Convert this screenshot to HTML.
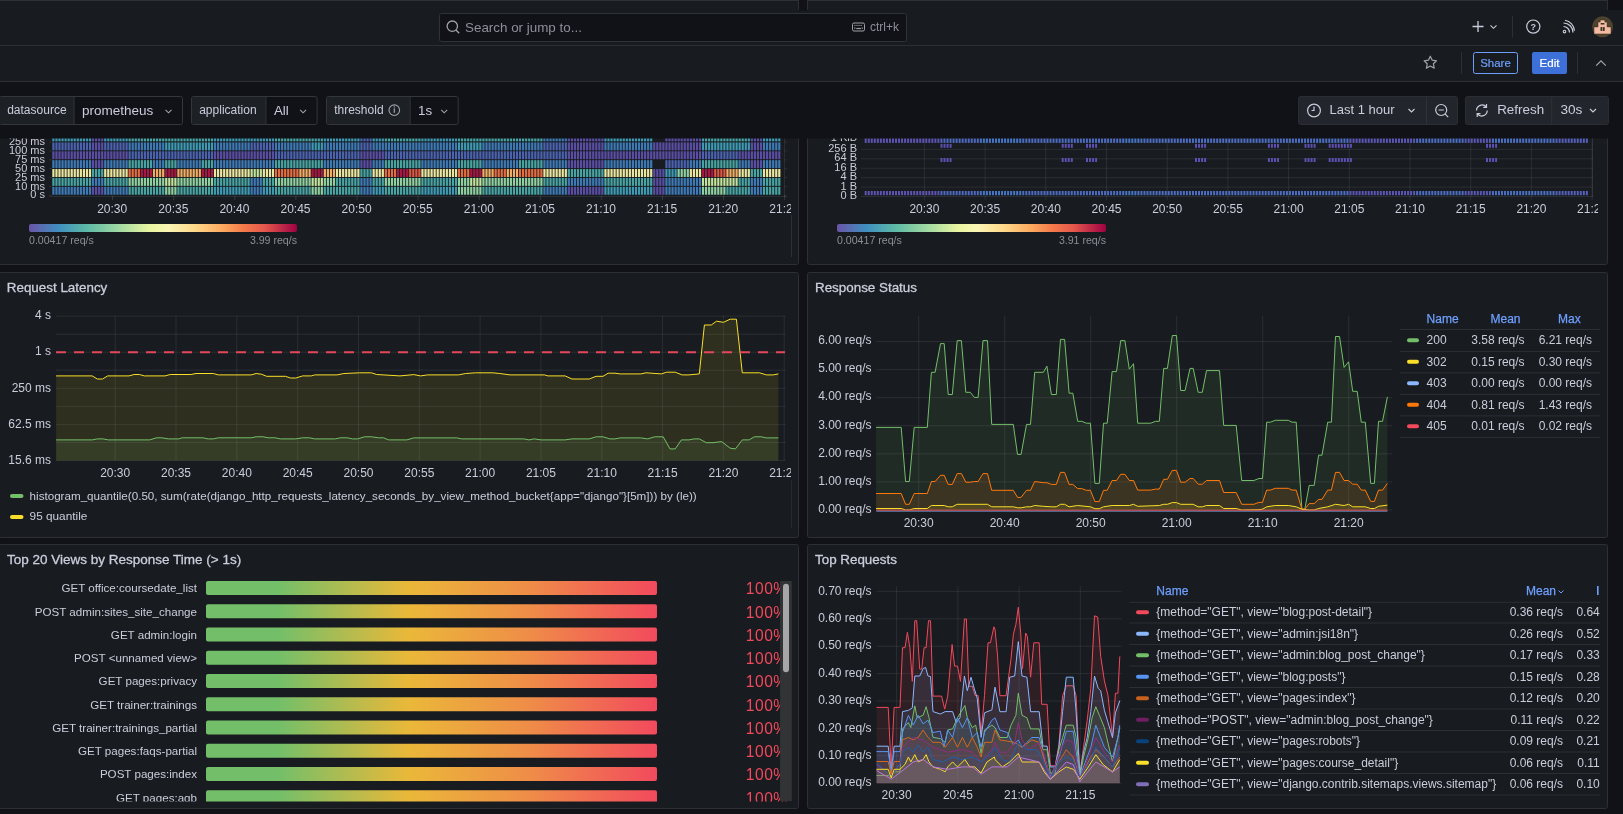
<!DOCTYPE html>
<html><head><meta charset="utf-8"><style>
html,body{margin:0;padding:0;background:#111217;width:1623px;height:814px;overflow:hidden;font-family:"Liberation Sans", sans-serif;}
svg{position:absolute;left:0;top:0;will-change:transform;}
svg text{font-family:"Liberation Sans", sans-serif;}
</style></head><body>
<svg width="1623" height="814" viewBox="0 0 1623 814">

<rect x="-1.5" y="-39.5" width="800" height="304" rx="2" fill="#181b1f" stroke="#2c2f35" stroke-width="1"/>
<rect x="807.5" y="-39.5" width="800" height="304" rx="2" fill="#181b1f" stroke="#2c2f35" stroke-width="1"/>
<rect x="-1.5" y="272.5" width="800" height="265" rx="2" fill="#181b1f" stroke="#2c2f35" stroke-width="1"/>
<rect x="807.5" y="272.5" width="800" height="265" rx="2" fill="#181b1f" stroke="#2c2f35" stroke-width="1"/>
<rect x="-1.5" y="544.5" width="800" height="264" rx="2" fill="#181b1f" stroke="#2c2f35" stroke-width="1"/>
<rect x="807.5" y="544.5" width="800" height="264" rx="2" fill="#181b1f" stroke="#2c2f35" stroke-width="1"/>
<g>
<rect x="52.30" y="133.00" width="2.2" height="8.30" fill="#3d9ab2"/><rect x="55.35" y="133.00" width="2.2" height="8.30" fill="#3d9ab2"/><rect x="58.40" y="133.00" width="2.2" height="8.30" fill="#3d9ab2"/><rect x="61.45" y="133.00" width="2.2" height="8.30" fill="#3d9ab2"/><rect x="64.50" y="133.00" width="2.2" height="8.30" fill="#3d9ab2"/><rect x="67.55" y="133.00" width="2.2" height="8.30" fill="#3d9ab2"/><rect x="70.60" y="133.00" width="2.2" height="8.30" fill="#3d9ab2"/><rect x="73.65" y="133.00" width="2.2" height="8.30" fill="#3d9ab2"/><rect x="76.70" y="133.00" width="2.2" height="8.30" fill="#3d9ab2"/><rect x="79.75" y="133.00" width="2.2" height="8.30" fill="#3d9ab2"/><rect x="82.80" y="133.00" width="2.2" height="8.30" fill="#3d9ab2"/><rect x="85.85" y="133.00" width="2.2" height="8.30" fill="#3d9ab2"/><rect x="88.90" y="133.00" width="2.2" height="8.30" fill="#3d9ab2"/><rect x="91.95" y="133.00" width="2.2" height="8.30" fill="#594da4"/><rect x="95.00" y="133.00" width="2.2" height="8.30" fill="#594da4"/><rect x="98.05" y="133.00" width="2.2" height="8.30" fill="#594da4"/><rect x="101.10" y="133.00" width="2.2" height="8.30" fill="#594da4"/><rect x="104.15" y="133.00" width="2.2" height="8.30" fill="#3d9ab2"/><rect x="107.20" y="133.00" width="2.2" height="8.30" fill="#3d9ab2"/><rect x="110.25" y="133.00" width="2.2" height="8.30" fill="#3d9ab2"/><rect x="113.30" y="133.00" width="2.2" height="8.30" fill="#3d9ab2"/><rect x="116.35" y="133.00" width="2.2" height="8.30" fill="#3d9ab2"/><rect x="119.40" y="133.00" width="2.2" height="8.30" fill="#3d9ab2"/><rect x="122.45" y="133.00" width="2.2" height="8.30" fill="#3d9ab2"/><rect x="125.50" y="133.00" width="2.2" height="8.30" fill="#3d9ab2"/><rect x="128.55" y="133.00" width="2.2" height="8.30" fill="#47a4a2"/><rect x="131.60" y="133.00" width="2.2" height="8.30" fill="#47a4a2"/><rect x="134.65" y="133.00" width="2.2" height="8.30" fill="#47a4a2"/><rect x="137.70" y="133.00" width="2.2" height="8.30" fill="#47a4a2"/><rect x="140.75" y="133.00" width="2.2" height="8.30" fill="#47a4a2"/><rect x="143.80" y="133.00" width="2.2" height="8.30" fill="#47a4a2"/><rect x="146.85" y="133.00" width="2.2" height="8.30" fill="#47a4a2"/><rect x="149.90" y="133.00" width="2.2" height="8.30" fill="#47a4a2"/><rect x="152.95" y="133.00" width="2.2" height="8.30" fill="#47a4a2"/><rect x="156.00" y="133.00" width="2.2" height="8.30" fill="#47a4a2"/><rect x="159.05" y="133.00" width="2.2" height="8.30" fill="#47a4a2"/><rect x="162.10" y="133.00" width="2.2" height="8.30" fill="#47a4a2"/><rect x="165.15" y="133.00" width="2.2" height="8.30" fill="#47a4a2"/><rect x="168.20" y="133.00" width="2.2" height="8.30" fill="#47a4a2"/><rect x="171.25" y="133.00" width="2.2" height="8.30" fill="#47a4a2"/><rect x="174.30" y="133.00" width="2.2" height="8.30" fill="#47a4a2"/><rect x="177.35" y="133.00" width="2.2" height="8.30" fill="#47a4a2"/><rect x="180.40" y="133.00" width="2.2" height="8.30" fill="#47a4a2"/><rect x="183.45" y="133.00" width="2.2" height="8.30" fill="#47a4a2"/><rect x="186.50" y="133.00" width="2.2" height="8.30" fill="#47a4a2"/><rect x="189.55" y="133.00" width="2.2" height="8.30" fill="#47a4a2"/><rect x="192.60" y="133.00" width="2.2" height="8.30" fill="#47a4a2"/><rect x="195.65" y="133.00" width="2.2" height="8.30" fill="#47a4a2"/><rect x="198.70" y="133.00" width="2.2" height="8.30" fill="#47a4a2"/><rect x="201.75" y="133.00" width="2.2" height="8.30" fill="#47a4a2"/><rect x="204.80" y="133.00" width="2.2" height="8.30" fill="#47a4a2"/><rect x="207.85" y="133.00" width="2.2" height="8.30" fill="#47a4a2"/><rect x="210.90" y="133.00" width="2.2" height="8.30" fill="#47a4a2"/><rect x="213.95" y="133.00" width="2.2" height="8.30" fill="#3d9ab2"/><rect x="217.00" y="133.00" width="2.2" height="8.30" fill="#3d9ab2"/><rect x="220.05" y="133.00" width="2.2" height="8.30" fill="#3d9ab2"/><rect x="223.10" y="133.00" width="2.2" height="8.30" fill="#3d9ab2"/><rect x="226.15" y="133.00" width="2.2" height="8.30" fill="#3d9ab2"/><rect x="229.20" y="133.00" width="2.2" height="8.30" fill="#3d9ab2"/><rect x="232.25" y="133.00" width="2.2" height="8.30" fill="#3d9ab2"/><rect x="235.30" y="133.00" width="2.2" height="8.30" fill="#3d9ab2"/><rect x="238.35" y="133.00" width="2.2" height="8.30" fill="#3d9ab2"/><rect x="241.40" y="133.00" width="2.2" height="8.30" fill="#3d9ab2"/><rect x="244.45" y="133.00" width="2.2" height="8.30" fill="#3d9ab2"/><rect x="247.50" y="133.00" width="2.2" height="8.30" fill="#3d9ab2"/><rect x="250.55" y="133.00" width="2.2" height="8.30" fill="#3d9ab2"/><rect x="253.60" y="133.00" width="2.2" height="8.30" fill="#3d9ab2"/><rect x="256.65" y="133.00" width="2.2" height="8.30" fill="#3d9ab2"/><rect x="259.70" y="133.00" width="2.2" height="8.30" fill="#3d9ab2"/><rect x="262.75" y="133.00" width="2.2" height="8.30" fill="#3d9ab2"/><rect x="265.80" y="133.00" width="2.2" height="8.30" fill="#3d9ab2"/><rect x="268.85" y="133.00" width="2.2" height="8.30" fill="#3d9ab2"/><rect x="271.90" y="133.00" width="2.2" height="8.30" fill="#3d9ab2"/><rect x="274.95" y="133.00" width="2.2" height="8.30" fill="#47a4a2"/><rect x="278.00" y="133.00" width="2.2" height="8.30" fill="#47a4a2"/><rect x="281.05" y="133.00" width="2.2" height="8.30" fill="#47a4a2"/><rect x="284.10" y="133.00" width="2.2" height="8.30" fill="#47a4a2"/><rect x="287.15" y="133.00" width="2.2" height="8.30" fill="#47a4a2"/><rect x="290.20" y="133.00" width="2.2" height="8.30" fill="#47a4a2"/><rect x="293.25" y="133.00" width="2.2" height="8.30" fill="#47a4a2"/><rect x="296.30" y="133.00" width="2.2" height="8.30" fill="#47a4a2"/><rect x="299.35" y="133.00" width="2.2" height="8.30" fill="#47a4a2"/><rect x="302.40" y="133.00" width="2.2" height="8.30" fill="#47a4a2"/><rect x="305.45" y="133.00" width="2.2" height="8.30" fill="#47a4a2"/><rect x="308.50" y="133.00" width="2.2" height="8.30" fill="#47a4a2"/><rect x="311.55" y="133.00" width="2.2" height="8.30" fill="#47a4a2"/><rect x="314.60" y="133.00" width="2.2" height="8.30" fill="#47a4a2"/><rect x="317.65" y="133.00" width="2.2" height="8.30" fill="#47a4a2"/><rect x="320.70" y="133.00" width="2.2" height="8.30" fill="#47a4a2"/><rect x="323.75" y="133.00" width="2.2" height="8.30" fill="#3d9ab2"/><rect x="326.80" y="133.00" width="2.2" height="8.30" fill="#3d9ab2"/><rect x="329.85" y="133.00" width="2.2" height="8.30" fill="#3d9ab2"/><rect x="332.90" y="133.00" width="2.2" height="8.30" fill="#3d9ab2"/><rect x="335.95" y="133.00" width="2.2" height="8.30" fill="#3d9ab2"/><rect x="339.00" y="133.00" width="2.2" height="8.30" fill="#3d9ab2"/><rect x="342.05" y="133.00" width="2.2" height="8.30" fill="#3d9ab2"/><rect x="345.10" y="133.00" width="2.2" height="8.30" fill="#3d9ab2"/><rect x="348.15" y="133.00" width="2.2" height="8.30" fill="#3d9ab2"/><rect x="351.20" y="133.00" width="2.2" height="8.30" fill="#3d9ab2"/><rect x="354.25" y="133.00" width="2.2" height="8.30" fill="#3d9ab2"/><rect x="357.30" y="133.00" width="2.2" height="8.30" fill="#3d9ab2"/><rect x="360.35" y="133.00" width="2.2" height="8.30" fill="#4a62b0"/><rect x="363.40" y="133.00" width="2.2" height="8.30" fill="#4a62b0"/><rect x="366.45" y="133.00" width="2.2" height="8.30" fill="#4a62b0"/><rect x="369.50" y="133.00" width="2.2" height="8.30" fill="#4a62b0"/><rect x="372.55" y="133.00" width="2.2" height="8.30" fill="#3d9ab2"/><rect x="375.60" y="133.00" width="2.2" height="8.30" fill="#3d9ab2"/><rect x="378.65" y="133.00" width="2.2" height="8.30" fill="#3d9ab2"/><rect x="381.70" y="133.00" width="2.2" height="8.30" fill="#3d9ab2"/><rect x="384.75" y="133.00" width="2.2" height="8.30" fill="#47a4a2"/><rect x="387.80" y="133.00" width="2.2" height="8.30" fill="#47a4a2"/><rect x="390.85" y="133.00" width="2.2" height="8.30" fill="#47a4a2"/><rect x="393.90" y="133.00" width="2.2" height="8.30" fill="#47a4a2"/><rect x="396.95" y="133.00" width="2.2" height="8.30" fill="#47a4a2"/><rect x="400.00" y="133.00" width="2.2" height="8.30" fill="#47a4a2"/><rect x="403.05" y="133.00" width="2.2" height="8.30" fill="#47a4a2"/><rect x="406.10" y="133.00" width="2.2" height="8.30" fill="#47a4a2"/><rect x="409.15" y="133.00" width="2.2" height="8.30" fill="#47a4a2"/><rect x="412.20" y="133.00" width="2.2" height="8.30" fill="#47a4a2"/><rect x="415.25" y="133.00" width="2.2" height="8.30" fill="#47a4a2"/><rect x="418.30" y="133.00" width="2.2" height="8.30" fill="#47a4a2"/><rect x="421.35" y="133.00" width="2.2" height="8.30" fill="#3d9ab2"/><rect x="424.40" y="133.00" width="2.2" height="8.30" fill="#3d9ab2"/><rect x="427.45" y="133.00" width="2.2" height="8.30" fill="#3d9ab2"/><rect x="430.50" y="133.00" width="2.2" height="8.30" fill="#3d9ab2"/><rect x="433.55" y="133.00" width="2.2" height="8.30" fill="#3d9ab2"/><rect x="436.60" y="133.00" width="2.2" height="8.30" fill="#3d9ab2"/><rect x="439.65" y="133.00" width="2.2" height="8.30" fill="#3d9ab2"/><rect x="442.70" y="133.00" width="2.2" height="8.30" fill="#3d9ab2"/><rect x="445.75" y="133.00" width="2.2" height="8.30" fill="#3d9ab2"/><rect x="448.80" y="133.00" width="2.2" height="8.30" fill="#3d9ab2"/><rect x="451.85" y="133.00" width="2.2" height="8.30" fill="#3d9ab2"/><rect x="454.90" y="133.00" width="2.2" height="8.30" fill="#3d9ab2"/><rect x="457.95" y="133.00" width="2.2" height="8.30" fill="#47a4a2"/><rect x="461.00" y="133.00" width="2.2" height="8.30" fill="#47a4a2"/><rect x="464.05" y="133.00" width="2.2" height="8.30" fill="#47a4a2"/><rect x="467.10" y="133.00" width="2.2" height="8.30" fill="#47a4a2"/><rect x="470.15" y="133.00" width="2.2" height="8.30" fill="#47a4a2"/><rect x="473.20" y="133.00" width="2.2" height="8.30" fill="#47a4a2"/><rect x="476.25" y="133.00" width="2.2" height="8.30" fill="#47a4a2"/><rect x="479.30" y="133.00" width="2.2" height="8.30" fill="#47a4a2"/><rect x="482.35" y="133.00" width="2.2" height="8.30" fill="#47a4a2"/><rect x="485.40" y="133.00" width="2.2" height="8.30" fill="#47a4a2"/><rect x="488.45" y="133.00" width="2.2" height="8.30" fill="#47a4a2"/><rect x="491.50" y="133.00" width="2.2" height="8.30" fill="#47a4a2"/><rect x="494.55" y="133.00" width="2.2" height="8.30" fill="#47a4a2"/><rect x="497.60" y="133.00" width="2.2" height="8.30" fill="#47a4a2"/><rect x="500.65" y="133.00" width="2.2" height="8.30" fill="#47a4a2"/><rect x="503.70" y="133.00" width="2.2" height="8.30" fill="#47a4a2"/><rect x="506.75" y="133.00" width="2.2" height="8.30" fill="#47a4a2"/><rect x="509.80" y="133.00" width="2.2" height="8.30" fill="#47a4a2"/><rect x="512.85" y="133.00" width="2.2" height="8.30" fill="#47a4a2"/><rect x="515.90" y="133.00" width="2.2" height="8.30" fill="#47a4a2"/><rect x="518.95" y="133.00" width="2.2" height="8.30" fill="#47a4a2"/><rect x="522.00" y="133.00" width="2.2" height="8.30" fill="#47a4a2"/><rect x="525.05" y="133.00" width="2.2" height="8.30" fill="#47a4a2"/><rect x="528.10" y="133.00" width="2.2" height="8.30" fill="#47a4a2"/><rect x="531.15" y="133.00" width="2.2" height="8.30" fill="#47a4a2"/><rect x="534.20" y="133.00" width="2.2" height="8.30" fill="#47a4a2"/><rect x="537.25" y="133.00" width="2.2" height="8.30" fill="#47a4a2"/><rect x="540.30" y="133.00" width="2.2" height="8.30" fill="#47a4a2"/><rect x="543.35" y="133.00" width="2.2" height="8.30" fill="#3d79b5"/><rect x="546.40" y="133.00" width="2.2" height="8.30" fill="#3d79b5"/><rect x="549.45" y="133.00" width="2.2" height="8.30" fill="#3d79b5"/><rect x="552.50" y="133.00" width="2.2" height="8.30" fill="#3d79b5"/><rect x="555.55" y="133.00" width="2.2" height="8.30" fill="#3d79b5"/><rect x="558.60" y="133.00" width="2.2" height="8.30" fill="#3d79b5"/><rect x="561.65" y="133.00" width="2.2" height="8.30" fill="#3d79b5"/><rect x="564.70" y="133.00" width="2.2" height="8.30" fill="#3d79b5"/><rect x="567.75" y="133.00" width="2.2" height="8.30" fill="#594da4"/><rect x="570.80" y="133.00" width="2.2" height="8.30" fill="#594da4"/><rect x="573.85" y="133.00" width="2.2" height="8.30" fill="#594da4"/><rect x="576.90" y="133.00" width="2.2" height="8.30" fill="#594da4"/><rect x="579.95" y="133.00" width="2.2" height="8.30" fill="#594da4"/><rect x="583.00" y="133.00" width="2.2" height="8.30" fill="#594da4"/><rect x="586.05" y="133.00" width="2.2" height="8.30" fill="#594da4"/><rect x="589.10" y="133.00" width="2.2" height="8.30" fill="#594da4"/><rect x="592.15" y="133.00" width="2.2" height="8.30" fill="#594da4"/><rect x="595.20" y="133.00" width="2.2" height="8.30" fill="#594da4"/><rect x="598.25" y="133.00" width="2.2" height="8.30" fill="#594da4"/><rect x="601.30" y="133.00" width="2.2" height="8.30" fill="#594da4"/><rect x="604.35" y="133.00" width="2.2" height="8.30" fill="#3d9ab2"/><rect x="607.40" y="133.00" width="2.2" height="8.30" fill="#3d9ab2"/><rect x="610.45" y="133.00" width="2.2" height="8.30" fill="#3d9ab2"/><rect x="613.50" y="133.00" width="2.2" height="8.30" fill="#3d9ab2"/><rect x="616.55" y="133.00" width="2.2" height="8.30" fill="#3d9ab2"/><rect x="619.60" y="133.00" width="2.2" height="8.30" fill="#3d9ab2"/><rect x="622.65" y="133.00" width="2.2" height="8.30" fill="#3d9ab2"/><rect x="625.70" y="133.00" width="2.2" height="8.30" fill="#3d9ab2"/><rect x="628.75" y="133.00" width="2.2" height="8.30" fill="#3d9ab2"/><rect x="631.80" y="133.00" width="2.2" height="8.30" fill="#3d9ab2"/><rect x="634.85" y="133.00" width="2.2" height="8.30" fill="#3d9ab2"/><rect x="637.90" y="133.00" width="2.2" height="8.30" fill="#3d9ab2"/><rect x="640.95" y="133.00" width="2.2" height="8.30" fill="#3d9ab2"/><rect x="644.00" y="133.00" width="2.2" height="8.30" fill="#3d9ab2"/><rect x="647.05" y="133.00" width="2.2" height="8.30" fill="#3d9ab2"/><rect x="650.10" y="133.00" width="2.2" height="8.30" fill="#3d9ab2"/><rect x="665.35" y="133.00" width="2.2" height="8.30" fill="#594da4"/><rect x="668.40" y="133.00" width="2.2" height="8.30" fill="#594da4"/><rect x="671.45" y="133.00" width="2.2" height="8.30" fill="#594da4"/><rect x="674.50" y="133.00" width="2.2" height="8.30" fill="#594da4"/><rect x="677.55" y="133.00" width="2.2" height="8.30" fill="#594da4"/><rect x="680.60" y="133.00" width="2.2" height="8.30" fill="#594da4"/><rect x="683.65" y="133.00" width="2.2" height="8.30" fill="#594da4"/><rect x="686.70" y="133.00" width="2.2" height="8.30" fill="#594da4"/><rect x="689.75" y="133.00" width="2.2" height="8.30" fill="#594da4"/><rect x="692.80" y="133.00" width="2.2" height="8.30" fill="#594da4"/><rect x="695.85" y="133.00" width="2.2" height="8.30" fill="#594da4"/><rect x="698.90" y="133.00" width="2.2" height="8.30" fill="#594da4"/><rect x="701.95" y="133.00" width="2.2" height="8.30" fill="#47a4a2"/><rect x="705.00" y="133.00" width="2.2" height="8.30" fill="#47a4a2"/><rect x="708.05" y="133.00" width="2.2" height="8.30" fill="#47a4a2"/><rect x="711.10" y="133.00" width="2.2" height="8.30" fill="#47a4a2"/><rect x="714.15" y="133.00" width="2.2" height="8.30" fill="#47a4a2"/><rect x="717.20" y="133.00" width="2.2" height="8.30" fill="#47a4a2"/><rect x="720.25" y="133.00" width="2.2" height="8.30" fill="#47a4a2"/><rect x="723.30" y="133.00" width="2.2" height="8.30" fill="#47a4a2"/><rect x="726.35" y="133.00" width="2.2" height="8.30" fill="#47a4a2"/><rect x="729.40" y="133.00" width="2.2" height="8.30" fill="#47a4a2"/><rect x="732.45" y="133.00" width="2.2" height="8.30" fill="#47a4a2"/><rect x="735.50" y="133.00" width="2.2" height="8.30" fill="#47a4a2"/><rect x="738.55" y="133.00" width="2.2" height="8.30" fill="#47a4a2"/><rect x="741.60" y="133.00" width="2.2" height="8.30" fill="#47a4a2"/><rect x="744.65" y="133.00" width="2.2" height="8.30" fill="#47a4a2"/><rect x="747.70" y="133.00" width="2.2" height="8.30" fill="#47a4a2"/><rect x="750.75" y="133.00" width="2.2" height="8.30" fill="#594da4"/><rect x="753.80" y="133.00" width="2.2" height="8.30" fill="#594da4"/><rect x="756.85" y="133.00" width="2.2" height="8.30" fill="#594da4"/><rect x="759.90" y="133.00" width="2.2" height="8.30" fill="#594da4"/><rect x="762.95" y="133.00" width="2.2" height="8.30" fill="#3d9ab2"/><rect x="766.00" y="133.00" width="2.2" height="8.30" fill="#3d9ab2"/><rect x="769.05" y="133.00" width="2.2" height="8.30" fill="#3d9ab2"/><rect x="772.10" y="133.00" width="2.2" height="8.30" fill="#3d9ab2"/><rect x="775.15" y="133.00" width="2.2" height="8.30" fill="#3d9ab2"/><rect x="778.20" y="133.00" width="2.2" height="8.30" fill="#3d9ab2"/><rect x="52.30" y="142.40" width="2.2" height="7.95" fill="#4a62b0"/><rect x="55.35" y="142.40" width="2.2" height="7.95" fill="#4a62b0"/><rect x="58.40" y="142.40" width="2.2" height="7.95" fill="#4a62b0"/><rect x="61.45" y="142.40" width="2.2" height="7.95" fill="#4a62b0"/><rect x="64.50" y="142.40" width="2.2" height="7.95" fill="#4a62b0"/><rect x="67.55" y="142.40" width="2.2" height="7.95" fill="#4a62b0"/><rect x="70.60" y="142.40" width="2.2" height="7.95" fill="#4a62b0"/><rect x="73.65" y="142.40" width="2.2" height="7.95" fill="#4a62b0"/><rect x="76.70" y="142.40" width="2.2" height="7.95" fill="#4a62b0"/><rect x="79.75" y="142.40" width="2.2" height="7.95" fill="#4a62b0"/><rect x="82.80" y="142.40" width="2.2" height="7.95" fill="#4a62b0"/><rect x="85.85" y="142.40" width="2.2" height="7.95" fill="#4a62b0"/><rect x="88.90" y="142.40" width="2.2" height="7.95" fill="#4a62b0"/><rect x="91.95" y="142.40" width="2.2" height="7.95" fill="#594da4"/><rect x="95.00" y="142.40" width="2.2" height="7.95" fill="#594da4"/><rect x="98.05" y="142.40" width="2.2" height="7.95" fill="#594da4"/><rect x="101.10" y="142.40" width="2.2" height="7.95" fill="#594da4"/><rect x="104.15" y="142.40" width="2.2" height="7.95" fill="#4a62b0"/><rect x="107.20" y="142.40" width="2.2" height="7.95" fill="#4a62b0"/><rect x="110.25" y="142.40" width="2.2" height="7.95" fill="#4a62b0"/><rect x="113.30" y="142.40" width="2.2" height="7.95" fill="#4a62b0"/><rect x="116.35" y="142.40" width="2.2" height="7.95" fill="#4a62b0"/><rect x="119.40" y="142.40" width="2.2" height="7.95" fill="#4a62b0"/><rect x="122.45" y="142.40" width="2.2" height="7.95" fill="#4a62b0"/><rect x="125.50" y="142.40" width="2.2" height="7.95" fill="#4a62b0"/><rect x="128.55" y="142.40" width="2.2" height="7.95" fill="#3d79b5"/><rect x="131.60" y="142.40" width="2.2" height="7.95" fill="#3d79b5"/><rect x="134.65" y="142.40" width="2.2" height="7.95" fill="#3d79b5"/><rect x="137.70" y="142.40" width="2.2" height="7.95" fill="#3d79b5"/><rect x="140.75" y="142.40" width="2.2" height="7.95" fill="#3d79b5"/><rect x="143.80" y="142.40" width="2.2" height="7.95" fill="#3d79b5"/><rect x="146.85" y="142.40" width="2.2" height="7.95" fill="#3d79b5"/><rect x="149.90" y="142.40" width="2.2" height="7.95" fill="#3d79b5"/><rect x="152.95" y="142.40" width="2.2" height="7.95" fill="#3d79b5"/><rect x="156.00" y="142.40" width="2.2" height="7.95" fill="#3d79b5"/><rect x="159.05" y="142.40" width="2.2" height="7.95" fill="#3d79b5"/><rect x="162.10" y="142.40" width="2.2" height="7.95" fill="#3d79b5"/><rect x="165.15" y="142.40" width="2.2" height="7.95" fill="#3d9ab2"/><rect x="168.20" y="142.40" width="2.2" height="7.95" fill="#3d9ab2"/><rect x="171.25" y="142.40" width="2.2" height="7.95" fill="#3d9ab2"/><rect x="174.30" y="142.40" width="2.2" height="7.95" fill="#3d9ab2"/><rect x="177.35" y="142.40" width="2.2" height="7.95" fill="#3d9ab2"/><rect x="180.40" y="142.40" width="2.2" height="7.95" fill="#3d9ab2"/><rect x="183.45" y="142.40" width="2.2" height="7.95" fill="#3d9ab2"/><rect x="186.50" y="142.40" width="2.2" height="7.95" fill="#3d9ab2"/><rect x="189.55" y="142.40" width="2.2" height="7.95" fill="#3d9ab2"/><rect x="192.60" y="142.40" width="2.2" height="7.95" fill="#3d9ab2"/><rect x="195.65" y="142.40" width="2.2" height="7.95" fill="#3d9ab2"/><rect x="198.70" y="142.40" width="2.2" height="7.95" fill="#3d9ab2"/><rect x="201.75" y="142.40" width="2.2" height="7.95" fill="#3d9ab2"/><rect x="204.80" y="142.40" width="2.2" height="7.95" fill="#3d9ab2"/><rect x="207.85" y="142.40" width="2.2" height="7.95" fill="#3d9ab2"/><rect x="210.90" y="142.40" width="2.2" height="7.95" fill="#3d9ab2"/><rect x="213.95" y="142.40" width="2.2" height="7.95" fill="#3d79b5"/><rect x="217.00" y="142.40" width="2.2" height="7.95" fill="#3d79b5"/><rect x="220.05" y="142.40" width="2.2" height="7.95" fill="#3d79b5"/><rect x="223.10" y="142.40" width="2.2" height="7.95" fill="#3d79b5"/><rect x="226.15" y="142.40" width="2.2" height="7.95" fill="#3d79b5"/><rect x="229.20" y="142.40" width="2.2" height="7.95" fill="#3d79b5"/><rect x="232.25" y="142.40" width="2.2" height="7.95" fill="#3d79b5"/><rect x="235.30" y="142.40" width="2.2" height="7.95" fill="#3d79b5"/><rect x="238.35" y="142.40" width="2.2" height="7.95" fill="#3d79b5"/><rect x="241.40" y="142.40" width="2.2" height="7.95" fill="#3d79b5"/><rect x="244.45" y="142.40" width="2.2" height="7.95" fill="#3d79b5"/><rect x="247.50" y="142.40" width="2.2" height="7.95" fill="#3d79b5"/><rect x="250.55" y="142.40" width="2.2" height="7.95" fill="#4a62b0"/><rect x="253.60" y="142.40" width="2.2" height="7.95" fill="#4a62b0"/><rect x="256.65" y="142.40" width="2.2" height="7.95" fill="#4a62b0"/><rect x="259.70" y="142.40" width="2.2" height="7.95" fill="#4a62b0"/><rect x="262.75" y="142.40" width="2.2" height="7.95" fill="#4a62b0"/><rect x="265.80" y="142.40" width="2.2" height="7.95" fill="#4a62b0"/><rect x="268.85" y="142.40" width="2.2" height="7.95" fill="#4a62b0"/><rect x="271.90" y="142.40" width="2.2" height="7.95" fill="#4a62b0"/><rect x="274.95" y="142.40" width="2.2" height="7.95" fill="#3d79b5"/><rect x="278.00" y="142.40" width="2.2" height="7.95" fill="#3d79b5"/><rect x="281.05" y="142.40" width="2.2" height="7.95" fill="#3d79b5"/><rect x="284.10" y="142.40" width="2.2" height="7.95" fill="#3d79b5"/><rect x="287.15" y="142.40" width="2.2" height="7.95" fill="#3d79b5"/><rect x="290.20" y="142.40" width="2.2" height="7.95" fill="#3d79b5"/><rect x="293.25" y="142.40" width="2.2" height="7.95" fill="#3d79b5"/><rect x="296.30" y="142.40" width="2.2" height="7.95" fill="#3d79b5"/><rect x="299.35" y="142.40" width="2.2" height="7.95" fill="#3d79b5"/><rect x="302.40" y="142.40" width="2.2" height="7.95" fill="#3d79b5"/><rect x="305.45" y="142.40" width="2.2" height="7.95" fill="#3d79b5"/><rect x="308.50" y="142.40" width="2.2" height="7.95" fill="#3d79b5"/><rect x="311.55" y="142.40" width="2.2" height="7.95" fill="#3d9ab2"/><rect x="314.60" y="142.40" width="2.2" height="7.95" fill="#3d9ab2"/><rect x="317.65" y="142.40" width="2.2" height="7.95" fill="#3d9ab2"/><rect x="320.70" y="142.40" width="2.2" height="7.95" fill="#3d9ab2"/><rect x="323.75" y="142.40" width="2.2" height="7.95" fill="#3d79b5"/><rect x="326.80" y="142.40" width="2.2" height="7.95" fill="#3d79b5"/><rect x="329.85" y="142.40" width="2.2" height="7.95" fill="#3d79b5"/><rect x="332.90" y="142.40" width="2.2" height="7.95" fill="#3d79b5"/><rect x="335.95" y="142.40" width="2.2" height="7.95" fill="#3d79b5"/><rect x="339.00" y="142.40" width="2.2" height="7.95" fill="#3d79b5"/><rect x="342.05" y="142.40" width="2.2" height="7.95" fill="#3d79b5"/><rect x="345.10" y="142.40" width="2.2" height="7.95" fill="#3d79b5"/><rect x="348.15" y="142.40" width="2.2" height="7.95" fill="#3d79b5"/><rect x="351.20" y="142.40" width="2.2" height="7.95" fill="#3d79b5"/><rect x="354.25" y="142.40" width="2.2" height="7.95" fill="#3d79b5"/><rect x="357.30" y="142.40" width="2.2" height="7.95" fill="#3d79b5"/><rect x="360.35" y="142.40" width="2.2" height="7.95" fill="#4a62b0"/><rect x="363.40" y="142.40" width="2.2" height="7.95" fill="#4a62b0"/><rect x="366.45" y="142.40" width="2.2" height="7.95" fill="#4a62b0"/><rect x="369.50" y="142.40" width="2.2" height="7.95" fill="#4a62b0"/><rect x="372.55" y="142.40" width="2.2" height="7.95" fill="#3d79b5"/><rect x="375.60" y="142.40" width="2.2" height="7.95" fill="#3d79b5"/><rect x="378.65" y="142.40" width="2.2" height="7.95" fill="#3d79b5"/><rect x="381.70" y="142.40" width="2.2" height="7.95" fill="#3d79b5"/><rect x="384.75" y="142.40" width="2.2" height="7.95" fill="#3d79b5"/><rect x="387.80" y="142.40" width="2.2" height="7.95" fill="#3d79b5"/><rect x="390.85" y="142.40" width="2.2" height="7.95" fill="#3d79b5"/><rect x="393.90" y="142.40" width="2.2" height="7.95" fill="#3d79b5"/><rect x="396.95" y="142.40" width="2.2" height="7.95" fill="#3d79b5"/><rect x="400.00" y="142.40" width="2.2" height="7.95" fill="#3d79b5"/><rect x="403.05" y="142.40" width="2.2" height="7.95" fill="#3d79b5"/><rect x="406.10" y="142.40" width="2.2" height="7.95" fill="#3d79b5"/><rect x="409.15" y="142.40" width="2.2" height="7.95" fill="#3d79b5"/><rect x="412.20" y="142.40" width="2.2" height="7.95" fill="#3d79b5"/><rect x="415.25" y="142.40" width="2.2" height="7.95" fill="#3d79b5"/><rect x="418.30" y="142.40" width="2.2" height="7.95" fill="#3d79b5"/><rect x="421.35" y="142.40" width="2.2" height="7.95" fill="#3d79b5"/><rect x="424.40" y="142.40" width="2.2" height="7.95" fill="#3d79b5"/><rect x="427.45" y="142.40" width="2.2" height="7.95" fill="#3d79b5"/><rect x="430.50" y="142.40" width="2.2" height="7.95" fill="#3d79b5"/><rect x="433.55" y="142.40" width="2.2" height="7.95" fill="#3d79b5"/><rect x="436.60" y="142.40" width="2.2" height="7.95" fill="#3d79b5"/><rect x="439.65" y="142.40" width="2.2" height="7.95" fill="#3d79b5"/><rect x="442.70" y="142.40" width="2.2" height="7.95" fill="#3d79b5"/><rect x="445.75" y="142.40" width="2.2" height="7.95" fill="#3d79b5"/><rect x="448.80" y="142.40" width="2.2" height="7.95" fill="#3d79b5"/><rect x="451.85" y="142.40" width="2.2" height="7.95" fill="#3d79b5"/><rect x="454.90" y="142.40" width="2.2" height="7.95" fill="#3d79b5"/><rect x="457.95" y="142.40" width="2.2" height="7.95" fill="#3d9ab2"/><rect x="461.00" y="142.40" width="2.2" height="7.95" fill="#3d9ab2"/><rect x="464.05" y="142.40" width="2.2" height="7.95" fill="#3d9ab2"/><rect x="467.10" y="142.40" width="2.2" height="7.95" fill="#3d9ab2"/><rect x="470.15" y="142.40" width="2.2" height="7.95" fill="#3d9ab2"/><rect x="473.20" y="142.40" width="2.2" height="7.95" fill="#3d9ab2"/><rect x="476.25" y="142.40" width="2.2" height="7.95" fill="#3d9ab2"/><rect x="479.30" y="142.40" width="2.2" height="7.95" fill="#3d9ab2"/><rect x="482.35" y="142.40" width="2.2" height="7.95" fill="#3d79b5"/><rect x="485.40" y="142.40" width="2.2" height="7.95" fill="#3d79b5"/><rect x="488.45" y="142.40" width="2.2" height="7.95" fill="#3d79b5"/><rect x="491.50" y="142.40" width="2.2" height="7.95" fill="#3d79b5"/><rect x="494.55" y="142.40" width="2.2" height="7.95" fill="#3d79b5"/><rect x="497.60" y="142.40" width="2.2" height="7.95" fill="#3d79b5"/><rect x="500.65" y="142.40" width="2.2" height="7.95" fill="#3d79b5"/><rect x="503.70" y="142.40" width="2.2" height="7.95" fill="#3d79b5"/><rect x="506.75" y="142.40" width="2.2" height="7.95" fill="#3d79b5"/><rect x="509.80" y="142.40" width="2.2" height="7.95" fill="#3d79b5"/><rect x="512.85" y="142.40" width="2.2" height="7.95" fill="#3d79b5"/><rect x="515.90" y="142.40" width="2.2" height="7.95" fill="#3d79b5"/><rect x="518.95" y="142.40" width="2.2" height="7.95" fill="#3d79b5"/><rect x="522.00" y="142.40" width="2.2" height="7.95" fill="#3d79b5"/><rect x="525.05" y="142.40" width="2.2" height="7.95" fill="#3d79b5"/><rect x="528.10" y="142.40" width="2.2" height="7.95" fill="#3d79b5"/><rect x="531.15" y="142.40" width="2.2" height="7.95" fill="#3d79b5"/><rect x="534.20" y="142.40" width="2.2" height="7.95" fill="#3d79b5"/><rect x="537.25" y="142.40" width="2.2" height="7.95" fill="#3d79b5"/><rect x="540.30" y="142.40" width="2.2" height="7.95" fill="#3d79b5"/><rect x="543.35" y="142.40" width="2.2" height="7.95" fill="#4a62b0"/><rect x="546.40" y="142.40" width="2.2" height="7.95" fill="#4a62b0"/><rect x="549.45" y="142.40" width="2.2" height="7.95" fill="#4a62b0"/><rect x="552.50" y="142.40" width="2.2" height="7.95" fill="#4a62b0"/><rect x="555.55" y="142.40" width="2.2" height="7.95" fill="#4a62b0"/><rect x="558.60" y="142.40" width="2.2" height="7.95" fill="#4a62b0"/><rect x="561.65" y="142.40" width="2.2" height="7.95" fill="#4a62b0"/><rect x="564.70" y="142.40" width="2.2" height="7.95" fill="#4a62b0"/><rect x="567.75" y="142.40" width="2.2" height="7.95" fill="#594da4"/><rect x="570.80" y="142.40" width="2.2" height="7.95" fill="#594da4"/><rect x="573.85" y="142.40" width="2.2" height="7.95" fill="#594da4"/><rect x="576.90" y="142.40" width="2.2" height="7.95" fill="#594da4"/><rect x="579.95" y="142.40" width="2.2" height="7.95" fill="#594da4"/><rect x="583.00" y="142.40" width="2.2" height="7.95" fill="#594da4"/><rect x="586.05" y="142.40" width="2.2" height="7.95" fill="#594da4"/><rect x="589.10" y="142.40" width="2.2" height="7.95" fill="#594da4"/><rect x="592.15" y="142.40" width="2.2" height="7.95" fill="#594da4"/><rect x="595.20" y="142.40" width="2.2" height="7.95" fill="#594da4"/><rect x="598.25" y="142.40" width="2.2" height="7.95" fill="#594da4"/><rect x="601.30" y="142.40" width="2.2" height="7.95" fill="#594da4"/><rect x="604.35" y="142.40" width="2.2" height="7.95" fill="#3d79b5"/><rect x="607.40" y="142.40" width="2.2" height="7.95" fill="#3d79b5"/><rect x="610.45" y="142.40" width="2.2" height="7.95" fill="#3d79b5"/><rect x="613.50" y="142.40" width="2.2" height="7.95" fill="#3d79b5"/><rect x="616.55" y="142.40" width="2.2" height="7.95" fill="#3d79b5"/><rect x="619.60" y="142.40" width="2.2" height="7.95" fill="#3d79b5"/><rect x="622.65" y="142.40" width="2.2" height="7.95" fill="#3d79b5"/><rect x="625.70" y="142.40" width="2.2" height="7.95" fill="#3d79b5"/><rect x="628.75" y="142.40" width="2.2" height="7.95" fill="#3d79b5"/><rect x="631.80" y="142.40" width="2.2" height="7.95" fill="#3d79b5"/><rect x="634.85" y="142.40" width="2.2" height="7.95" fill="#3d79b5"/><rect x="637.90" y="142.40" width="2.2" height="7.95" fill="#3d79b5"/><rect x="640.95" y="142.40" width="2.2" height="7.95" fill="#3d79b5"/><rect x="644.00" y="142.40" width="2.2" height="7.95" fill="#3d79b5"/><rect x="647.05" y="142.40" width="2.2" height="7.95" fill="#3d79b5"/><rect x="650.10" y="142.40" width="2.2" height="7.95" fill="#3d79b5"/><rect x="653.15" y="142.40" width="2.2" height="7.95" fill="#594da4"/><rect x="656.20" y="142.40" width="2.2" height="7.95" fill="#594da4"/><rect x="659.25" y="142.40" width="2.2" height="7.95" fill="#594da4"/><rect x="662.30" y="142.40" width="2.2" height="7.95" fill="#594da4"/><rect x="665.35" y="142.40" width="2.2" height="7.95" fill="#594da4"/><rect x="668.40" y="142.40" width="2.2" height="7.95" fill="#594da4"/><rect x="671.45" y="142.40" width="2.2" height="7.95" fill="#594da4"/><rect x="674.50" y="142.40" width="2.2" height="7.95" fill="#594da4"/><rect x="677.55" y="142.40" width="2.2" height="7.95" fill="#594da4"/><rect x="680.60" y="142.40" width="2.2" height="7.95" fill="#594da4"/><rect x="683.65" y="142.40" width="2.2" height="7.95" fill="#594da4"/><rect x="686.70" y="142.40" width="2.2" height="7.95" fill="#594da4"/><rect x="689.75" y="142.40" width="2.2" height="7.95" fill="#594da4"/><rect x="692.80" y="142.40" width="2.2" height="7.95" fill="#594da4"/><rect x="695.85" y="142.40" width="2.2" height="7.95" fill="#594da4"/><rect x="698.90" y="142.40" width="2.2" height="7.95" fill="#594da4"/><rect x="701.95" y="142.40" width="2.2" height="7.95" fill="#3d9ab2"/><rect x="705.00" y="142.40" width="2.2" height="7.95" fill="#3d9ab2"/><rect x="708.05" y="142.40" width="2.2" height="7.95" fill="#3d9ab2"/><rect x="711.10" y="142.40" width="2.2" height="7.95" fill="#3d9ab2"/><rect x="714.15" y="142.40" width="2.2" height="7.95" fill="#3d9ab2"/><rect x="717.20" y="142.40" width="2.2" height="7.95" fill="#3d9ab2"/><rect x="720.25" y="142.40" width="2.2" height="7.95" fill="#3d9ab2"/><rect x="723.30" y="142.40" width="2.2" height="7.95" fill="#3d9ab2"/><rect x="726.35" y="142.40" width="2.2" height="7.95" fill="#3d9ab2"/><rect x="729.40" y="142.40" width="2.2" height="7.95" fill="#3d9ab2"/><rect x="732.45" y="142.40" width="2.2" height="7.95" fill="#3d9ab2"/><rect x="735.50" y="142.40" width="2.2" height="7.95" fill="#3d9ab2"/><rect x="738.55" y="142.40" width="2.2" height="7.95" fill="#3d9ab2"/><rect x="741.60" y="142.40" width="2.2" height="7.95" fill="#3d9ab2"/><rect x="744.65" y="142.40" width="2.2" height="7.95" fill="#3d9ab2"/><rect x="747.70" y="142.40" width="2.2" height="7.95" fill="#3d9ab2"/><rect x="750.75" y="142.40" width="2.2" height="7.95" fill="#594da4"/><rect x="753.80" y="142.40" width="2.2" height="7.95" fill="#594da4"/><rect x="756.85" y="142.40" width="2.2" height="7.95" fill="#594da4"/><rect x="759.90" y="142.40" width="2.2" height="7.95" fill="#594da4"/><rect x="762.95" y="142.40" width="2.2" height="7.95" fill="#3d79b5"/><rect x="766.00" y="142.40" width="2.2" height="7.95" fill="#3d79b5"/><rect x="769.05" y="142.40" width="2.2" height="7.95" fill="#3d79b5"/><rect x="772.10" y="142.40" width="2.2" height="7.95" fill="#3d79b5"/><rect x="775.15" y="142.40" width="2.2" height="7.95" fill="#3d79b5"/><rect x="778.20" y="142.40" width="2.2" height="7.95" fill="#3d79b5"/><rect x="52.30" y="151.28" width="2.2" height="7.95" fill="#594da4"/><rect x="55.35" y="151.28" width="2.2" height="7.95" fill="#594da4"/><rect x="58.40" y="151.28" width="2.2" height="7.95" fill="#594da4"/><rect x="61.45" y="151.28" width="2.2" height="7.95" fill="#594da4"/><rect x="64.50" y="151.28" width="2.2" height="7.95" fill="#594da4"/><rect x="67.55" y="151.28" width="2.2" height="7.95" fill="#594da4"/><rect x="70.60" y="151.28" width="2.2" height="7.95" fill="#594da4"/><rect x="73.65" y="151.28" width="2.2" height="7.95" fill="#594da4"/><rect x="76.70" y="151.28" width="2.2" height="7.95" fill="#594da4"/><rect x="79.75" y="151.28" width="2.2" height="7.95" fill="#594da4"/><rect x="82.80" y="151.28" width="2.2" height="7.95" fill="#594da4"/><rect x="85.85" y="151.28" width="2.2" height="7.95" fill="#594da4"/><rect x="88.90" y="151.28" width="2.2" height="7.95" fill="#594da4"/><rect x="91.95" y="151.28" width="2.2" height="7.95" fill="#594da4"/><rect x="95.00" y="151.28" width="2.2" height="7.95" fill="#594da4"/><rect x="98.05" y="151.28" width="2.2" height="7.95" fill="#594da4"/><rect x="101.10" y="151.28" width="2.2" height="7.95" fill="#594da4"/><rect x="104.15" y="151.28" width="2.2" height="7.95" fill="#594da4"/><rect x="107.20" y="151.28" width="2.2" height="7.95" fill="#594da4"/><rect x="110.25" y="151.28" width="2.2" height="7.95" fill="#594da4"/><rect x="113.30" y="151.28" width="2.2" height="7.95" fill="#594da4"/><rect x="116.35" y="151.28" width="2.2" height="7.95" fill="#594da4"/><rect x="119.40" y="151.28" width="2.2" height="7.95" fill="#594da4"/><rect x="122.45" y="151.28" width="2.2" height="7.95" fill="#594da4"/><rect x="125.50" y="151.28" width="2.2" height="7.95" fill="#594da4"/><rect x="128.55" y="151.28" width="2.2" height="7.95" fill="#4a62b0"/><rect x="131.60" y="151.28" width="2.2" height="7.95" fill="#4a62b0"/><rect x="134.65" y="151.28" width="2.2" height="7.95" fill="#4a62b0"/><rect x="137.70" y="151.28" width="2.2" height="7.95" fill="#4a62b0"/><rect x="140.75" y="151.28" width="2.2" height="7.95" fill="#4a62b0"/><rect x="143.80" y="151.28" width="2.2" height="7.95" fill="#4a62b0"/><rect x="146.85" y="151.28" width="2.2" height="7.95" fill="#4a62b0"/><rect x="149.90" y="151.28" width="2.2" height="7.95" fill="#4a62b0"/><rect x="152.95" y="151.28" width="2.2" height="7.95" fill="#4a62b0"/><rect x="156.00" y="151.28" width="2.2" height="7.95" fill="#4a62b0"/><rect x="159.05" y="151.28" width="2.2" height="7.95" fill="#4a62b0"/><rect x="162.10" y="151.28" width="2.2" height="7.95" fill="#4a62b0"/><rect x="165.15" y="151.28" width="2.2" height="7.95" fill="#4a62b0"/><rect x="168.20" y="151.28" width="2.2" height="7.95" fill="#4a62b0"/><rect x="171.25" y="151.28" width="2.2" height="7.95" fill="#4a62b0"/><rect x="174.30" y="151.28" width="2.2" height="7.95" fill="#4a62b0"/><rect x="177.35" y="151.28" width="2.2" height="7.95" fill="#4a62b0"/><rect x="180.40" y="151.28" width="2.2" height="7.95" fill="#4a62b0"/><rect x="183.45" y="151.28" width="2.2" height="7.95" fill="#4a62b0"/><rect x="186.50" y="151.28" width="2.2" height="7.95" fill="#4a62b0"/><rect x="189.55" y="151.28" width="2.2" height="7.95" fill="#4a62b0"/><rect x="192.60" y="151.28" width="2.2" height="7.95" fill="#4a62b0"/><rect x="195.65" y="151.28" width="2.2" height="7.95" fill="#4a62b0"/><rect x="198.70" y="151.28" width="2.2" height="7.95" fill="#4a62b0"/><rect x="201.75" y="151.28" width="2.2" height="7.95" fill="#4a62b0"/><rect x="204.80" y="151.28" width="2.2" height="7.95" fill="#4a62b0"/><rect x="207.85" y="151.28" width="2.2" height="7.95" fill="#4a62b0"/><rect x="210.90" y="151.28" width="2.2" height="7.95" fill="#4a62b0"/><rect x="213.95" y="151.28" width="2.2" height="7.95" fill="#594da4"/><rect x="217.00" y="151.28" width="2.2" height="7.95" fill="#594da4"/><rect x="220.05" y="151.28" width="2.2" height="7.95" fill="#594da4"/><rect x="223.10" y="151.28" width="2.2" height="7.95" fill="#594da4"/><rect x="226.15" y="151.28" width="2.2" height="7.95" fill="#594da4"/><rect x="229.20" y="151.28" width="2.2" height="7.95" fill="#594da4"/><rect x="232.25" y="151.28" width="2.2" height="7.95" fill="#594da4"/><rect x="235.30" y="151.28" width="2.2" height="7.95" fill="#594da4"/><rect x="238.35" y="151.28" width="2.2" height="7.95" fill="#594da4"/><rect x="241.40" y="151.28" width="2.2" height="7.95" fill="#594da4"/><rect x="244.45" y="151.28" width="2.2" height="7.95" fill="#594da4"/><rect x="247.50" y="151.28" width="2.2" height="7.95" fill="#594da4"/><rect x="250.55" y="151.28" width="2.2" height="7.95" fill="#594da4"/><rect x="253.60" y="151.28" width="2.2" height="7.95" fill="#594da4"/><rect x="256.65" y="151.28" width="2.2" height="7.95" fill="#594da4"/><rect x="259.70" y="151.28" width="2.2" height="7.95" fill="#594da4"/><rect x="262.75" y="151.28" width="2.2" height="7.95" fill="#594da4"/><rect x="265.80" y="151.28" width="2.2" height="7.95" fill="#594da4"/><rect x="268.85" y="151.28" width="2.2" height="7.95" fill="#594da4"/><rect x="271.90" y="151.28" width="2.2" height="7.95" fill="#594da4"/><rect x="274.95" y="151.28" width="2.2" height="7.95" fill="#4a62b0"/><rect x="278.00" y="151.28" width="2.2" height="7.95" fill="#4a62b0"/><rect x="281.05" y="151.28" width="2.2" height="7.95" fill="#4a62b0"/><rect x="284.10" y="151.28" width="2.2" height="7.95" fill="#4a62b0"/><rect x="287.15" y="151.28" width="2.2" height="7.95" fill="#4a62b0"/><rect x="290.20" y="151.28" width="2.2" height="7.95" fill="#4a62b0"/><rect x="293.25" y="151.28" width="2.2" height="7.95" fill="#4a62b0"/><rect x="296.30" y="151.28" width="2.2" height="7.95" fill="#4a62b0"/><rect x="299.35" y="151.28" width="2.2" height="7.95" fill="#4a62b0"/><rect x="302.40" y="151.28" width="2.2" height="7.95" fill="#4a62b0"/><rect x="305.45" y="151.28" width="2.2" height="7.95" fill="#4a62b0"/><rect x="308.50" y="151.28" width="2.2" height="7.95" fill="#4a62b0"/><rect x="311.55" y="151.28" width="2.2" height="7.95" fill="#4a62b0"/><rect x="314.60" y="151.28" width="2.2" height="7.95" fill="#4a62b0"/><rect x="317.65" y="151.28" width="2.2" height="7.95" fill="#4a62b0"/><rect x="320.70" y="151.28" width="2.2" height="7.95" fill="#4a62b0"/><rect x="323.75" y="151.28" width="2.2" height="7.95" fill="#4a62b0"/><rect x="326.80" y="151.28" width="2.2" height="7.95" fill="#4a62b0"/><rect x="329.85" y="151.28" width="2.2" height="7.95" fill="#4a62b0"/><rect x="332.90" y="151.28" width="2.2" height="7.95" fill="#4a62b0"/><rect x="335.95" y="151.28" width="2.2" height="7.95" fill="#4a62b0"/><rect x="339.00" y="151.28" width="2.2" height="7.95" fill="#4a62b0"/><rect x="342.05" y="151.28" width="2.2" height="7.95" fill="#4a62b0"/><rect x="345.10" y="151.28" width="2.2" height="7.95" fill="#4a62b0"/><rect x="348.15" y="151.28" width="2.2" height="7.95" fill="#4a62b0"/><rect x="351.20" y="151.28" width="2.2" height="7.95" fill="#4a62b0"/><rect x="354.25" y="151.28" width="2.2" height="7.95" fill="#4a62b0"/><rect x="357.30" y="151.28" width="2.2" height="7.95" fill="#4a62b0"/><rect x="360.35" y="151.28" width="2.2" height="7.95" fill="#594da4"/><rect x="363.40" y="151.28" width="2.2" height="7.95" fill="#594da4"/><rect x="366.45" y="151.28" width="2.2" height="7.95" fill="#594da4"/><rect x="369.50" y="151.28" width="2.2" height="7.95" fill="#594da4"/><rect x="372.55" y="151.28" width="2.2" height="7.95" fill="#594da4"/><rect x="375.60" y="151.28" width="2.2" height="7.95" fill="#594da4"/><rect x="378.65" y="151.28" width="2.2" height="7.95" fill="#594da4"/><rect x="381.70" y="151.28" width="2.2" height="7.95" fill="#594da4"/><rect x="384.75" y="151.28" width="2.2" height="7.95" fill="#4a62b0"/><rect x="387.80" y="151.28" width="2.2" height="7.95" fill="#4a62b0"/><rect x="390.85" y="151.28" width="2.2" height="7.95" fill="#4a62b0"/><rect x="393.90" y="151.28" width="2.2" height="7.95" fill="#4a62b0"/><rect x="396.95" y="151.28" width="2.2" height="7.95" fill="#4a62b0"/><rect x="400.00" y="151.28" width="2.2" height="7.95" fill="#4a62b0"/><rect x="403.05" y="151.28" width="2.2" height="7.95" fill="#4a62b0"/><rect x="406.10" y="151.28" width="2.2" height="7.95" fill="#4a62b0"/><rect x="409.15" y="151.28" width="2.2" height="7.95" fill="#4a62b0"/><rect x="412.20" y="151.28" width="2.2" height="7.95" fill="#4a62b0"/><rect x="415.25" y="151.28" width="2.2" height="7.95" fill="#4a62b0"/><rect x="418.30" y="151.28" width="2.2" height="7.95" fill="#4a62b0"/><rect x="421.35" y="151.28" width="2.2" height="7.95" fill="#4a62b0"/><rect x="424.40" y="151.28" width="2.2" height="7.95" fill="#4a62b0"/><rect x="427.45" y="151.28" width="2.2" height="7.95" fill="#4a62b0"/><rect x="430.50" y="151.28" width="2.2" height="7.95" fill="#4a62b0"/><rect x="433.55" y="151.28" width="2.2" height="7.95" fill="#4a62b0"/><rect x="436.60" y="151.28" width="2.2" height="7.95" fill="#4a62b0"/><rect x="439.65" y="151.28" width="2.2" height="7.95" fill="#4a62b0"/><rect x="442.70" y="151.28" width="2.2" height="7.95" fill="#4a62b0"/><rect x="445.75" y="151.28" width="2.2" height="7.95" fill="#4a62b0"/><rect x="448.80" y="151.28" width="2.2" height="7.95" fill="#4a62b0"/><rect x="451.85" y="151.28" width="2.2" height="7.95" fill="#4a62b0"/><rect x="454.90" y="151.28" width="2.2" height="7.95" fill="#4a62b0"/><rect x="457.95" y="151.28" width="2.2" height="7.95" fill="#4a62b0"/><rect x="461.00" y="151.28" width="2.2" height="7.95" fill="#4a62b0"/><rect x="464.05" y="151.28" width="2.2" height="7.95" fill="#4a62b0"/><rect x="467.10" y="151.28" width="2.2" height="7.95" fill="#4a62b0"/><rect x="470.15" y="151.28" width="2.2" height="7.95" fill="#4a62b0"/><rect x="473.20" y="151.28" width="2.2" height="7.95" fill="#4a62b0"/><rect x="476.25" y="151.28" width="2.2" height="7.95" fill="#4a62b0"/><rect x="479.30" y="151.28" width="2.2" height="7.95" fill="#4a62b0"/><rect x="482.35" y="151.28" width="2.2" height="7.95" fill="#4a62b0"/><rect x="485.40" y="151.28" width="2.2" height="7.95" fill="#4a62b0"/><rect x="488.45" y="151.28" width="2.2" height="7.95" fill="#4a62b0"/><rect x="491.50" y="151.28" width="2.2" height="7.95" fill="#4a62b0"/><rect x="494.55" y="151.28" width="2.2" height="7.95" fill="#4a62b0"/><rect x="497.60" y="151.28" width="2.2" height="7.95" fill="#4a62b0"/><rect x="500.65" y="151.28" width="2.2" height="7.95" fill="#4a62b0"/><rect x="503.70" y="151.28" width="2.2" height="7.95" fill="#4a62b0"/><rect x="506.75" y="151.28" width="2.2" height="7.95" fill="#4a62b0"/><rect x="509.80" y="151.28" width="2.2" height="7.95" fill="#4a62b0"/><rect x="512.85" y="151.28" width="2.2" height="7.95" fill="#4a62b0"/><rect x="515.90" y="151.28" width="2.2" height="7.95" fill="#4a62b0"/><rect x="518.95" y="151.28" width="2.2" height="7.95" fill="#4a62b0"/><rect x="522.00" y="151.28" width="2.2" height="7.95" fill="#4a62b0"/><rect x="525.05" y="151.28" width="2.2" height="7.95" fill="#4a62b0"/><rect x="528.10" y="151.28" width="2.2" height="7.95" fill="#4a62b0"/><rect x="531.15" y="151.28" width="2.2" height="7.95" fill="#4a62b0"/><rect x="534.20" y="151.28" width="2.2" height="7.95" fill="#4a62b0"/><rect x="537.25" y="151.28" width="2.2" height="7.95" fill="#4a62b0"/><rect x="540.30" y="151.28" width="2.2" height="7.95" fill="#4a62b0"/><rect x="543.35" y="151.28" width="2.2" height="7.95" fill="#4a62b0"/><rect x="546.40" y="151.28" width="2.2" height="7.95" fill="#4a62b0"/><rect x="549.45" y="151.28" width="2.2" height="7.95" fill="#4a62b0"/><rect x="552.50" y="151.28" width="2.2" height="7.95" fill="#4a62b0"/><rect x="555.55" y="151.28" width="2.2" height="7.95" fill="#4a62b0"/><rect x="558.60" y="151.28" width="2.2" height="7.95" fill="#4a62b0"/><rect x="561.65" y="151.28" width="2.2" height="7.95" fill="#4a62b0"/><rect x="564.70" y="151.28" width="2.2" height="7.95" fill="#4a62b0"/><rect x="567.75" y="151.28" width="2.2" height="7.95" fill="#594da4"/><rect x="570.80" y="151.28" width="2.2" height="7.95" fill="#594da4"/><rect x="573.85" y="151.28" width="2.2" height="7.95" fill="#594da4"/><rect x="576.90" y="151.28" width="2.2" height="7.95" fill="#594da4"/><rect x="579.95" y="151.28" width="2.2" height="7.95" fill="#594da4"/><rect x="583.00" y="151.28" width="2.2" height="7.95" fill="#594da4"/><rect x="586.05" y="151.28" width="2.2" height="7.95" fill="#594da4"/><rect x="589.10" y="151.28" width="2.2" height="7.95" fill="#594da4"/><rect x="592.15" y="151.28" width="2.2" height="7.95" fill="#594da4"/><rect x="595.20" y="151.28" width="2.2" height="7.95" fill="#594da4"/><rect x="598.25" y="151.28" width="2.2" height="7.95" fill="#594da4"/><rect x="601.30" y="151.28" width="2.2" height="7.95" fill="#594da4"/><rect x="604.35" y="151.28" width="2.2" height="7.95" fill="#594da4"/><rect x="607.40" y="151.28" width="2.2" height="7.95" fill="#594da4"/><rect x="610.45" y="151.28" width="2.2" height="7.95" fill="#594da4"/><rect x="613.50" y="151.28" width="2.2" height="7.95" fill="#594da4"/><rect x="616.55" y="151.28" width="2.2" height="7.95" fill="#594da4"/><rect x="619.60" y="151.28" width="2.2" height="7.95" fill="#594da4"/><rect x="622.65" y="151.28" width="2.2" height="7.95" fill="#594da4"/><rect x="625.70" y="151.28" width="2.2" height="7.95" fill="#594da4"/><rect x="628.75" y="151.28" width="2.2" height="7.95" fill="#594da4"/><rect x="631.80" y="151.28" width="2.2" height="7.95" fill="#594da4"/><rect x="634.85" y="151.28" width="2.2" height="7.95" fill="#594da4"/><rect x="637.90" y="151.28" width="2.2" height="7.95" fill="#594da4"/><rect x="640.95" y="151.28" width="2.2" height="7.95" fill="#594da4"/><rect x="644.00" y="151.28" width="2.2" height="7.95" fill="#594da4"/><rect x="647.05" y="151.28" width="2.2" height="7.95" fill="#594da4"/><rect x="650.10" y="151.28" width="2.2" height="7.95" fill="#594da4"/><rect x="653.15" y="151.28" width="2.2" height="7.95" fill="#594da4"/><rect x="656.20" y="151.28" width="2.2" height="7.95" fill="#594da4"/><rect x="659.25" y="151.28" width="2.2" height="7.95" fill="#594da4"/><rect x="662.30" y="151.28" width="2.2" height="7.95" fill="#594da4"/><rect x="665.35" y="151.28" width="2.2" height="7.95" fill="#594da4"/><rect x="668.40" y="151.28" width="2.2" height="7.95" fill="#594da4"/><rect x="671.45" y="151.28" width="2.2" height="7.95" fill="#594da4"/><rect x="674.50" y="151.28" width="2.2" height="7.95" fill="#594da4"/><rect x="677.55" y="151.28" width="2.2" height="7.95" fill="#594da4"/><rect x="680.60" y="151.28" width="2.2" height="7.95" fill="#594da4"/><rect x="683.65" y="151.28" width="2.2" height="7.95" fill="#594da4"/><rect x="686.70" y="151.28" width="2.2" height="7.95" fill="#594da4"/><rect x="689.75" y="151.28" width="2.2" height="7.95" fill="#594da4"/><rect x="692.80" y="151.28" width="2.2" height="7.95" fill="#594da4"/><rect x="695.85" y="151.28" width="2.2" height="7.95" fill="#594da4"/><rect x="698.90" y="151.28" width="2.2" height="7.95" fill="#594da4"/><rect x="701.95" y="151.28" width="2.2" height="7.95" fill="#4a62b0"/><rect x="705.00" y="151.28" width="2.2" height="7.95" fill="#4a62b0"/><rect x="708.05" y="151.28" width="2.2" height="7.95" fill="#4a62b0"/><rect x="711.10" y="151.28" width="2.2" height="7.95" fill="#4a62b0"/><rect x="714.15" y="151.28" width="2.2" height="7.95" fill="#4a62b0"/><rect x="717.20" y="151.28" width="2.2" height="7.95" fill="#4a62b0"/><rect x="720.25" y="151.28" width="2.2" height="7.95" fill="#4a62b0"/><rect x="723.30" y="151.28" width="2.2" height="7.95" fill="#4a62b0"/><rect x="726.35" y="151.28" width="2.2" height="7.95" fill="#4a62b0"/><rect x="729.40" y="151.28" width="2.2" height="7.95" fill="#4a62b0"/><rect x="732.45" y="151.28" width="2.2" height="7.95" fill="#4a62b0"/><rect x="735.50" y="151.28" width="2.2" height="7.95" fill="#4a62b0"/><rect x="738.55" y="151.28" width="2.2" height="7.95" fill="#594da4"/><rect x="741.60" y="151.28" width="2.2" height="7.95" fill="#594da4"/><rect x="744.65" y="151.28" width="2.2" height="7.95" fill="#594da4"/><rect x="747.70" y="151.28" width="2.2" height="7.95" fill="#594da4"/><rect x="750.75" y="151.28" width="2.2" height="7.95" fill="#594da4"/><rect x="753.80" y="151.28" width="2.2" height="7.95" fill="#594da4"/><rect x="756.85" y="151.28" width="2.2" height="7.95" fill="#594da4"/><rect x="759.90" y="151.28" width="2.2" height="7.95" fill="#594da4"/><rect x="762.95" y="151.28" width="2.2" height="7.95" fill="#594da4"/><rect x="766.00" y="151.28" width="2.2" height="7.95" fill="#594da4"/><rect x="769.05" y="151.28" width="2.2" height="7.95" fill="#594da4"/><rect x="772.10" y="151.28" width="2.2" height="7.95" fill="#594da4"/><rect x="775.15" y="151.28" width="2.2" height="7.95" fill="#594da4"/><rect x="778.20" y="151.28" width="2.2" height="7.95" fill="#594da4"/><rect x="52.30" y="160.16" width="2.2" height="7.95" fill="#3d79b5"/><rect x="55.35" y="160.16" width="2.2" height="7.95" fill="#3d79b5"/><rect x="58.40" y="160.16" width="2.2" height="7.95" fill="#3d79b5"/><rect x="61.45" y="160.16" width="2.2" height="7.95" fill="#3d79b5"/><rect x="64.50" y="160.16" width="2.2" height="7.95" fill="#3d79b5"/><rect x="67.55" y="160.16" width="2.2" height="7.95" fill="#3d79b5"/><rect x="70.60" y="160.16" width="2.2" height="7.95" fill="#3d79b5"/><rect x="73.65" y="160.16" width="2.2" height="7.95" fill="#3d79b5"/><rect x="76.70" y="160.16" width="2.2" height="7.95" fill="#3d79b5"/><rect x="79.75" y="160.16" width="2.2" height="7.95" fill="#3d79b5"/><rect x="82.80" y="160.16" width="2.2" height="7.95" fill="#3d79b5"/><rect x="85.85" y="160.16" width="2.2" height="7.95" fill="#3d79b5"/><rect x="88.90" y="160.16" width="2.2" height="7.95" fill="#3d79b5"/><rect x="91.95" y="160.16" width="2.2" height="7.95" fill="#594da4"/><rect x="95.00" y="160.16" width="2.2" height="7.95" fill="#594da4"/><rect x="98.05" y="160.16" width="2.2" height="7.95" fill="#594da4"/><rect x="101.10" y="160.16" width="2.2" height="7.95" fill="#594da4"/><rect x="104.15" y="160.16" width="2.2" height="7.95" fill="#3d79b5"/><rect x="107.20" y="160.16" width="2.2" height="7.95" fill="#3d79b5"/><rect x="110.25" y="160.16" width="2.2" height="7.95" fill="#3d79b5"/><rect x="113.30" y="160.16" width="2.2" height="7.95" fill="#3d79b5"/><rect x="116.35" y="160.16" width="2.2" height="7.95" fill="#3d79b5"/><rect x="119.40" y="160.16" width="2.2" height="7.95" fill="#3d79b5"/><rect x="122.45" y="160.16" width="2.2" height="7.95" fill="#3d79b5"/><rect x="125.50" y="160.16" width="2.2" height="7.95" fill="#3d79b5"/><rect x="128.55" y="160.16" width="2.2" height="7.95" fill="#47a4a2"/><rect x="131.60" y="160.16" width="2.2" height="7.95" fill="#47a4a2"/><rect x="134.65" y="160.16" width="2.2" height="7.95" fill="#47a4a2"/><rect x="137.70" y="160.16" width="2.2" height="7.95" fill="#47a4a2"/><rect x="140.75" y="160.16" width="2.2" height="7.95" fill="#47a4a2"/><rect x="143.80" y="160.16" width="2.2" height="7.95" fill="#47a4a2"/><rect x="146.85" y="160.16" width="2.2" height="7.95" fill="#47a4a2"/><rect x="149.90" y="160.16" width="2.2" height="7.95" fill="#47a4a2"/><rect x="152.95" y="160.16" width="2.2" height="7.95" fill="#3d79b5"/><rect x="156.00" y="160.16" width="2.2" height="7.95" fill="#3d79b5"/><rect x="159.05" y="160.16" width="2.2" height="7.95" fill="#3d79b5"/><rect x="162.10" y="160.16" width="2.2" height="7.95" fill="#3d79b5"/><rect x="165.15" y="160.16" width="2.2" height="7.95" fill="#47a4a2"/><rect x="168.20" y="160.16" width="2.2" height="7.95" fill="#47a4a2"/><rect x="171.25" y="160.16" width="2.2" height="7.95" fill="#47a4a2"/><rect x="174.30" y="160.16" width="2.2" height="7.95" fill="#47a4a2"/><rect x="177.35" y="160.16" width="2.2" height="7.95" fill="#3d79b5"/><rect x="180.40" y="160.16" width="2.2" height="7.95" fill="#3d79b5"/><rect x="183.45" y="160.16" width="2.2" height="7.95" fill="#3d79b5"/><rect x="186.50" y="160.16" width="2.2" height="7.95" fill="#3d79b5"/><rect x="189.55" y="160.16" width="2.2" height="7.95" fill="#3d79b5"/><rect x="192.60" y="160.16" width="2.2" height="7.95" fill="#3d79b5"/><rect x="195.65" y="160.16" width="2.2" height="7.95" fill="#3d79b5"/><rect x="198.70" y="160.16" width="2.2" height="7.95" fill="#3d79b5"/><rect x="201.75" y="160.16" width="2.2" height="7.95" fill="#47a4a2"/><rect x="204.80" y="160.16" width="2.2" height="7.95" fill="#47a4a2"/><rect x="207.85" y="160.16" width="2.2" height="7.95" fill="#47a4a2"/><rect x="210.90" y="160.16" width="2.2" height="7.95" fill="#47a4a2"/><rect x="213.95" y="160.16" width="2.2" height="7.95" fill="#3d79b5"/><rect x="217.00" y="160.16" width="2.2" height="7.95" fill="#3d79b5"/><rect x="220.05" y="160.16" width="2.2" height="7.95" fill="#3d79b5"/><rect x="223.10" y="160.16" width="2.2" height="7.95" fill="#3d79b5"/><rect x="226.15" y="160.16" width="2.2" height="7.95" fill="#3d79b5"/><rect x="229.20" y="160.16" width="2.2" height="7.95" fill="#3d79b5"/><rect x="232.25" y="160.16" width="2.2" height="7.95" fill="#3d79b5"/><rect x="235.30" y="160.16" width="2.2" height="7.95" fill="#3d79b5"/><rect x="238.35" y="160.16" width="2.2" height="7.95" fill="#3d79b5"/><rect x="241.40" y="160.16" width="2.2" height="7.95" fill="#3d79b5"/><rect x="244.45" y="160.16" width="2.2" height="7.95" fill="#3d79b5"/><rect x="247.50" y="160.16" width="2.2" height="7.95" fill="#3d79b5"/><rect x="250.55" y="160.16" width="2.2" height="7.95" fill="#3d79b5"/><rect x="253.60" y="160.16" width="2.2" height="7.95" fill="#3d79b5"/><rect x="256.65" y="160.16" width="2.2" height="7.95" fill="#3d79b5"/><rect x="259.70" y="160.16" width="2.2" height="7.95" fill="#3d79b5"/><rect x="262.75" y="160.16" width="2.2" height="7.95" fill="#3d79b5"/><rect x="265.80" y="160.16" width="2.2" height="7.95" fill="#3d79b5"/><rect x="268.85" y="160.16" width="2.2" height="7.95" fill="#3d79b5"/><rect x="271.90" y="160.16" width="2.2" height="7.95" fill="#3d79b5"/><rect x="274.95" y="160.16" width="2.2" height="7.95" fill="#47a4a2"/><rect x="278.00" y="160.16" width="2.2" height="7.95" fill="#47a4a2"/><rect x="281.05" y="160.16" width="2.2" height="7.95" fill="#47a4a2"/><rect x="284.10" y="160.16" width="2.2" height="7.95" fill="#47a4a2"/><rect x="287.15" y="160.16" width="2.2" height="7.95" fill="#47a4a2"/><rect x="290.20" y="160.16" width="2.2" height="7.95" fill="#47a4a2"/><rect x="293.25" y="160.16" width="2.2" height="7.95" fill="#47a4a2"/><rect x="296.30" y="160.16" width="2.2" height="7.95" fill="#47a4a2"/><rect x="299.35" y="160.16" width="2.2" height="7.95" fill="#47a4a2"/><rect x="302.40" y="160.16" width="2.2" height="7.95" fill="#47a4a2"/><rect x="305.45" y="160.16" width="2.2" height="7.95" fill="#47a4a2"/><rect x="308.50" y="160.16" width="2.2" height="7.95" fill="#47a4a2"/><rect x="311.55" y="160.16" width="2.2" height="7.95" fill="#47a4a2"/><rect x="314.60" y="160.16" width="2.2" height="7.95" fill="#47a4a2"/><rect x="317.65" y="160.16" width="2.2" height="7.95" fill="#47a4a2"/><rect x="320.70" y="160.16" width="2.2" height="7.95" fill="#47a4a2"/><rect x="323.75" y="160.16" width="2.2" height="7.95" fill="#3d79b5"/><rect x="326.80" y="160.16" width="2.2" height="7.95" fill="#3d79b5"/><rect x="329.85" y="160.16" width="2.2" height="7.95" fill="#3d79b5"/><rect x="332.90" y="160.16" width="2.2" height="7.95" fill="#3d79b5"/><rect x="335.95" y="160.16" width="2.2" height="7.95" fill="#3d79b5"/><rect x="339.00" y="160.16" width="2.2" height="7.95" fill="#3d79b5"/><rect x="342.05" y="160.16" width="2.2" height="7.95" fill="#3d79b5"/><rect x="345.10" y="160.16" width="2.2" height="7.95" fill="#3d79b5"/><rect x="348.15" y="160.16" width="2.2" height="7.95" fill="#3d79b5"/><rect x="351.20" y="160.16" width="2.2" height="7.95" fill="#3d79b5"/><rect x="354.25" y="160.16" width="2.2" height="7.95" fill="#3d79b5"/><rect x="357.30" y="160.16" width="2.2" height="7.95" fill="#3d79b5"/><rect x="360.35" y="160.16" width="2.2" height="7.95" fill="#594da4"/><rect x="363.40" y="160.16" width="2.2" height="7.95" fill="#594da4"/><rect x="366.45" y="160.16" width="2.2" height="7.95" fill="#594da4"/><rect x="369.50" y="160.16" width="2.2" height="7.95" fill="#594da4"/><rect x="372.55" y="160.16" width="2.2" height="7.95" fill="#3d79b5"/><rect x="375.60" y="160.16" width="2.2" height="7.95" fill="#3d79b5"/><rect x="378.65" y="160.16" width="2.2" height="7.95" fill="#3d79b5"/><rect x="381.70" y="160.16" width="2.2" height="7.95" fill="#3d79b5"/><rect x="384.75" y="160.16" width="2.2" height="7.95" fill="#47a4a2"/><rect x="387.80" y="160.16" width="2.2" height="7.95" fill="#47a4a2"/><rect x="390.85" y="160.16" width="2.2" height="7.95" fill="#47a4a2"/><rect x="393.90" y="160.16" width="2.2" height="7.95" fill="#47a4a2"/><rect x="396.95" y="160.16" width="2.2" height="7.95" fill="#47a4a2"/><rect x="400.00" y="160.16" width="2.2" height="7.95" fill="#47a4a2"/><rect x="403.05" y="160.16" width="2.2" height="7.95" fill="#47a4a2"/><rect x="406.10" y="160.16" width="2.2" height="7.95" fill="#47a4a2"/><rect x="409.15" y="160.16" width="2.2" height="7.95" fill="#47a4a2"/><rect x="412.20" y="160.16" width="2.2" height="7.95" fill="#47a4a2"/><rect x="415.25" y="160.16" width="2.2" height="7.95" fill="#47a4a2"/><rect x="418.30" y="160.16" width="2.2" height="7.95" fill="#47a4a2"/><rect x="421.35" y="160.16" width="2.2" height="7.95" fill="#3d79b5"/><rect x="424.40" y="160.16" width="2.2" height="7.95" fill="#3d79b5"/><rect x="427.45" y="160.16" width="2.2" height="7.95" fill="#3d79b5"/><rect x="430.50" y="160.16" width="2.2" height="7.95" fill="#3d79b5"/><rect x="433.55" y="160.16" width="2.2" height="7.95" fill="#3d79b5"/><rect x="436.60" y="160.16" width="2.2" height="7.95" fill="#3d79b5"/><rect x="439.65" y="160.16" width="2.2" height="7.95" fill="#3d79b5"/><rect x="442.70" y="160.16" width="2.2" height="7.95" fill="#3d79b5"/><rect x="445.75" y="160.16" width="2.2" height="7.95" fill="#3d79b5"/><rect x="448.80" y="160.16" width="2.2" height="7.95" fill="#3d79b5"/><rect x="451.85" y="160.16" width="2.2" height="7.95" fill="#3d79b5"/><rect x="454.90" y="160.16" width="2.2" height="7.95" fill="#3d79b5"/><rect x="457.95" y="160.16" width="2.2" height="7.95" fill="#47a4a2"/><rect x="461.00" y="160.16" width="2.2" height="7.95" fill="#47a4a2"/><rect x="464.05" y="160.16" width="2.2" height="7.95" fill="#47a4a2"/><rect x="467.10" y="160.16" width="2.2" height="7.95" fill="#47a4a2"/><rect x="470.15" y="160.16" width="2.2" height="7.95" fill="#47a4a2"/><rect x="473.20" y="160.16" width="2.2" height="7.95" fill="#47a4a2"/><rect x="476.25" y="160.16" width="2.2" height="7.95" fill="#47a4a2"/><rect x="479.30" y="160.16" width="2.2" height="7.95" fill="#47a4a2"/><rect x="482.35" y="160.16" width="2.2" height="7.95" fill="#3d79b5"/><rect x="485.40" y="160.16" width="2.2" height="7.95" fill="#3d79b5"/><rect x="488.45" y="160.16" width="2.2" height="7.95" fill="#3d79b5"/><rect x="491.50" y="160.16" width="2.2" height="7.95" fill="#3d79b5"/><rect x="494.55" y="160.16" width="2.2" height="7.95" fill="#3d79b5"/><rect x="497.60" y="160.16" width="2.2" height="7.95" fill="#3d79b5"/><rect x="500.65" y="160.16" width="2.2" height="7.95" fill="#3d79b5"/><rect x="503.70" y="160.16" width="2.2" height="7.95" fill="#3d79b5"/><rect x="506.75" y="160.16" width="2.2" height="7.95" fill="#3d79b5"/><rect x="509.80" y="160.16" width="2.2" height="7.95" fill="#3d79b5"/><rect x="512.85" y="160.16" width="2.2" height="7.95" fill="#3d79b5"/><rect x="515.90" y="160.16" width="2.2" height="7.95" fill="#3d79b5"/><rect x="518.95" y="160.16" width="2.2" height="7.95" fill="#47a4a2"/><rect x="522.00" y="160.16" width="2.2" height="7.95" fill="#47a4a2"/><rect x="525.05" y="160.16" width="2.2" height="7.95" fill="#47a4a2"/><rect x="528.10" y="160.16" width="2.2" height="7.95" fill="#47a4a2"/><rect x="531.15" y="160.16" width="2.2" height="7.95" fill="#47a4a2"/><rect x="534.20" y="160.16" width="2.2" height="7.95" fill="#47a4a2"/><rect x="537.25" y="160.16" width="2.2" height="7.95" fill="#47a4a2"/><rect x="540.30" y="160.16" width="2.2" height="7.95" fill="#47a4a2"/><rect x="543.35" y="160.16" width="2.2" height="7.95" fill="#3d79b5"/><rect x="546.40" y="160.16" width="2.2" height="7.95" fill="#3d79b5"/><rect x="549.45" y="160.16" width="2.2" height="7.95" fill="#3d79b5"/><rect x="552.50" y="160.16" width="2.2" height="7.95" fill="#3d79b5"/><rect x="555.55" y="160.16" width="2.2" height="7.95" fill="#3d79b5"/><rect x="558.60" y="160.16" width="2.2" height="7.95" fill="#3d79b5"/><rect x="561.65" y="160.16" width="2.2" height="7.95" fill="#3d79b5"/><rect x="564.70" y="160.16" width="2.2" height="7.95" fill="#3d79b5"/><rect x="567.75" y="160.16" width="2.2" height="7.95" fill="#594da4"/><rect x="570.80" y="160.16" width="2.2" height="7.95" fill="#594da4"/><rect x="573.85" y="160.16" width="2.2" height="7.95" fill="#594da4"/><rect x="576.90" y="160.16" width="2.2" height="7.95" fill="#594da4"/><rect x="579.95" y="160.16" width="2.2" height="7.95" fill="#594da4"/><rect x="583.00" y="160.16" width="2.2" height="7.95" fill="#594da4"/><rect x="586.05" y="160.16" width="2.2" height="7.95" fill="#594da4"/><rect x="589.10" y="160.16" width="2.2" height="7.95" fill="#594da4"/><rect x="592.15" y="160.16" width="2.2" height="7.95" fill="#594da4"/><rect x="595.20" y="160.16" width="2.2" height="7.95" fill="#594da4"/><rect x="598.25" y="160.16" width="2.2" height="7.95" fill="#594da4"/><rect x="601.30" y="160.16" width="2.2" height="7.95" fill="#594da4"/><rect x="604.35" y="160.16" width="2.2" height="7.95" fill="#3d79b5"/><rect x="607.40" y="160.16" width="2.2" height="7.95" fill="#3d79b5"/><rect x="610.45" y="160.16" width="2.2" height="7.95" fill="#3d79b5"/><rect x="613.50" y="160.16" width="2.2" height="7.95" fill="#3d79b5"/><rect x="616.55" y="160.16" width="2.2" height="7.95" fill="#3d79b5"/><rect x="619.60" y="160.16" width="2.2" height="7.95" fill="#3d79b5"/><rect x="622.65" y="160.16" width="2.2" height="7.95" fill="#3d79b5"/><rect x="625.70" y="160.16" width="2.2" height="7.95" fill="#3d79b5"/><rect x="628.75" y="160.16" width="2.2" height="7.95" fill="#3d79b5"/><rect x="631.80" y="160.16" width="2.2" height="7.95" fill="#3d79b5"/><rect x="634.85" y="160.16" width="2.2" height="7.95" fill="#3d79b5"/><rect x="637.90" y="160.16" width="2.2" height="7.95" fill="#3d79b5"/><rect x="640.95" y="160.16" width="2.2" height="7.95" fill="#3d79b5"/><rect x="644.00" y="160.16" width="2.2" height="7.95" fill="#3d79b5"/><rect x="647.05" y="160.16" width="2.2" height="7.95" fill="#3d79b5"/><rect x="650.10" y="160.16" width="2.2" height="7.95" fill="#3d79b5"/><rect x="665.35" y="160.16" width="2.2" height="7.95" fill="#4a62b0"/><rect x="668.40" y="160.16" width="2.2" height="7.95" fill="#4a62b0"/><rect x="671.45" y="160.16" width="2.2" height="7.95" fill="#4a62b0"/><rect x="674.50" y="160.16" width="2.2" height="7.95" fill="#4a62b0"/><rect x="677.55" y="160.16" width="2.2" height="7.95" fill="#4a62b0"/><rect x="680.60" y="160.16" width="2.2" height="7.95" fill="#4a62b0"/><rect x="683.65" y="160.16" width="2.2" height="7.95" fill="#4a62b0"/><rect x="686.70" y="160.16" width="2.2" height="7.95" fill="#4a62b0"/><rect x="689.75" y="160.16" width="2.2" height="7.95" fill="#3d79b5"/><rect x="692.80" y="160.16" width="2.2" height="7.95" fill="#3d79b5"/><rect x="695.85" y="160.16" width="2.2" height="7.95" fill="#3d79b5"/><rect x="698.90" y="160.16" width="2.2" height="7.95" fill="#3d79b5"/><rect x="701.95" y="160.16" width="2.2" height="7.95" fill="#47a4a2"/><rect x="705.00" y="160.16" width="2.2" height="7.95" fill="#47a4a2"/><rect x="708.05" y="160.16" width="2.2" height="7.95" fill="#47a4a2"/><rect x="711.10" y="160.16" width="2.2" height="7.95" fill="#47a4a2"/><rect x="714.15" y="160.16" width="2.2" height="7.95" fill="#47a4a2"/><rect x="717.20" y="160.16" width="2.2" height="7.95" fill="#47a4a2"/><rect x="720.25" y="160.16" width="2.2" height="7.95" fill="#47a4a2"/><rect x="723.30" y="160.16" width="2.2" height="7.95" fill="#47a4a2"/><rect x="726.35" y="160.16" width="2.2" height="7.95" fill="#47a4a2"/><rect x="729.40" y="160.16" width="2.2" height="7.95" fill="#47a4a2"/><rect x="732.45" y="160.16" width="2.2" height="7.95" fill="#47a4a2"/><rect x="735.50" y="160.16" width="2.2" height="7.95" fill="#47a4a2"/><rect x="738.55" y="160.16" width="2.2" height="7.95" fill="#3d79b5"/><rect x="741.60" y="160.16" width="2.2" height="7.95" fill="#3d79b5"/><rect x="744.65" y="160.16" width="2.2" height="7.95" fill="#3d79b5"/><rect x="747.70" y="160.16" width="2.2" height="7.95" fill="#3d79b5"/><rect x="750.75" y="160.16" width="2.2" height="7.95" fill="#594da4"/><rect x="753.80" y="160.16" width="2.2" height="7.95" fill="#594da4"/><rect x="756.85" y="160.16" width="2.2" height="7.95" fill="#594da4"/><rect x="759.90" y="160.16" width="2.2" height="7.95" fill="#594da4"/><rect x="762.95" y="160.16" width="2.2" height="7.95" fill="#3d79b5"/><rect x="766.00" y="160.16" width="2.2" height="7.95" fill="#3d79b5"/><rect x="769.05" y="160.16" width="2.2" height="7.95" fill="#3d79b5"/><rect x="772.10" y="160.16" width="2.2" height="7.95" fill="#3d79b5"/><rect x="775.15" y="160.16" width="2.2" height="7.95" fill="#3d79b5"/><rect x="778.20" y="160.16" width="2.2" height="7.95" fill="#3d79b5"/><rect x="52.30" y="169.04" width="2.2" height="7.95" fill="#ebe69e"/><rect x="55.35" y="169.04" width="2.2" height="7.95" fill="#ebe69e"/><rect x="58.40" y="169.04" width="2.2" height="7.95" fill="#ebe69e"/><rect x="61.45" y="169.04" width="2.2" height="7.95" fill="#ebe69e"/><rect x="64.50" y="169.04" width="2.2" height="7.95" fill="#ebe69e"/><rect x="67.55" y="169.04" width="2.2" height="7.95" fill="#ebe69e"/><rect x="70.60" y="169.04" width="2.2" height="7.95" fill="#ebe69e"/><rect x="73.65" y="169.04" width="2.2" height="7.95" fill="#ebe69e"/><rect x="76.70" y="169.04" width="2.2" height="7.95" fill="#ebe69e"/><rect x="79.75" y="169.04" width="2.2" height="7.95" fill="#ebe69e"/><rect x="82.80" y="169.04" width="2.2" height="7.95" fill="#ebe69e"/><rect x="85.85" y="169.04" width="2.2" height="7.95" fill="#ebe69e"/><rect x="88.90" y="169.04" width="2.2" height="7.95" fill="#ebe69e"/><rect x="91.95" y="169.04" width="2.2" height="7.95" fill="#47a4a2"/><rect x="95.00" y="169.04" width="2.2" height="7.95" fill="#47a4a2"/><rect x="98.05" y="169.04" width="2.2" height="7.95" fill="#47a4a2"/><rect x="101.10" y="169.04" width="2.2" height="7.95" fill="#47a4a2"/><rect x="104.15" y="169.04" width="2.2" height="7.95" fill="#ebe69e"/><rect x="107.20" y="169.04" width="2.2" height="7.95" fill="#ebe69e"/><rect x="110.25" y="169.04" width="2.2" height="7.95" fill="#ebe69e"/><rect x="113.30" y="169.04" width="2.2" height="7.95" fill="#ebe69e"/><rect x="116.35" y="169.04" width="2.2" height="7.95" fill="#ebe69e"/><rect x="119.40" y="169.04" width="2.2" height="7.95" fill="#ebe69e"/><rect x="122.45" y="169.04" width="2.2" height="7.95" fill="#ebe69e"/><rect x="125.50" y="169.04" width="2.2" height="7.95" fill="#ebe69e"/><rect x="128.55" y="169.04" width="2.2" height="7.95" fill="#e86b40"/><rect x="131.60" y="169.04" width="2.2" height="7.95" fill="#e86b40"/><rect x="134.65" y="169.04" width="2.2" height="7.95" fill="#e86b40"/><rect x="137.70" y="169.04" width="2.2" height="7.95" fill="#e86b40"/><rect x="140.75" y="169.04" width="2.2" height="7.95" fill="#aa1542"/><rect x="143.80" y="169.04" width="2.2" height="7.95" fill="#aa1542"/><rect x="146.85" y="169.04" width="2.2" height="7.95" fill="#aa1542"/><rect x="149.90" y="169.04" width="2.2" height="7.95" fill="#aa1542"/><rect x="152.95" y="169.04" width="2.2" height="7.95" fill="#f3ac63"/><rect x="156.00" y="169.04" width="2.2" height="7.95" fill="#f3ac63"/><rect x="159.05" y="169.04" width="2.2" height="7.95" fill="#f3ac63"/><rect x="162.10" y="169.04" width="2.2" height="7.95" fill="#f3ac63"/><rect x="165.15" y="169.04" width="2.2" height="7.95" fill="#aa1542"/><rect x="168.20" y="169.04" width="2.2" height="7.95" fill="#aa1542"/><rect x="171.25" y="169.04" width="2.2" height="7.95" fill="#aa1542"/><rect x="174.30" y="169.04" width="2.2" height="7.95" fill="#aa1542"/><rect x="177.35" y="169.04" width="2.2" height="7.95" fill="#f3ac63"/><rect x="180.40" y="169.04" width="2.2" height="7.95" fill="#f3ac63"/><rect x="183.45" y="169.04" width="2.2" height="7.95" fill="#f3ac63"/><rect x="186.50" y="169.04" width="2.2" height="7.95" fill="#f3ac63"/><rect x="189.55" y="169.04" width="2.2" height="7.95" fill="#f3ac63"/><rect x="192.60" y="169.04" width="2.2" height="7.95" fill="#f3ac63"/><rect x="195.65" y="169.04" width="2.2" height="7.95" fill="#f3ac63"/><rect x="198.70" y="169.04" width="2.2" height="7.95" fill="#f3ac63"/><rect x="201.75" y="169.04" width="2.2" height="7.95" fill="#aa1542"/><rect x="204.80" y="169.04" width="2.2" height="7.95" fill="#aa1542"/><rect x="207.85" y="169.04" width="2.2" height="7.95" fill="#aa1542"/><rect x="210.90" y="169.04" width="2.2" height="7.95" fill="#aa1542"/><rect x="213.95" y="169.04" width="2.2" height="7.95" fill="#ebe69e"/><rect x="217.00" y="169.04" width="2.2" height="7.95" fill="#ebe69e"/><rect x="220.05" y="169.04" width="2.2" height="7.95" fill="#ebe69e"/><rect x="223.10" y="169.04" width="2.2" height="7.95" fill="#ebe69e"/><rect x="226.15" y="169.04" width="2.2" height="7.95" fill="#ebe69e"/><rect x="229.20" y="169.04" width="2.2" height="7.95" fill="#ebe69e"/><rect x="232.25" y="169.04" width="2.2" height="7.95" fill="#ebe69e"/><rect x="235.30" y="169.04" width="2.2" height="7.95" fill="#ebe69e"/><rect x="238.35" y="169.04" width="2.2" height="7.95" fill="#ebe69e"/><rect x="241.40" y="169.04" width="2.2" height="7.95" fill="#ebe69e"/><rect x="244.45" y="169.04" width="2.2" height="7.95" fill="#ebe69e"/><rect x="247.50" y="169.04" width="2.2" height="7.95" fill="#ebe69e"/><rect x="250.55" y="169.04" width="2.2" height="7.95" fill="#c2e39b"/><rect x="253.60" y="169.04" width="2.2" height="7.95" fill="#c2e39b"/><rect x="256.65" y="169.04" width="2.2" height="7.95" fill="#c2e39b"/><rect x="259.70" y="169.04" width="2.2" height="7.95" fill="#c2e39b"/><rect x="262.75" y="169.04" width="2.2" height="7.95" fill="#ebe69e"/><rect x="265.80" y="169.04" width="2.2" height="7.95" fill="#ebe69e"/><rect x="268.85" y="169.04" width="2.2" height="7.95" fill="#ebe69e"/><rect x="271.90" y="169.04" width="2.2" height="7.95" fill="#ebe69e"/><rect x="274.95" y="169.04" width="2.2" height="7.95" fill="#e86b40"/><rect x="278.00" y="169.04" width="2.2" height="7.95" fill="#e86b40"/><rect x="281.05" y="169.04" width="2.2" height="7.95" fill="#e86b40"/><rect x="284.10" y="169.04" width="2.2" height="7.95" fill="#e86b40"/><rect x="287.15" y="169.04" width="2.2" height="7.95" fill="#e86b40"/><rect x="290.20" y="169.04" width="2.2" height="7.95" fill="#e86b40"/><rect x="293.25" y="169.04" width="2.2" height="7.95" fill="#e86b40"/><rect x="296.30" y="169.04" width="2.2" height="7.95" fill="#e86b40"/><rect x="299.35" y="169.04" width="2.2" height="7.95" fill="#f3ac63"/><rect x="302.40" y="169.04" width="2.2" height="7.95" fill="#f3ac63"/><rect x="305.45" y="169.04" width="2.2" height="7.95" fill="#f3ac63"/><rect x="308.50" y="169.04" width="2.2" height="7.95" fill="#f3ac63"/><rect x="311.55" y="169.04" width="2.2" height="7.95" fill="#aa1542"/><rect x="314.60" y="169.04" width="2.2" height="7.95" fill="#aa1542"/><rect x="317.65" y="169.04" width="2.2" height="7.95" fill="#aa1542"/><rect x="320.70" y="169.04" width="2.2" height="7.95" fill="#aa1542"/><rect x="323.75" y="169.04" width="2.2" height="7.95" fill="#f3ac63"/><rect x="326.80" y="169.04" width="2.2" height="7.95" fill="#f3ac63"/><rect x="329.85" y="169.04" width="2.2" height="7.95" fill="#f3ac63"/><rect x="332.90" y="169.04" width="2.2" height="7.95" fill="#f3ac63"/><rect x="335.95" y="169.04" width="2.2" height="7.95" fill="#ebe69e"/><rect x="339.00" y="169.04" width="2.2" height="7.95" fill="#ebe69e"/><rect x="342.05" y="169.04" width="2.2" height="7.95" fill="#ebe69e"/><rect x="345.10" y="169.04" width="2.2" height="7.95" fill="#ebe69e"/><rect x="348.15" y="169.04" width="2.2" height="7.95" fill="#ebe69e"/><rect x="351.20" y="169.04" width="2.2" height="7.95" fill="#ebe69e"/><rect x="354.25" y="169.04" width="2.2" height="7.95" fill="#ebe69e"/><rect x="357.30" y="169.04" width="2.2" height="7.95" fill="#ebe69e"/><rect x="360.35" y="169.04" width="2.2" height="7.95" fill="#47a4a2"/><rect x="363.40" y="169.04" width="2.2" height="7.95" fill="#47a4a2"/><rect x="366.45" y="169.04" width="2.2" height="7.95" fill="#47a4a2"/><rect x="369.50" y="169.04" width="2.2" height="7.95" fill="#47a4a2"/><rect x="372.55" y="169.04" width="2.2" height="7.95" fill="#ebe69e"/><rect x="375.60" y="169.04" width="2.2" height="7.95" fill="#ebe69e"/><rect x="378.65" y="169.04" width="2.2" height="7.95" fill="#ebe69e"/><rect x="381.70" y="169.04" width="2.2" height="7.95" fill="#ebe69e"/><rect x="384.75" y="169.04" width="2.2" height="7.95" fill="#e86b40"/><rect x="387.80" y="169.04" width="2.2" height="7.95" fill="#e86b40"/><rect x="390.85" y="169.04" width="2.2" height="7.95" fill="#e86b40"/><rect x="393.90" y="169.04" width="2.2" height="7.95" fill="#e86b40"/><rect x="396.95" y="169.04" width="2.2" height="7.95" fill="#aa1542"/><rect x="400.00" y="169.04" width="2.2" height="7.95" fill="#aa1542"/><rect x="403.05" y="169.04" width="2.2" height="7.95" fill="#aa1542"/><rect x="406.10" y="169.04" width="2.2" height="7.95" fill="#aa1542"/><rect x="409.15" y="169.04" width="2.2" height="7.95" fill="#df5640"/><rect x="412.20" y="169.04" width="2.2" height="7.95" fill="#df5640"/><rect x="415.25" y="169.04" width="2.2" height="7.95" fill="#df5640"/><rect x="418.30" y="169.04" width="2.2" height="7.95" fill="#df5640"/><rect x="421.35" y="169.04" width="2.2" height="7.95" fill="#ebe69e"/><rect x="424.40" y="169.04" width="2.2" height="7.95" fill="#ebe69e"/><rect x="427.45" y="169.04" width="2.2" height="7.95" fill="#ebe69e"/><rect x="430.50" y="169.04" width="2.2" height="7.95" fill="#ebe69e"/><rect x="433.55" y="169.04" width="2.2" height="7.95" fill="#ebe69e"/><rect x="436.60" y="169.04" width="2.2" height="7.95" fill="#ebe69e"/><rect x="439.65" y="169.04" width="2.2" height="7.95" fill="#ebe69e"/><rect x="442.70" y="169.04" width="2.2" height="7.95" fill="#ebe69e"/><rect x="445.75" y="169.04" width="2.2" height="7.95" fill="#ebe69e"/><rect x="448.80" y="169.04" width="2.2" height="7.95" fill="#ebe69e"/><rect x="451.85" y="169.04" width="2.2" height="7.95" fill="#ebe69e"/><rect x="454.90" y="169.04" width="2.2" height="7.95" fill="#ebe69e"/><rect x="457.95" y="169.04" width="2.2" height="7.95" fill="#e86b40"/><rect x="461.00" y="169.04" width="2.2" height="7.95" fill="#e86b40"/><rect x="464.05" y="169.04" width="2.2" height="7.95" fill="#e86b40"/><rect x="467.10" y="169.04" width="2.2" height="7.95" fill="#e86b40"/><rect x="470.15" y="169.04" width="2.2" height="7.95" fill="#aa1542"/><rect x="473.20" y="169.04" width="2.2" height="7.95" fill="#aa1542"/><rect x="476.25" y="169.04" width="2.2" height="7.95" fill="#aa1542"/><rect x="479.30" y="169.04" width="2.2" height="7.95" fill="#aa1542"/><rect x="482.35" y="169.04" width="2.2" height="7.95" fill="#f3ac63"/><rect x="485.40" y="169.04" width="2.2" height="7.95" fill="#f3ac63"/><rect x="488.45" y="169.04" width="2.2" height="7.95" fill="#f3ac63"/><rect x="491.50" y="169.04" width="2.2" height="7.95" fill="#f3ac63"/><rect x="494.55" y="169.04" width="2.2" height="7.95" fill="#e86b40"/><rect x="497.60" y="169.04" width="2.2" height="7.95" fill="#e86b40"/><rect x="500.65" y="169.04" width="2.2" height="7.95" fill="#e86b40"/><rect x="503.70" y="169.04" width="2.2" height="7.95" fill="#e86b40"/><rect x="506.75" y="169.04" width="2.2" height="7.95" fill="#f3ac63"/><rect x="509.80" y="169.04" width="2.2" height="7.95" fill="#f3ac63"/><rect x="512.85" y="169.04" width="2.2" height="7.95" fill="#f3ac63"/><rect x="515.90" y="169.04" width="2.2" height="7.95" fill="#f3ac63"/><rect x="518.95" y="169.04" width="2.2" height="7.95" fill="#e86b40"/><rect x="522.00" y="169.04" width="2.2" height="7.95" fill="#e86b40"/><rect x="525.05" y="169.04" width="2.2" height="7.95" fill="#e86b40"/><rect x="528.10" y="169.04" width="2.2" height="7.95" fill="#e86b40"/><rect x="531.15" y="169.04" width="2.2" height="7.95" fill="#e86b40"/><rect x="534.20" y="169.04" width="2.2" height="7.95" fill="#e86b40"/><rect x="537.25" y="169.04" width="2.2" height="7.95" fill="#e86b40"/><rect x="540.30" y="169.04" width="2.2" height="7.95" fill="#e86b40"/><rect x="543.35" y="169.04" width="2.2" height="7.95" fill="#ebe69e"/><rect x="546.40" y="169.04" width="2.2" height="7.95" fill="#ebe69e"/><rect x="549.45" y="169.04" width="2.2" height="7.95" fill="#ebe69e"/><rect x="552.50" y="169.04" width="2.2" height="7.95" fill="#ebe69e"/><rect x="555.55" y="169.04" width="2.2" height="7.95" fill="#ebe69e"/><rect x="558.60" y="169.04" width="2.2" height="7.95" fill="#ebe69e"/><rect x="561.65" y="169.04" width="2.2" height="7.95" fill="#ebe69e"/><rect x="564.70" y="169.04" width="2.2" height="7.95" fill="#ebe69e"/><rect x="567.75" y="169.04" width="2.2" height="7.95" fill="#47a4a2"/><rect x="570.80" y="169.04" width="2.2" height="7.95" fill="#47a4a2"/><rect x="573.85" y="169.04" width="2.2" height="7.95" fill="#47a4a2"/><rect x="576.90" y="169.04" width="2.2" height="7.95" fill="#47a4a2"/><rect x="579.95" y="169.04" width="2.2" height="7.95" fill="#47a4a2"/><rect x="583.00" y="169.04" width="2.2" height="7.95" fill="#47a4a2"/><rect x="586.05" y="169.04" width="2.2" height="7.95" fill="#47a4a2"/><rect x="589.10" y="169.04" width="2.2" height="7.95" fill="#47a4a2"/><rect x="592.15" y="169.04" width="2.2" height="7.95" fill="#47a4a2"/><rect x="595.20" y="169.04" width="2.2" height="7.95" fill="#47a4a2"/><rect x="598.25" y="169.04" width="2.2" height="7.95" fill="#47a4a2"/><rect x="601.30" y="169.04" width="2.2" height="7.95" fill="#47a4a2"/><rect x="604.35" y="169.04" width="2.2" height="7.95" fill="#ebe69e"/><rect x="607.40" y="169.04" width="2.2" height="7.95" fill="#ebe69e"/><rect x="610.45" y="169.04" width="2.2" height="7.95" fill="#ebe69e"/><rect x="613.50" y="169.04" width="2.2" height="7.95" fill="#ebe69e"/><rect x="616.55" y="169.04" width="2.2" height="7.95" fill="#ebe69e"/><rect x="619.60" y="169.04" width="2.2" height="7.95" fill="#ebe69e"/><rect x="622.65" y="169.04" width="2.2" height="7.95" fill="#ebe69e"/><rect x="625.70" y="169.04" width="2.2" height="7.95" fill="#ebe69e"/><rect x="628.75" y="169.04" width="2.2" height="7.95" fill="#ebe69e"/><rect x="631.80" y="169.04" width="2.2" height="7.95" fill="#ebe69e"/><rect x="634.85" y="169.04" width="2.2" height="7.95" fill="#ebe69e"/><rect x="637.90" y="169.04" width="2.2" height="7.95" fill="#ebe69e"/><rect x="640.95" y="169.04" width="2.2" height="7.95" fill="#ebe69e"/><rect x="644.00" y="169.04" width="2.2" height="7.95" fill="#ebe69e"/><rect x="647.05" y="169.04" width="2.2" height="7.95" fill="#ebe69e"/><rect x="650.10" y="169.04" width="2.2" height="7.95" fill="#ebe69e"/><rect x="653.15" y="169.04" width="2.2" height="7.95" fill="#594da4"/><rect x="656.20" y="169.04" width="2.2" height="7.95" fill="#594da4"/><rect x="659.25" y="169.04" width="2.2" height="7.95" fill="#594da4"/><rect x="662.30" y="169.04" width="2.2" height="7.95" fill="#594da4"/><rect x="665.35" y="169.04" width="2.2" height="7.95" fill="#3d9ab2"/><rect x="668.40" y="169.04" width="2.2" height="7.95" fill="#3d9ab2"/><rect x="671.45" y="169.04" width="2.2" height="7.95" fill="#3d9ab2"/><rect x="674.50" y="169.04" width="2.2" height="7.95" fill="#3d9ab2"/><rect x="677.55" y="169.04" width="2.2" height="7.95" fill="#8fd0a0"/><rect x="680.60" y="169.04" width="2.2" height="7.95" fill="#8fd0a0"/><rect x="683.65" y="169.04" width="2.2" height="7.95" fill="#8fd0a0"/><rect x="686.70" y="169.04" width="2.2" height="7.95" fill="#8fd0a0"/><rect x="689.75" y="169.04" width="2.2" height="7.95" fill="#ebe69e"/><rect x="692.80" y="169.04" width="2.2" height="7.95" fill="#ebe69e"/><rect x="695.85" y="169.04" width="2.2" height="7.95" fill="#ebe69e"/><rect x="698.90" y="169.04" width="2.2" height="7.95" fill="#ebe69e"/><rect x="701.95" y="169.04" width="2.2" height="7.95" fill="#aa1542"/><rect x="705.00" y="169.04" width="2.2" height="7.95" fill="#aa1542"/><rect x="708.05" y="169.04" width="2.2" height="7.95" fill="#aa1542"/><rect x="711.10" y="169.04" width="2.2" height="7.95" fill="#aa1542"/><rect x="714.15" y="169.04" width="2.2" height="7.95" fill="#df5640"/><rect x="717.20" y="169.04" width="2.2" height="7.95" fill="#df5640"/><rect x="720.25" y="169.04" width="2.2" height="7.95" fill="#df5640"/><rect x="723.30" y="169.04" width="2.2" height="7.95" fill="#df5640"/><rect x="726.35" y="169.04" width="2.2" height="7.95" fill="#f3ac63"/><rect x="729.40" y="169.04" width="2.2" height="7.95" fill="#f3ac63"/><rect x="732.45" y="169.04" width="2.2" height="7.95" fill="#f3ac63"/><rect x="735.50" y="169.04" width="2.2" height="7.95" fill="#f3ac63"/><rect x="738.55" y="169.04" width="2.2" height="7.95" fill="#ebe69e"/><rect x="741.60" y="169.04" width="2.2" height="7.95" fill="#ebe69e"/><rect x="744.65" y="169.04" width="2.2" height="7.95" fill="#ebe69e"/><rect x="747.70" y="169.04" width="2.2" height="7.95" fill="#ebe69e"/><rect x="750.75" y="169.04" width="2.2" height="7.95" fill="#47a4a2"/><rect x="753.80" y="169.04" width="2.2" height="7.95" fill="#47a4a2"/><rect x="756.85" y="169.04" width="2.2" height="7.95" fill="#47a4a2"/><rect x="759.90" y="169.04" width="2.2" height="7.95" fill="#47a4a2"/><rect x="762.95" y="169.04" width="2.2" height="7.95" fill="#ebe69e"/><rect x="766.00" y="169.04" width="2.2" height="7.95" fill="#ebe69e"/><rect x="769.05" y="169.04" width="2.2" height="7.95" fill="#ebe69e"/><rect x="772.10" y="169.04" width="2.2" height="7.95" fill="#ebe69e"/><rect x="775.15" y="169.04" width="2.2" height="7.95" fill="#ebe69e"/><rect x="778.20" y="169.04" width="2.2" height="7.95" fill="#ebe69e"/><rect x="52.30" y="177.92" width="2.2" height="7.95" fill="#47a4a2"/><rect x="55.35" y="177.92" width="2.2" height="7.95" fill="#47a4a2"/><rect x="58.40" y="177.92" width="2.2" height="7.95" fill="#47a4a2"/><rect x="61.45" y="177.92" width="2.2" height="7.95" fill="#47a4a2"/><rect x="64.50" y="177.92" width="2.2" height="7.95" fill="#47a4a2"/><rect x="67.55" y="177.92" width="2.2" height="7.95" fill="#47a4a2"/><rect x="70.60" y="177.92" width="2.2" height="7.95" fill="#47a4a2"/><rect x="73.65" y="177.92" width="2.2" height="7.95" fill="#47a4a2"/><rect x="76.70" y="177.92" width="2.2" height="7.95" fill="#47a4a2"/><rect x="79.75" y="177.92" width="2.2" height="7.95" fill="#47a4a2"/><rect x="82.80" y="177.92" width="2.2" height="7.95" fill="#47a4a2"/><rect x="85.85" y="177.92" width="2.2" height="7.95" fill="#47a4a2"/><rect x="88.90" y="177.92" width="2.2" height="7.95" fill="#47a4a2"/><rect x="91.95" y="177.92" width="2.2" height="7.95" fill="#3d79b5"/><rect x="95.00" y="177.92" width="2.2" height="7.95" fill="#3d79b5"/><rect x="98.05" y="177.92" width="2.2" height="7.95" fill="#3d79b5"/><rect x="101.10" y="177.92" width="2.2" height="7.95" fill="#3d79b5"/><rect x="104.15" y="177.92" width="2.2" height="7.95" fill="#47a4a2"/><rect x="107.20" y="177.92" width="2.2" height="7.95" fill="#47a4a2"/><rect x="110.25" y="177.92" width="2.2" height="7.95" fill="#47a4a2"/><rect x="113.30" y="177.92" width="2.2" height="7.95" fill="#47a4a2"/><rect x="116.35" y="177.92" width="2.2" height="7.95" fill="#47a4a2"/><rect x="119.40" y="177.92" width="2.2" height="7.95" fill="#47a4a2"/><rect x="122.45" y="177.92" width="2.2" height="7.95" fill="#47a4a2"/><rect x="125.50" y="177.92" width="2.2" height="7.95" fill="#47a4a2"/><rect x="128.55" y="177.92" width="2.2" height="7.95" fill="#8fd0a0"/><rect x="131.60" y="177.92" width="2.2" height="7.95" fill="#8fd0a0"/><rect x="134.65" y="177.92" width="2.2" height="7.95" fill="#8fd0a0"/><rect x="137.70" y="177.92" width="2.2" height="7.95" fill="#8fd0a0"/><rect x="140.75" y="177.92" width="2.2" height="7.95" fill="#8fd0a0"/><rect x="143.80" y="177.92" width="2.2" height="7.95" fill="#8fd0a0"/><rect x="146.85" y="177.92" width="2.2" height="7.95" fill="#8fd0a0"/><rect x="149.90" y="177.92" width="2.2" height="7.95" fill="#8fd0a0"/><rect x="152.95" y="177.92" width="2.2" height="7.95" fill="#8fd0a0"/><rect x="156.00" y="177.92" width="2.2" height="7.95" fill="#8fd0a0"/><rect x="159.05" y="177.92" width="2.2" height="7.95" fill="#8fd0a0"/><rect x="162.10" y="177.92" width="2.2" height="7.95" fill="#8fd0a0"/><rect x="165.15" y="177.92" width="2.2" height="7.95" fill="#c2e39b"/><rect x="168.20" y="177.92" width="2.2" height="7.95" fill="#c2e39b"/><rect x="171.25" y="177.92" width="2.2" height="7.95" fill="#c2e39b"/><rect x="174.30" y="177.92" width="2.2" height="7.95" fill="#c2e39b"/><rect x="177.35" y="177.92" width="2.2" height="7.95" fill="#8fd0a0"/><rect x="180.40" y="177.92" width="2.2" height="7.95" fill="#8fd0a0"/><rect x="183.45" y="177.92" width="2.2" height="7.95" fill="#8fd0a0"/><rect x="186.50" y="177.92" width="2.2" height="7.95" fill="#8fd0a0"/><rect x="189.55" y="177.92" width="2.2" height="7.95" fill="#8fd0a0"/><rect x="192.60" y="177.92" width="2.2" height="7.95" fill="#8fd0a0"/><rect x="195.65" y="177.92" width="2.2" height="7.95" fill="#8fd0a0"/><rect x="198.70" y="177.92" width="2.2" height="7.95" fill="#8fd0a0"/><rect x="201.75" y="177.92" width="2.2" height="7.95" fill="#8fd0a0"/><rect x="204.80" y="177.92" width="2.2" height="7.95" fill="#8fd0a0"/><rect x="207.85" y="177.92" width="2.2" height="7.95" fill="#8fd0a0"/><rect x="210.90" y="177.92" width="2.2" height="7.95" fill="#8fd0a0"/><rect x="213.95" y="177.92" width="2.2" height="7.95" fill="#47a4a2"/><rect x="217.00" y="177.92" width="2.2" height="7.95" fill="#47a4a2"/><rect x="220.05" y="177.92" width="2.2" height="7.95" fill="#47a4a2"/><rect x="223.10" y="177.92" width="2.2" height="7.95" fill="#47a4a2"/><rect x="226.15" y="177.92" width="2.2" height="7.95" fill="#47a4a2"/><rect x="229.20" y="177.92" width="2.2" height="7.95" fill="#47a4a2"/><rect x="232.25" y="177.92" width="2.2" height="7.95" fill="#47a4a2"/><rect x="235.30" y="177.92" width="2.2" height="7.95" fill="#47a4a2"/><rect x="238.35" y="177.92" width="2.2" height="7.95" fill="#47a4a2"/><rect x="241.40" y="177.92" width="2.2" height="7.95" fill="#47a4a2"/><rect x="244.45" y="177.92" width="2.2" height="7.95" fill="#47a4a2"/><rect x="247.50" y="177.92" width="2.2" height="7.95" fill="#47a4a2"/><rect x="250.55" y="177.92" width="2.2" height="7.95" fill="#3d79b5"/><rect x="253.60" y="177.92" width="2.2" height="7.95" fill="#3d79b5"/><rect x="256.65" y="177.92" width="2.2" height="7.95" fill="#3d79b5"/><rect x="259.70" y="177.92" width="2.2" height="7.95" fill="#3d79b5"/><rect x="262.75" y="177.92" width="2.2" height="7.95" fill="#47a4a2"/><rect x="265.80" y="177.92" width="2.2" height="7.95" fill="#47a4a2"/><rect x="268.85" y="177.92" width="2.2" height="7.95" fill="#47a4a2"/><rect x="271.90" y="177.92" width="2.2" height="7.95" fill="#47a4a2"/><rect x="274.95" y="177.92" width="2.2" height="7.95" fill="#8fd0a0"/><rect x="278.00" y="177.92" width="2.2" height="7.95" fill="#8fd0a0"/><rect x="281.05" y="177.92" width="2.2" height="7.95" fill="#8fd0a0"/><rect x="284.10" y="177.92" width="2.2" height="7.95" fill="#8fd0a0"/><rect x="287.15" y="177.92" width="2.2" height="7.95" fill="#8fd0a0"/><rect x="290.20" y="177.92" width="2.2" height="7.95" fill="#8fd0a0"/><rect x="293.25" y="177.92" width="2.2" height="7.95" fill="#8fd0a0"/><rect x="296.30" y="177.92" width="2.2" height="7.95" fill="#8fd0a0"/><rect x="299.35" y="177.92" width="2.2" height="7.95" fill="#8fd0a0"/><rect x="302.40" y="177.92" width="2.2" height="7.95" fill="#8fd0a0"/><rect x="305.45" y="177.92" width="2.2" height="7.95" fill="#8fd0a0"/><rect x="308.50" y="177.92" width="2.2" height="7.95" fill="#8fd0a0"/><rect x="311.55" y="177.92" width="2.2" height="7.95" fill="#c2e39b"/><rect x="314.60" y="177.92" width="2.2" height="7.95" fill="#c2e39b"/><rect x="317.65" y="177.92" width="2.2" height="7.95" fill="#c2e39b"/><rect x="320.70" y="177.92" width="2.2" height="7.95" fill="#c2e39b"/><rect x="323.75" y="177.92" width="2.2" height="7.95" fill="#8fd0a0"/><rect x="326.80" y="177.92" width="2.2" height="7.95" fill="#8fd0a0"/><rect x="329.85" y="177.92" width="2.2" height="7.95" fill="#8fd0a0"/><rect x="332.90" y="177.92" width="2.2" height="7.95" fill="#8fd0a0"/><rect x="335.95" y="177.92" width="2.2" height="7.95" fill="#47a4a2"/><rect x="339.00" y="177.92" width="2.2" height="7.95" fill="#47a4a2"/><rect x="342.05" y="177.92" width="2.2" height="7.95" fill="#47a4a2"/><rect x="345.10" y="177.92" width="2.2" height="7.95" fill="#47a4a2"/><rect x="348.15" y="177.92" width="2.2" height="7.95" fill="#47a4a2"/><rect x="351.20" y="177.92" width="2.2" height="7.95" fill="#47a4a2"/><rect x="354.25" y="177.92" width="2.2" height="7.95" fill="#47a4a2"/><rect x="357.30" y="177.92" width="2.2" height="7.95" fill="#47a4a2"/><rect x="360.35" y="177.92" width="2.2" height="7.95" fill="#3d79b5"/><rect x="363.40" y="177.92" width="2.2" height="7.95" fill="#3d79b5"/><rect x="366.45" y="177.92" width="2.2" height="7.95" fill="#3d79b5"/><rect x="369.50" y="177.92" width="2.2" height="7.95" fill="#3d79b5"/><rect x="372.55" y="177.92" width="2.2" height="7.95" fill="#47a4a2"/><rect x="375.60" y="177.92" width="2.2" height="7.95" fill="#47a4a2"/><rect x="378.65" y="177.92" width="2.2" height="7.95" fill="#47a4a2"/><rect x="381.70" y="177.92" width="2.2" height="7.95" fill="#47a4a2"/><rect x="384.75" y="177.92" width="2.2" height="7.95" fill="#8fd0a0"/><rect x="387.80" y="177.92" width="2.2" height="7.95" fill="#8fd0a0"/><rect x="390.85" y="177.92" width="2.2" height="7.95" fill="#8fd0a0"/><rect x="393.90" y="177.92" width="2.2" height="7.95" fill="#8fd0a0"/><rect x="396.95" y="177.92" width="2.2" height="7.95" fill="#8fd0a0"/><rect x="400.00" y="177.92" width="2.2" height="7.95" fill="#8fd0a0"/><rect x="403.05" y="177.92" width="2.2" height="7.95" fill="#8fd0a0"/><rect x="406.10" y="177.92" width="2.2" height="7.95" fill="#8fd0a0"/><rect x="409.15" y="177.92" width="2.2" height="7.95" fill="#8fd0a0"/><rect x="412.20" y="177.92" width="2.2" height="7.95" fill="#8fd0a0"/><rect x="415.25" y="177.92" width="2.2" height="7.95" fill="#8fd0a0"/><rect x="418.30" y="177.92" width="2.2" height="7.95" fill="#8fd0a0"/><rect x="421.35" y="177.92" width="2.2" height="7.95" fill="#47a4a2"/><rect x="424.40" y="177.92" width="2.2" height="7.95" fill="#47a4a2"/><rect x="427.45" y="177.92" width="2.2" height="7.95" fill="#47a4a2"/><rect x="430.50" y="177.92" width="2.2" height="7.95" fill="#47a4a2"/><rect x="433.55" y="177.92" width="2.2" height="7.95" fill="#47a4a2"/><rect x="436.60" y="177.92" width="2.2" height="7.95" fill="#47a4a2"/><rect x="439.65" y="177.92" width="2.2" height="7.95" fill="#47a4a2"/><rect x="442.70" y="177.92" width="2.2" height="7.95" fill="#47a4a2"/><rect x="445.75" y="177.92" width="2.2" height="7.95" fill="#47a4a2"/><rect x="448.80" y="177.92" width="2.2" height="7.95" fill="#47a4a2"/><rect x="451.85" y="177.92" width="2.2" height="7.95" fill="#47a4a2"/><rect x="454.90" y="177.92" width="2.2" height="7.95" fill="#47a4a2"/><rect x="457.95" y="177.92" width="2.2" height="7.95" fill="#8fd0a0"/><rect x="461.00" y="177.92" width="2.2" height="7.95" fill="#8fd0a0"/><rect x="464.05" y="177.92" width="2.2" height="7.95" fill="#8fd0a0"/><rect x="467.10" y="177.92" width="2.2" height="7.95" fill="#8fd0a0"/><rect x="470.15" y="177.92" width="2.2" height="7.95" fill="#c2e39b"/><rect x="473.20" y="177.92" width="2.2" height="7.95" fill="#c2e39b"/><rect x="476.25" y="177.92" width="2.2" height="7.95" fill="#c2e39b"/><rect x="479.30" y="177.92" width="2.2" height="7.95" fill="#c2e39b"/><rect x="482.35" y="177.92" width="2.2" height="7.95" fill="#8fd0a0"/><rect x="485.40" y="177.92" width="2.2" height="7.95" fill="#8fd0a0"/><rect x="488.45" y="177.92" width="2.2" height="7.95" fill="#8fd0a0"/><rect x="491.50" y="177.92" width="2.2" height="7.95" fill="#8fd0a0"/><rect x="494.55" y="177.92" width="2.2" height="7.95" fill="#8fd0a0"/><rect x="497.60" y="177.92" width="2.2" height="7.95" fill="#8fd0a0"/><rect x="500.65" y="177.92" width="2.2" height="7.95" fill="#8fd0a0"/><rect x="503.70" y="177.92" width="2.2" height="7.95" fill="#8fd0a0"/><rect x="506.75" y="177.92" width="2.2" height="7.95" fill="#8fd0a0"/><rect x="509.80" y="177.92" width="2.2" height="7.95" fill="#8fd0a0"/><rect x="512.85" y="177.92" width="2.2" height="7.95" fill="#8fd0a0"/><rect x="515.90" y="177.92" width="2.2" height="7.95" fill="#8fd0a0"/><rect x="518.95" y="177.92" width="2.2" height="7.95" fill="#8fd0a0"/><rect x="522.00" y="177.92" width="2.2" height="7.95" fill="#8fd0a0"/><rect x="525.05" y="177.92" width="2.2" height="7.95" fill="#8fd0a0"/><rect x="528.10" y="177.92" width="2.2" height="7.95" fill="#8fd0a0"/><rect x="531.15" y="177.92" width="2.2" height="7.95" fill="#8fd0a0"/><rect x="534.20" y="177.92" width="2.2" height="7.95" fill="#8fd0a0"/><rect x="537.25" y="177.92" width="2.2" height="7.95" fill="#8fd0a0"/><rect x="540.30" y="177.92" width="2.2" height="7.95" fill="#8fd0a0"/><rect x="543.35" y="177.92" width="2.2" height="7.95" fill="#47a4a2"/><rect x="546.40" y="177.92" width="2.2" height="7.95" fill="#47a4a2"/><rect x="549.45" y="177.92" width="2.2" height="7.95" fill="#47a4a2"/><rect x="552.50" y="177.92" width="2.2" height="7.95" fill="#47a4a2"/><rect x="555.55" y="177.92" width="2.2" height="7.95" fill="#47a4a2"/><rect x="558.60" y="177.92" width="2.2" height="7.95" fill="#47a4a2"/><rect x="561.65" y="177.92" width="2.2" height="7.95" fill="#47a4a2"/><rect x="564.70" y="177.92" width="2.2" height="7.95" fill="#47a4a2"/><rect x="567.75" y="177.92" width="2.2" height="7.95" fill="#3d79b5"/><rect x="570.80" y="177.92" width="2.2" height="7.95" fill="#3d79b5"/><rect x="573.85" y="177.92" width="2.2" height="7.95" fill="#3d79b5"/><rect x="576.90" y="177.92" width="2.2" height="7.95" fill="#3d79b5"/><rect x="579.95" y="177.92" width="2.2" height="7.95" fill="#3d79b5"/><rect x="583.00" y="177.92" width="2.2" height="7.95" fill="#3d79b5"/><rect x="586.05" y="177.92" width="2.2" height="7.95" fill="#3d79b5"/><rect x="589.10" y="177.92" width="2.2" height="7.95" fill="#3d79b5"/><rect x="592.15" y="177.92" width="2.2" height="7.95" fill="#3d79b5"/><rect x="595.20" y="177.92" width="2.2" height="7.95" fill="#3d79b5"/><rect x="598.25" y="177.92" width="2.2" height="7.95" fill="#3d79b5"/><rect x="601.30" y="177.92" width="2.2" height="7.95" fill="#3d79b5"/><rect x="604.35" y="177.92" width="2.2" height="7.95" fill="#47a4a2"/><rect x="607.40" y="177.92" width="2.2" height="7.95" fill="#47a4a2"/><rect x="610.45" y="177.92" width="2.2" height="7.95" fill="#47a4a2"/><rect x="613.50" y="177.92" width="2.2" height="7.95" fill="#47a4a2"/><rect x="616.55" y="177.92" width="2.2" height="7.95" fill="#47a4a2"/><rect x="619.60" y="177.92" width="2.2" height="7.95" fill="#47a4a2"/><rect x="622.65" y="177.92" width="2.2" height="7.95" fill="#47a4a2"/><rect x="625.70" y="177.92" width="2.2" height="7.95" fill="#47a4a2"/><rect x="628.75" y="177.92" width="2.2" height="7.95" fill="#47a4a2"/><rect x="631.80" y="177.92" width="2.2" height="7.95" fill="#47a4a2"/><rect x="634.85" y="177.92" width="2.2" height="7.95" fill="#47a4a2"/><rect x="637.90" y="177.92" width="2.2" height="7.95" fill="#47a4a2"/><rect x="640.95" y="177.92" width="2.2" height="7.95" fill="#47a4a2"/><rect x="644.00" y="177.92" width="2.2" height="7.95" fill="#47a4a2"/><rect x="647.05" y="177.92" width="2.2" height="7.95" fill="#47a4a2"/><rect x="650.10" y="177.92" width="2.2" height="7.95" fill="#47a4a2"/><rect x="653.15" y="177.92" width="2.2" height="7.95" fill="#594da4"/><rect x="656.20" y="177.92" width="2.2" height="7.95" fill="#594da4"/><rect x="659.25" y="177.92" width="2.2" height="7.95" fill="#594da4"/><rect x="662.30" y="177.92" width="2.2" height="7.95" fill="#594da4"/><rect x="665.35" y="177.92" width="2.2" height="7.95" fill="#3d79b5"/><rect x="668.40" y="177.92" width="2.2" height="7.95" fill="#3d79b5"/><rect x="671.45" y="177.92" width="2.2" height="7.95" fill="#3d79b5"/><rect x="674.50" y="177.92" width="2.2" height="7.95" fill="#3d79b5"/><rect x="677.55" y="177.92" width="2.2" height="7.95" fill="#3d79b5"/><rect x="680.60" y="177.92" width="2.2" height="7.95" fill="#3d79b5"/><rect x="683.65" y="177.92" width="2.2" height="7.95" fill="#3d79b5"/><rect x="686.70" y="177.92" width="2.2" height="7.95" fill="#3d79b5"/><rect x="689.75" y="177.92" width="2.2" height="7.95" fill="#3d79b5"/><rect x="692.80" y="177.92" width="2.2" height="7.95" fill="#3d79b5"/><rect x="695.85" y="177.92" width="2.2" height="7.95" fill="#3d79b5"/><rect x="698.90" y="177.92" width="2.2" height="7.95" fill="#3d79b5"/><rect x="701.95" y="177.92" width="2.2" height="7.95" fill="#c2e39b"/><rect x="705.00" y="177.92" width="2.2" height="7.95" fill="#c2e39b"/><rect x="708.05" y="177.92" width="2.2" height="7.95" fill="#c2e39b"/><rect x="711.10" y="177.92" width="2.2" height="7.95" fill="#c2e39b"/><rect x="714.15" y="177.92" width="2.2" height="7.95" fill="#c2e39b"/><rect x="717.20" y="177.92" width="2.2" height="7.95" fill="#c2e39b"/><rect x="720.25" y="177.92" width="2.2" height="7.95" fill="#c2e39b"/><rect x="723.30" y="177.92" width="2.2" height="7.95" fill="#c2e39b"/><rect x="726.35" y="177.92" width="2.2" height="7.95" fill="#c2e39b"/><rect x="729.40" y="177.92" width="2.2" height="7.95" fill="#c2e39b"/><rect x="732.45" y="177.92" width="2.2" height="7.95" fill="#c2e39b"/><rect x="735.50" y="177.92" width="2.2" height="7.95" fill="#c2e39b"/><rect x="738.55" y="177.92" width="2.2" height="7.95" fill="#47a4a2"/><rect x="741.60" y="177.92" width="2.2" height="7.95" fill="#47a4a2"/><rect x="744.65" y="177.92" width="2.2" height="7.95" fill="#47a4a2"/><rect x="747.70" y="177.92" width="2.2" height="7.95" fill="#47a4a2"/><rect x="750.75" y="177.92" width="2.2" height="7.95" fill="#3d79b5"/><rect x="753.80" y="177.92" width="2.2" height="7.95" fill="#3d79b5"/><rect x="756.85" y="177.92" width="2.2" height="7.95" fill="#3d79b5"/><rect x="759.90" y="177.92" width="2.2" height="7.95" fill="#3d79b5"/><rect x="762.95" y="177.92" width="2.2" height="7.95" fill="#47a4a2"/><rect x="766.00" y="177.92" width="2.2" height="7.95" fill="#47a4a2"/><rect x="769.05" y="177.92" width="2.2" height="7.95" fill="#47a4a2"/><rect x="772.10" y="177.92" width="2.2" height="7.95" fill="#47a4a2"/><rect x="775.15" y="177.92" width="2.2" height="7.95" fill="#47a4a2"/><rect x="778.20" y="177.92" width="2.2" height="7.95" fill="#47a4a2"/><rect x="52.30" y="186.80" width="2.2" height="7.95" fill="#3d79b5"/><rect x="55.35" y="186.80" width="2.2" height="7.95" fill="#3d79b5"/><rect x="58.40" y="186.80" width="2.2" height="7.95" fill="#3d79b5"/><rect x="61.45" y="186.80" width="2.2" height="7.95" fill="#3d79b5"/><rect x="64.50" y="186.80" width="2.2" height="7.95" fill="#3d79b5"/><rect x="67.55" y="186.80" width="2.2" height="7.95" fill="#3d79b5"/><rect x="70.60" y="186.80" width="2.2" height="7.95" fill="#3d79b5"/><rect x="73.65" y="186.80" width="2.2" height="7.95" fill="#3d79b5"/><rect x="76.70" y="186.80" width="2.2" height="7.95" fill="#3d79b5"/><rect x="79.75" y="186.80" width="2.2" height="7.95" fill="#3d79b5"/><rect x="82.80" y="186.80" width="2.2" height="7.95" fill="#3d79b5"/><rect x="85.85" y="186.80" width="2.2" height="7.95" fill="#3d79b5"/><rect x="88.90" y="186.80" width="2.2" height="7.95" fill="#3d79b5"/><rect x="91.95" y="186.80" width="2.2" height="7.95" fill="#594da4"/><rect x="95.00" y="186.80" width="2.2" height="7.95" fill="#594da4"/><rect x="98.05" y="186.80" width="2.2" height="7.95" fill="#594da4"/><rect x="101.10" y="186.80" width="2.2" height="7.95" fill="#594da4"/><rect x="104.15" y="186.80" width="2.2" height="7.95" fill="#3d79b5"/><rect x="107.20" y="186.80" width="2.2" height="7.95" fill="#3d79b5"/><rect x="110.25" y="186.80" width="2.2" height="7.95" fill="#3d79b5"/><rect x="113.30" y="186.80" width="2.2" height="7.95" fill="#3d79b5"/><rect x="116.35" y="186.80" width="2.2" height="7.95" fill="#3d79b5"/><rect x="119.40" y="186.80" width="2.2" height="7.95" fill="#3d79b5"/><rect x="122.45" y="186.80" width="2.2" height="7.95" fill="#3d79b5"/><rect x="125.50" y="186.80" width="2.2" height="7.95" fill="#3d79b5"/><rect x="128.55" y="186.80" width="2.2" height="7.95" fill="#47a4a2"/><rect x="131.60" y="186.80" width="2.2" height="7.95" fill="#47a4a2"/><rect x="134.65" y="186.80" width="2.2" height="7.95" fill="#47a4a2"/><rect x="137.70" y="186.80" width="2.2" height="7.95" fill="#47a4a2"/><rect x="140.75" y="186.80" width="2.2" height="7.95" fill="#47a4a2"/><rect x="143.80" y="186.80" width="2.2" height="7.95" fill="#47a4a2"/><rect x="146.85" y="186.80" width="2.2" height="7.95" fill="#47a4a2"/><rect x="149.90" y="186.80" width="2.2" height="7.95" fill="#47a4a2"/><rect x="152.95" y="186.80" width="2.2" height="7.95" fill="#47a4a2"/><rect x="156.00" y="186.80" width="2.2" height="7.95" fill="#47a4a2"/><rect x="159.05" y="186.80" width="2.2" height="7.95" fill="#47a4a2"/><rect x="162.10" y="186.80" width="2.2" height="7.95" fill="#47a4a2"/><rect x="165.15" y="186.80" width="2.2" height="7.95" fill="#8fd0a0"/><rect x="168.20" y="186.80" width="2.2" height="7.95" fill="#8fd0a0"/><rect x="171.25" y="186.80" width="2.2" height="7.95" fill="#8fd0a0"/><rect x="174.30" y="186.80" width="2.2" height="7.95" fill="#8fd0a0"/><rect x="177.35" y="186.80" width="2.2" height="7.95" fill="#47a4a2"/><rect x="180.40" y="186.80" width="2.2" height="7.95" fill="#47a4a2"/><rect x="183.45" y="186.80" width="2.2" height="7.95" fill="#47a4a2"/><rect x="186.50" y="186.80" width="2.2" height="7.95" fill="#47a4a2"/><rect x="189.55" y="186.80" width="2.2" height="7.95" fill="#47a4a2"/><rect x="192.60" y="186.80" width="2.2" height="7.95" fill="#47a4a2"/><rect x="195.65" y="186.80" width="2.2" height="7.95" fill="#47a4a2"/><rect x="198.70" y="186.80" width="2.2" height="7.95" fill="#47a4a2"/><rect x="201.75" y="186.80" width="2.2" height="7.95" fill="#47a4a2"/><rect x="204.80" y="186.80" width="2.2" height="7.95" fill="#47a4a2"/><rect x="207.85" y="186.80" width="2.2" height="7.95" fill="#47a4a2"/><rect x="210.90" y="186.80" width="2.2" height="7.95" fill="#47a4a2"/><rect x="213.95" y="186.80" width="2.2" height="7.95" fill="#3d9ab2"/><rect x="217.00" y="186.80" width="2.2" height="7.95" fill="#3d9ab2"/><rect x="220.05" y="186.80" width="2.2" height="7.95" fill="#3d9ab2"/><rect x="223.10" y="186.80" width="2.2" height="7.95" fill="#3d9ab2"/><rect x="226.15" y="186.80" width="2.2" height="7.95" fill="#3d9ab2"/><rect x="229.20" y="186.80" width="2.2" height="7.95" fill="#3d9ab2"/><rect x="232.25" y="186.80" width="2.2" height="7.95" fill="#3d9ab2"/><rect x="235.30" y="186.80" width="2.2" height="7.95" fill="#3d9ab2"/><rect x="238.35" y="186.80" width="2.2" height="7.95" fill="#3d9ab2"/><rect x="241.40" y="186.80" width="2.2" height="7.95" fill="#3d9ab2"/><rect x="244.45" y="186.80" width="2.2" height="7.95" fill="#3d9ab2"/><rect x="247.50" y="186.80" width="2.2" height="7.95" fill="#3d9ab2"/><rect x="250.55" y="186.80" width="2.2" height="7.95" fill="#3d79b5"/><rect x="253.60" y="186.80" width="2.2" height="7.95" fill="#3d79b5"/><rect x="256.65" y="186.80" width="2.2" height="7.95" fill="#3d79b5"/><rect x="259.70" y="186.80" width="2.2" height="7.95" fill="#3d79b5"/><rect x="262.75" y="186.80" width="2.2" height="7.95" fill="#3d9ab2"/><rect x="265.80" y="186.80" width="2.2" height="7.95" fill="#3d9ab2"/><rect x="268.85" y="186.80" width="2.2" height="7.95" fill="#3d9ab2"/><rect x="271.90" y="186.80" width="2.2" height="7.95" fill="#3d9ab2"/><rect x="274.95" y="186.80" width="2.2" height="7.95" fill="#47a4a2"/><rect x="278.00" y="186.80" width="2.2" height="7.95" fill="#47a4a2"/><rect x="281.05" y="186.80" width="2.2" height="7.95" fill="#47a4a2"/><rect x="284.10" y="186.80" width="2.2" height="7.95" fill="#47a4a2"/><rect x="287.15" y="186.80" width="2.2" height="7.95" fill="#47a4a2"/><rect x="290.20" y="186.80" width="2.2" height="7.95" fill="#47a4a2"/><rect x="293.25" y="186.80" width="2.2" height="7.95" fill="#47a4a2"/><rect x="296.30" y="186.80" width="2.2" height="7.95" fill="#47a4a2"/><rect x="299.35" y="186.80" width="2.2" height="7.95" fill="#47a4a2"/><rect x="302.40" y="186.80" width="2.2" height="7.95" fill="#47a4a2"/><rect x="305.45" y="186.80" width="2.2" height="7.95" fill="#47a4a2"/><rect x="308.50" y="186.80" width="2.2" height="7.95" fill="#47a4a2"/><rect x="311.55" y="186.80" width="2.2" height="7.95" fill="#8fd0a0"/><rect x="314.60" y="186.80" width="2.2" height="7.95" fill="#8fd0a0"/><rect x="317.65" y="186.80" width="2.2" height="7.95" fill="#8fd0a0"/><rect x="320.70" y="186.80" width="2.2" height="7.95" fill="#8fd0a0"/><rect x="323.75" y="186.80" width="2.2" height="7.95" fill="#47a4a2"/><rect x="326.80" y="186.80" width="2.2" height="7.95" fill="#47a4a2"/><rect x="329.85" y="186.80" width="2.2" height="7.95" fill="#47a4a2"/><rect x="332.90" y="186.80" width="2.2" height="7.95" fill="#47a4a2"/><rect x="335.95" y="186.80" width="2.2" height="7.95" fill="#47a4a2"/><rect x="339.00" y="186.80" width="2.2" height="7.95" fill="#47a4a2"/><rect x="342.05" y="186.80" width="2.2" height="7.95" fill="#47a4a2"/><rect x="345.10" y="186.80" width="2.2" height="7.95" fill="#47a4a2"/><rect x="348.15" y="186.80" width="2.2" height="7.95" fill="#47a4a2"/><rect x="351.20" y="186.80" width="2.2" height="7.95" fill="#47a4a2"/><rect x="354.25" y="186.80" width="2.2" height="7.95" fill="#47a4a2"/><rect x="357.30" y="186.80" width="2.2" height="7.95" fill="#47a4a2"/><rect x="360.35" y="186.80" width="2.2" height="7.95" fill="#3d79b5"/><rect x="363.40" y="186.80" width="2.2" height="7.95" fill="#3d79b5"/><rect x="366.45" y="186.80" width="2.2" height="7.95" fill="#3d79b5"/><rect x="369.50" y="186.80" width="2.2" height="7.95" fill="#3d79b5"/><rect x="372.55" y="186.80" width="2.2" height="7.95" fill="#3d9ab2"/><rect x="375.60" y="186.80" width="2.2" height="7.95" fill="#3d9ab2"/><rect x="378.65" y="186.80" width="2.2" height="7.95" fill="#3d9ab2"/><rect x="381.70" y="186.80" width="2.2" height="7.95" fill="#3d9ab2"/><rect x="384.75" y="186.80" width="2.2" height="7.95" fill="#47a4a2"/><rect x="387.80" y="186.80" width="2.2" height="7.95" fill="#47a4a2"/><rect x="390.85" y="186.80" width="2.2" height="7.95" fill="#47a4a2"/><rect x="393.90" y="186.80" width="2.2" height="7.95" fill="#47a4a2"/><rect x="396.95" y="186.80" width="2.2" height="7.95" fill="#47a4a2"/><rect x="400.00" y="186.80" width="2.2" height="7.95" fill="#47a4a2"/><rect x="403.05" y="186.80" width="2.2" height="7.95" fill="#47a4a2"/><rect x="406.10" y="186.80" width="2.2" height="7.95" fill="#47a4a2"/><rect x="409.15" y="186.80" width="2.2" height="7.95" fill="#47a4a2"/><rect x="412.20" y="186.80" width="2.2" height="7.95" fill="#47a4a2"/><rect x="415.25" y="186.80" width="2.2" height="7.95" fill="#47a4a2"/><rect x="418.30" y="186.80" width="2.2" height="7.95" fill="#47a4a2"/><rect x="421.35" y="186.80" width="2.2" height="7.95" fill="#3d9ab2"/><rect x="424.40" y="186.80" width="2.2" height="7.95" fill="#3d9ab2"/><rect x="427.45" y="186.80" width="2.2" height="7.95" fill="#3d9ab2"/><rect x="430.50" y="186.80" width="2.2" height="7.95" fill="#3d9ab2"/><rect x="433.55" y="186.80" width="2.2" height="7.95" fill="#3d9ab2"/><rect x="436.60" y="186.80" width="2.2" height="7.95" fill="#3d9ab2"/><rect x="439.65" y="186.80" width="2.2" height="7.95" fill="#3d9ab2"/><rect x="442.70" y="186.80" width="2.2" height="7.95" fill="#3d9ab2"/><rect x="445.75" y="186.80" width="2.2" height="7.95" fill="#3d9ab2"/><rect x="448.80" y="186.80" width="2.2" height="7.95" fill="#3d9ab2"/><rect x="451.85" y="186.80" width="2.2" height="7.95" fill="#3d9ab2"/><rect x="454.90" y="186.80" width="2.2" height="7.95" fill="#3d9ab2"/><rect x="457.95" y="186.80" width="2.2" height="7.95" fill="#8fd0a0"/><rect x="461.00" y="186.80" width="2.2" height="7.95" fill="#8fd0a0"/><rect x="464.05" y="186.80" width="2.2" height="7.95" fill="#8fd0a0"/><rect x="467.10" y="186.80" width="2.2" height="7.95" fill="#8fd0a0"/><rect x="470.15" y="186.80" width="2.2" height="7.95" fill="#8fd0a0"/><rect x="473.20" y="186.80" width="2.2" height="7.95" fill="#8fd0a0"/><rect x="476.25" y="186.80" width="2.2" height="7.95" fill="#8fd0a0"/><rect x="479.30" y="186.80" width="2.2" height="7.95" fill="#8fd0a0"/><rect x="482.35" y="186.80" width="2.2" height="7.95" fill="#47a4a2"/><rect x="485.40" y="186.80" width="2.2" height="7.95" fill="#47a4a2"/><rect x="488.45" y="186.80" width="2.2" height="7.95" fill="#47a4a2"/><rect x="491.50" y="186.80" width="2.2" height="7.95" fill="#47a4a2"/><rect x="494.55" y="186.80" width="2.2" height="7.95" fill="#47a4a2"/><rect x="497.60" y="186.80" width="2.2" height="7.95" fill="#47a4a2"/><rect x="500.65" y="186.80" width="2.2" height="7.95" fill="#47a4a2"/><rect x="503.70" y="186.80" width="2.2" height="7.95" fill="#47a4a2"/><rect x="506.75" y="186.80" width="2.2" height="7.95" fill="#47a4a2"/><rect x="509.80" y="186.80" width="2.2" height="7.95" fill="#47a4a2"/><rect x="512.85" y="186.80" width="2.2" height="7.95" fill="#47a4a2"/><rect x="515.90" y="186.80" width="2.2" height="7.95" fill="#47a4a2"/><rect x="518.95" y="186.80" width="2.2" height="7.95" fill="#47a4a2"/><rect x="522.00" y="186.80" width="2.2" height="7.95" fill="#47a4a2"/><rect x="525.05" y="186.80" width="2.2" height="7.95" fill="#47a4a2"/><rect x="528.10" y="186.80" width="2.2" height="7.95" fill="#47a4a2"/><rect x="531.15" y="186.80" width="2.2" height="7.95" fill="#47a4a2"/><rect x="534.20" y="186.80" width="2.2" height="7.95" fill="#47a4a2"/><rect x="537.25" y="186.80" width="2.2" height="7.95" fill="#47a4a2"/><rect x="540.30" y="186.80" width="2.2" height="7.95" fill="#47a4a2"/><rect x="543.35" y="186.80" width="2.2" height="7.95" fill="#3d79b5"/><rect x="546.40" y="186.80" width="2.2" height="7.95" fill="#3d79b5"/><rect x="549.45" y="186.80" width="2.2" height="7.95" fill="#3d79b5"/><rect x="552.50" y="186.80" width="2.2" height="7.95" fill="#3d79b5"/><rect x="555.55" y="186.80" width="2.2" height="7.95" fill="#3d79b5"/><rect x="558.60" y="186.80" width="2.2" height="7.95" fill="#3d79b5"/><rect x="561.65" y="186.80" width="2.2" height="7.95" fill="#3d79b5"/><rect x="564.70" y="186.80" width="2.2" height="7.95" fill="#3d79b5"/><rect x="567.75" y="186.80" width="2.2" height="7.95" fill="#594da4"/><rect x="570.80" y="186.80" width="2.2" height="7.95" fill="#594da4"/><rect x="573.85" y="186.80" width="2.2" height="7.95" fill="#594da4"/><rect x="576.90" y="186.80" width="2.2" height="7.95" fill="#594da4"/><rect x="579.95" y="186.80" width="2.2" height="7.95" fill="#594da4"/><rect x="583.00" y="186.80" width="2.2" height="7.95" fill="#594da4"/><rect x="586.05" y="186.80" width="2.2" height="7.95" fill="#594da4"/><rect x="589.10" y="186.80" width="2.2" height="7.95" fill="#594da4"/><rect x="592.15" y="186.80" width="2.2" height="7.95" fill="#594da4"/><rect x="595.20" y="186.80" width="2.2" height="7.95" fill="#594da4"/><rect x="598.25" y="186.80" width="2.2" height="7.95" fill="#594da4"/><rect x="601.30" y="186.80" width="2.2" height="7.95" fill="#594da4"/><rect x="604.35" y="186.80" width="2.2" height="7.95" fill="#3d9ab2"/><rect x="607.40" y="186.80" width="2.2" height="7.95" fill="#3d9ab2"/><rect x="610.45" y="186.80" width="2.2" height="7.95" fill="#3d9ab2"/><rect x="613.50" y="186.80" width="2.2" height="7.95" fill="#3d9ab2"/><rect x="616.55" y="186.80" width="2.2" height="7.95" fill="#3d9ab2"/><rect x="619.60" y="186.80" width="2.2" height="7.95" fill="#3d9ab2"/><rect x="622.65" y="186.80" width="2.2" height="7.95" fill="#3d9ab2"/><rect x="625.70" y="186.80" width="2.2" height="7.95" fill="#3d9ab2"/><rect x="628.75" y="186.80" width="2.2" height="7.95" fill="#3d9ab2"/><rect x="631.80" y="186.80" width="2.2" height="7.95" fill="#3d9ab2"/><rect x="634.85" y="186.80" width="2.2" height="7.95" fill="#3d9ab2"/><rect x="637.90" y="186.80" width="2.2" height="7.95" fill="#3d9ab2"/><rect x="640.95" y="186.80" width="2.2" height="7.95" fill="#3d9ab2"/><rect x="644.00" y="186.80" width="2.2" height="7.95" fill="#3d9ab2"/><rect x="647.05" y="186.80" width="2.2" height="7.95" fill="#3d9ab2"/><rect x="650.10" y="186.80" width="2.2" height="7.95" fill="#3d9ab2"/><rect x="653.15" y="186.80" width="2.2" height="7.95" fill="#594da4"/><rect x="656.20" y="186.80" width="2.2" height="7.95" fill="#594da4"/><rect x="659.25" y="186.80" width="2.2" height="7.95" fill="#594da4"/><rect x="662.30" y="186.80" width="2.2" height="7.95" fill="#594da4"/><rect x="665.35" y="186.80" width="2.2" height="7.95" fill="#3d79b5"/><rect x="668.40" y="186.80" width="2.2" height="7.95" fill="#3d79b5"/><rect x="671.45" y="186.80" width="2.2" height="7.95" fill="#3d79b5"/><rect x="674.50" y="186.80" width="2.2" height="7.95" fill="#3d79b5"/><rect x="677.55" y="186.80" width="2.2" height="7.95" fill="#3d79b5"/><rect x="680.60" y="186.80" width="2.2" height="7.95" fill="#3d79b5"/><rect x="683.65" y="186.80" width="2.2" height="7.95" fill="#3d79b5"/><rect x="686.70" y="186.80" width="2.2" height="7.95" fill="#3d79b5"/><rect x="689.75" y="186.80" width="2.2" height="7.95" fill="#3d79b5"/><rect x="692.80" y="186.80" width="2.2" height="7.95" fill="#3d79b5"/><rect x="695.85" y="186.80" width="2.2" height="7.95" fill="#3d79b5"/><rect x="698.90" y="186.80" width="2.2" height="7.95" fill="#3d79b5"/><rect x="701.95" y="186.80" width="2.2" height="7.95" fill="#8fd0a0"/><rect x="705.00" y="186.80" width="2.2" height="7.95" fill="#8fd0a0"/><rect x="708.05" y="186.80" width="2.2" height="7.95" fill="#8fd0a0"/><rect x="711.10" y="186.80" width="2.2" height="7.95" fill="#8fd0a0"/><rect x="714.15" y="186.80" width="2.2" height="7.95" fill="#8fd0a0"/><rect x="717.20" y="186.80" width="2.2" height="7.95" fill="#8fd0a0"/><rect x="720.25" y="186.80" width="2.2" height="7.95" fill="#8fd0a0"/><rect x="723.30" y="186.80" width="2.2" height="7.95" fill="#8fd0a0"/><rect x="726.35" y="186.80" width="2.2" height="7.95" fill="#47a4a2"/><rect x="729.40" y="186.80" width="2.2" height="7.95" fill="#47a4a2"/><rect x="732.45" y="186.80" width="2.2" height="7.95" fill="#47a4a2"/><rect x="735.50" y="186.80" width="2.2" height="7.95" fill="#47a4a2"/><rect x="738.55" y="186.80" width="2.2" height="7.95" fill="#47a4a2"/><rect x="741.60" y="186.80" width="2.2" height="7.95" fill="#47a4a2"/><rect x="744.65" y="186.80" width="2.2" height="7.95" fill="#47a4a2"/><rect x="747.70" y="186.80" width="2.2" height="7.95" fill="#47a4a2"/><rect x="750.75" y="186.80" width="2.2" height="7.95" fill="#3d79b5"/><rect x="753.80" y="186.80" width="2.2" height="7.95" fill="#3d79b5"/><rect x="756.85" y="186.80" width="2.2" height="7.95" fill="#3d79b5"/><rect x="759.90" y="186.80" width="2.2" height="7.95" fill="#3d79b5"/><rect x="762.95" y="186.80" width="2.2" height="7.95" fill="#47a4a2"/><rect x="766.00" y="186.80" width="2.2" height="7.95" fill="#47a4a2"/><rect x="769.05" y="186.80" width="2.2" height="7.95" fill="#47a4a2"/><rect x="772.10" y="186.80" width="2.2" height="7.95" fill="#47a4a2"/><rect x="775.15" y="186.80" width="2.2" height="7.95" fill="#47a4a2"/><rect x="778.20" y="186.80" width="2.2" height="7.95" fill="#47a4a2"/>
<text x="45" y="145.2" font-size="11" fill="#ccccdc" text-anchor="end" font-weight="400" >250 ms</text>
<line x1="49" y1="142.0" x2="52" y2="142.0" stroke="rgba(204,204,220,0.10)"/>
<text x="45" y="154.07999999999998" font-size="11" fill="#ccccdc" text-anchor="end" font-weight="400" >100 ms</text>
<line x1="49" y1="150.9" x2="52" y2="150.9" stroke="rgba(204,204,220,0.10)"/>
<text x="45" y="162.95999999999998" font-size="11" fill="#ccccdc" text-anchor="end" font-weight="400" >75 ms</text>
<line x1="49" y1="159.8" x2="52" y2="159.8" stroke="rgba(204,204,220,0.10)"/>
<text x="45" y="171.84" font-size="11" fill="#ccccdc" text-anchor="end" font-weight="400" >50 ms</text>
<line x1="49" y1="168.6" x2="52" y2="168.6" stroke="rgba(204,204,220,0.10)"/>
<text x="45" y="180.72" font-size="11" fill="#ccccdc" text-anchor="end" font-weight="400" >25 ms</text>
<line x1="49" y1="177.5" x2="52" y2="177.5" stroke="rgba(204,204,220,0.10)"/>
<text x="45" y="189.6" font-size="11" fill="#ccccdc" text-anchor="end" font-weight="400" >10 ms</text>
<line x1="49" y1="186.4" x2="52" y2="186.4" stroke="rgba(204,204,220,0.10)"/>
<text x="45" y="198.48" font-size="11" fill="#ccccdc" text-anchor="end" font-weight="400" >0 s</text>
<line x1="49" y1="195.3" x2="52" y2="195.3" stroke="rgba(204,204,220,0.10)"/>
<line x1="784.5" y1="130" x2="784.5" y2="197" stroke="rgba(204,204,220,0.10)"/>
<line x1="784.5" y1="142.0" x2="787" y2="142.0" stroke="rgba(204,204,220,0.10)"/>
<line x1="784.5" y1="150.9" x2="787" y2="150.9" stroke="rgba(204,204,220,0.10)"/>
<line x1="784.5" y1="159.8" x2="787" y2="159.8" stroke="rgba(204,204,220,0.10)"/>
<line x1="784.5" y1="168.6" x2="787" y2="168.6" stroke="rgba(204,204,220,0.10)"/>
<line x1="784.5" y1="177.5" x2="787" y2="177.5" stroke="rgba(204,204,220,0.10)"/>
<line x1="784.5" y1="186.4" x2="787" y2="186.4" stroke="rgba(204,204,220,0.10)"/>
<line x1="784.5" y1="195.3" x2="787" y2="195.3" stroke="rgba(204,204,220,0.10)"/>
<line x1="49" y1="196.5" x2="787" y2="196.5" stroke="rgba(204,204,220,0.10)"/>
<line x1="112.6" y1="195.5" x2="112.6" y2="200" stroke="rgba(204,204,220,0.16)"/>
<line x1="173.7" y1="195.5" x2="173.7" y2="200" stroke="rgba(204,204,220,0.16)"/>
<line x1="234.8" y1="195.5" x2="234.8" y2="200" stroke="rgba(204,204,220,0.16)"/>
<line x1="295.9" y1="195.5" x2="295.9" y2="200" stroke="rgba(204,204,220,0.16)"/>
<line x1="357.0" y1="195.5" x2="357.0" y2="200" stroke="rgba(204,204,220,0.16)"/>
<line x1="418.1" y1="195.5" x2="418.1" y2="200" stroke="rgba(204,204,220,0.16)"/>
<line x1="479.2" y1="195.5" x2="479.2" y2="200" stroke="rgba(204,204,220,0.16)"/>
<line x1="540.3" y1="195.5" x2="540.3" y2="200" stroke="rgba(204,204,220,0.16)"/>
<line x1="601.4" y1="195.5" x2="601.4" y2="200" stroke="rgba(204,204,220,0.16)"/>
<line x1="662.5" y1="195.5" x2="662.5" y2="200" stroke="rgba(204,204,220,0.16)"/>
<line x1="723.6" y1="195.5" x2="723.6" y2="200" stroke="rgba(204,204,220,0.16)"/>
<line x1="784.7" y1="195.5" x2="784.7" y2="200" stroke="rgba(204,204,220,0.16)"/>
<clipPath id="clipL"><rect x="0" y="0" width="791" height="814"/></clipPath>
<g clip-path="url(#clipL)">
<text x="112.2" y="213" font-size="12" fill="#ccccdc" text-anchor="middle" font-weight="400" >20:30</text>
<text x="173.3" y="213" font-size="12" fill="#ccccdc" text-anchor="middle" font-weight="400" >20:35</text>
<text x="234.4" y="213" font-size="12" fill="#ccccdc" text-anchor="middle" font-weight="400" >20:40</text>
<text x="295.5" y="213" font-size="12" fill="#ccccdc" text-anchor="middle" font-weight="400" >20:45</text>
<text x="356.6" y="213" font-size="12" fill="#ccccdc" text-anchor="middle" font-weight="400" >20:50</text>
<text x="417.7" y="213" font-size="12" fill="#ccccdc" text-anchor="middle" font-weight="400" >20:55</text>
<text x="478.8" y="213" font-size="12" fill="#ccccdc" text-anchor="middle" font-weight="400" >21:00</text>
<text x="539.9" y="213" font-size="12" fill="#ccccdc" text-anchor="middle" font-weight="400" >21:05</text>
<text x="601.0" y="213" font-size="12" fill="#ccccdc" text-anchor="middle" font-weight="400" >21:10</text>
<text x="662.1" y="213" font-size="12" fill="#ccccdc" text-anchor="middle" font-weight="400" >21:15</text>
<text x="723.2" y="213" font-size="12" fill="#ccccdc" text-anchor="middle" font-weight="400" >21:20</text>
<text x="784.3" y="213" font-size="12" fill="#ccccdc" text-anchor="middle" font-weight="400" >21:25</text>
</g>
</g>
<defs><linearGradient id="spec" x1="0" x2="1" y1="0" y2="0">
<stop offset="0" stop-color="#6a54a8"/><stop offset="0.11" stop-color="#3f8fc0"/><stop offset="0.22" stop-color="#5fbba5"/>
<stop offset="0.33" stop-color="#9dd8a2"/><stop offset="0.45" stop-color="#e9f5a0"/><stop offset="0.52" stop-color="#fbf6b4"/>
<stop offset="0.62" stop-color="#fed889"/><stop offset="0.72" stop-color="#fcaa60"/><stop offset="0.8" stop-color="#f47a4a"/>
<stop offset="0.88" stop-color="#e4574c"/><stop offset="1" stop-color="#9e0142"/>
</linearGradient></defs>
<rect x="29" y="224.1" width="268" height="7.8" rx="2" fill="url(#spec)"/>
<line x1="791.5" y1="215" x2="791.5" y2="257" stroke="rgba(204,204,220,0.12)"/>
<text x="29" y="244" font-size="10.6" fill="#8e8e99" text-anchor="start" font-weight="400" >0.00417 req/s</text>
<text x="297" y="244" font-size="10.6" fill="#8e8e99" text-anchor="end" font-weight="400" >3.99 req/s</text>
<line x1="861" y1="149.4" x2="1593" y2="149.4" stroke="rgba(204,204,220,0.10)"/>
<line x1="861" y1="158.8" x2="1593" y2="158.8" stroke="rgba(204,204,220,0.10)"/>
<line x1="861" y1="168.3" x2="1593" y2="168.3" stroke="rgba(204,204,220,0.10)"/>
<line x1="861" y1="177.7" x2="1593" y2="177.7" stroke="rgba(204,204,220,0.10)"/>
<line x1="861" y1="187.1" x2="1593" y2="187.1" stroke="rgba(204,204,220,0.10)"/>
<line x1="861" y1="196.5" x2="1593" y2="196.5" stroke="rgba(204,204,220,0.10)"/>
<line x1="924.4" y1="135" x2="924.4" y2="200" stroke="rgba(204,204,220,0.10)"/>
<line x1="985.1" y1="135" x2="985.1" y2="200" stroke="rgba(204,204,220,0.10)"/>
<line x1="1045.8" y1="135" x2="1045.8" y2="200" stroke="rgba(204,204,220,0.10)"/>
<line x1="1106.5" y1="135" x2="1106.5" y2="200" stroke="rgba(204,204,220,0.10)"/>
<line x1="1167.2" y1="135" x2="1167.2" y2="200" stroke="rgba(204,204,220,0.10)"/>
<line x1="1227.9" y1="135" x2="1227.9" y2="200" stroke="rgba(204,204,220,0.10)"/>
<line x1="1288.6" y1="135" x2="1288.6" y2="200" stroke="rgba(204,204,220,0.10)"/>
<line x1="1349.3" y1="135" x2="1349.3" y2="200" stroke="rgba(204,204,220,0.10)"/>
<line x1="1410.0" y1="135" x2="1410.0" y2="200" stroke="rgba(204,204,220,0.10)"/>
<line x1="1470.7" y1="135" x2="1470.7" y2="200" stroke="rgba(204,204,220,0.10)"/>
<line x1="1531.4" y1="135" x2="1531.4" y2="200" stroke="rgba(204,204,220,0.10)"/>
<line x1="1592.1" y1="135" x2="1592.1" y2="200" stroke="rgba(204,204,220,0.10)"/>
<line x1="1592.5" y1="135" x2="1592.5" y2="197" stroke="rgba(204,204,220,0.10)"/>
<rect x="864.70" y="134" width="2" height="8.9" fill="#5d54b2"/>
<rect x="864.70" y="191" width="2" height="4.2" fill="#5d54b2"/>
<rect x="867.73" y="134" width="2" height="8.9" fill="#5d54b2"/>
<rect x="867.73" y="191" width="2" height="4.2" fill="#5d54b2"/>
<rect x="870.76" y="134" width="2" height="8.9" fill="#5d54b2"/>
<rect x="870.76" y="191" width="2" height="4.2" fill="#5d54b2"/>
<rect x="873.79" y="134" width="2" height="8.9" fill="#5d54b2"/>
<rect x="873.79" y="191" width="2" height="4.2" fill="#5d54b2"/>
<rect x="876.82" y="134" width="2" height="8.9" fill="#5d54b2"/>
<rect x="876.82" y="191" width="2" height="4.2" fill="#5d54b2"/>
<rect x="879.85" y="134" width="2" height="8.9" fill="#5d54b2"/>
<rect x="879.85" y="191" width="2" height="4.2" fill="#5d54b2"/>
<rect x="882.88" y="134" width="2" height="8.9" fill="#5d54b2"/>
<rect x="882.88" y="191" width="2" height="4.2" fill="#5d54b2"/>
<rect x="885.91" y="134" width="2" height="8.9" fill="#5d54b2"/>
<rect x="885.91" y="191" width="2" height="4.2" fill="#5d54b2"/>
<rect x="888.94" y="134" width="2" height="8.9" fill="#5d54b2"/>
<rect x="888.94" y="191" width="2" height="4.2" fill="#5d54b2"/>
<rect x="891.97" y="134" width="2" height="8.9" fill="#5d54b2"/>
<rect x="891.97" y="191" width="2" height="4.2" fill="#5d54b2"/>
<rect x="895.00" y="134" width="2" height="8.9" fill="#5d54b2"/>
<rect x="895.00" y="191" width="2" height="4.2" fill="#5d54b2"/>
<rect x="898.03" y="134" width="2" height="8.9" fill="#5d54b2"/>
<rect x="898.03" y="191" width="2" height="4.2" fill="#5d54b2"/>
<rect x="901.06" y="134" width="2" height="8.9" fill="#5d54b2"/>
<rect x="901.06" y="191" width="2" height="4.2" fill="#5d54b2"/>
<rect x="904.09" y="134" width="2" height="8.9" fill="#5d54b2"/>
<rect x="904.09" y="191" width="2" height="4.2" fill="#5d54b2"/>
<rect x="907.12" y="134" width="2" height="8.9" fill="#5d54b2"/>
<rect x="907.12" y="191" width="2" height="4.2" fill="#5d54b2"/>
<rect x="910.15" y="134" width="2" height="8.9" fill="#5d54b2"/>
<rect x="910.15" y="191" width="2" height="4.2" fill="#5d54b2"/>
<rect x="913.18" y="134" width="2" height="8.9" fill="#5d54b2"/>
<rect x="913.18" y="191" width="2" height="4.2" fill="#5d54b2"/>
<rect x="916.21" y="134" width="2" height="8.9" fill="#5d54b2"/>
<rect x="916.21" y="191" width="2" height="4.2" fill="#5d54b2"/>
<rect x="919.24" y="134" width="2" height="8.9" fill="#5d54b2"/>
<rect x="919.24" y="191" width="2" height="4.2" fill="#5d54b2"/>
<rect x="922.27" y="134" width="2" height="8.9" fill="#5d54b2"/>
<rect x="922.27" y="191" width="2" height="4.2" fill="#5d54b2"/>
<rect x="925.30" y="134" width="2" height="8.9" fill="#5d54b2"/>
<rect x="925.30" y="191" width="2" height="4.2" fill="#5d54b2"/>
<rect x="928.33" y="134" width="2" height="8.9" fill="#5d54b2"/>
<rect x="928.33" y="191" width="2" height="4.2" fill="#5d54b2"/>
<rect x="931.36" y="134" width="2" height="8.9" fill="#5d54b2"/>
<rect x="931.36" y="191" width="2" height="4.2" fill="#5d54b2"/>
<rect x="934.39" y="134" width="2" height="8.9" fill="#5d54b2"/>
<rect x="934.39" y="191" width="2" height="4.2" fill="#5d54b2"/>
<rect x="937.42" y="134" width="2" height="8.9" fill="#5d54b2"/>
<rect x="937.42" y="191" width="2" height="4.2" fill="#5d54b2"/>
<rect x="940.45" y="134" width="2" height="8.9" fill="#4f69bf"/>
<rect x="940.45" y="191" width="2" height="4.2" fill="#4f69bf"/>
<rect x="943.48" y="134" width="2" height="8.9" fill="#4f69bf"/>
<rect x="943.48" y="191" width="2" height="4.2" fill="#4f69bf"/>
<rect x="946.51" y="134" width="2" height="8.9" fill="#4f69bf"/>
<rect x="946.51" y="191" width="2" height="4.2" fill="#4f69bf"/>
<rect x="949.54" y="134" width="2" height="8.9" fill="#4f69bf"/>
<rect x="949.54" y="191" width="2" height="4.2" fill="#4f69bf"/>
<rect x="952.57" y="134" width="2" height="8.9" fill="#4f69bf"/>
<rect x="952.57" y="191" width="2" height="4.2" fill="#4f69bf"/>
<rect x="955.60" y="134" width="2" height="8.9" fill="#4f69bf"/>
<rect x="955.60" y="191" width="2" height="4.2" fill="#4f69bf"/>
<rect x="958.63" y="134" width="2" height="8.9" fill="#4f69bf"/>
<rect x="958.63" y="191" width="2" height="4.2" fill="#4f69bf"/>
<rect x="961.66" y="134" width="2" height="8.9" fill="#4f69bf"/>
<rect x="961.66" y="191" width="2" height="4.2" fill="#4f69bf"/>
<rect x="964.69" y="134" width="2" height="8.9" fill="#4f69bf"/>
<rect x="964.69" y="191" width="2" height="4.2" fill="#4f69bf"/>
<rect x="967.72" y="134" width="2" height="8.9" fill="#4f69bf"/>
<rect x="967.72" y="191" width="2" height="4.2" fill="#4f69bf"/>
<rect x="970.75" y="134" width="2" height="8.9" fill="#4f69bf"/>
<rect x="970.75" y="191" width="2" height="4.2" fill="#4f69bf"/>
<rect x="973.78" y="134" width="2" height="8.9" fill="#4f69bf"/>
<rect x="973.78" y="191" width="2" height="4.2" fill="#4f69bf"/>
<rect x="976.81" y="134" width="2" height="8.9" fill="#4f69bf"/>
<rect x="976.81" y="191" width="2" height="4.2" fill="#4f69bf"/>
<rect x="979.84" y="134" width="2" height="8.9" fill="#4675c6"/>
<rect x="979.84" y="191" width="2" height="4.2" fill="#4675c6"/>
<rect x="982.87" y="134" width="2" height="8.9" fill="#4675c6"/>
<rect x="982.87" y="191" width="2" height="4.2" fill="#4675c6"/>
<rect x="985.90" y="134" width="2" height="8.9" fill="#4675c6"/>
<rect x="985.90" y="191" width="2" height="4.2" fill="#4675c6"/>
<rect x="988.93" y="134" width="2" height="8.9" fill="#4675c6"/>
<rect x="988.93" y="191" width="2" height="4.2" fill="#4675c6"/>
<rect x="991.96" y="134" width="2" height="8.9" fill="#4675c6"/>
<rect x="991.96" y="191" width="2" height="4.2" fill="#4675c6"/>
<rect x="994.99" y="134" width="2" height="8.9" fill="#4675c6"/>
<rect x="994.99" y="191" width="2" height="4.2" fill="#4675c6"/>
<rect x="998.02" y="134" width="2" height="8.9" fill="#4675c6"/>
<rect x="998.02" y="191" width="2" height="4.2" fill="#4675c6"/>
<rect x="1001.05" y="134" width="2" height="8.9" fill="#4675c6"/>
<rect x="1001.05" y="191" width="2" height="4.2" fill="#4675c6"/>
<rect x="1004.08" y="134" width="2" height="8.9" fill="#4675c6"/>
<rect x="1004.08" y="191" width="2" height="4.2" fill="#4675c6"/>
<rect x="1007.11" y="134" width="2" height="8.9" fill="#4675c6"/>
<rect x="1007.11" y="191" width="2" height="4.2" fill="#4675c6"/>
<rect x="1010.14" y="134" width="2" height="8.9" fill="#4675c6"/>
<rect x="1010.14" y="191" width="2" height="4.2" fill="#4675c6"/>
<rect x="1013.17" y="134" width="2" height="8.9" fill="#4675c6"/>
<rect x="1013.17" y="191" width="2" height="4.2" fill="#4675c6"/>
<rect x="1016.20" y="134" width="2" height="8.9" fill="#4675c6"/>
<rect x="1016.20" y="191" width="2" height="4.2" fill="#4675c6"/>
<rect x="1019.23" y="134" width="2" height="8.9" fill="#4675c6"/>
<rect x="1019.23" y="191" width="2" height="4.2" fill="#4675c6"/>
<rect x="1022.26" y="134" width="2" height="8.9" fill="#4d6bc0"/>
<rect x="1022.26" y="191" width="2" height="4.2" fill="#4d6bc0"/>
<rect x="1025.29" y="134" width="2" height="8.9" fill="#4d6bc0"/>
<rect x="1025.29" y="191" width="2" height="4.2" fill="#4d6bc0"/>
<rect x="1028.32" y="134" width="2" height="8.9" fill="#4d6bc0"/>
<rect x="1028.32" y="191" width="2" height="4.2" fill="#4d6bc0"/>
<rect x="1031.35" y="134" width="2" height="8.9" fill="#4d6bc0"/>
<rect x="1031.35" y="191" width="2" height="4.2" fill="#4d6bc0"/>
<rect x="1034.38" y="134" width="2" height="8.9" fill="#4d6bc0"/>
<rect x="1034.38" y="191" width="2" height="4.2" fill="#4d6bc0"/>
<rect x="1037.41" y="134" width="2" height="8.9" fill="#4d6bc0"/>
<rect x="1037.41" y="191" width="2" height="4.2" fill="#4d6bc0"/>
<rect x="1040.44" y="134" width="2" height="8.9" fill="#4d6bc0"/>
<rect x="1040.44" y="191" width="2" height="4.2" fill="#4d6bc0"/>
<rect x="1043.47" y="134" width="2" height="8.9" fill="#4d6bc0"/>
<rect x="1043.47" y="191" width="2" height="4.2" fill="#4d6bc0"/>
<rect x="1046.50" y="134" width="2" height="8.9" fill="#4d6bc0"/>
<rect x="1046.50" y="191" width="2" height="4.2" fill="#4d6bc0"/>
<rect x="1049.53" y="134" width="2" height="8.9" fill="#4d6bc0"/>
<rect x="1049.53" y="191" width="2" height="4.2" fill="#4d6bc0"/>
<rect x="1052.56" y="134" width="2" height="8.9" fill="#4d6bc0"/>
<rect x="1052.56" y="191" width="2" height="4.2" fill="#4d6bc0"/>
<rect x="1055.59" y="134" width="2" height="8.9" fill="#4d6bc0"/>
<rect x="1055.59" y="191" width="2" height="4.2" fill="#4d6bc0"/>
<rect x="1058.62" y="134" width="2" height="8.9" fill="#4d6bc0"/>
<rect x="1058.62" y="191" width="2" height="4.2" fill="#4d6bc0"/>
<rect x="1061.65" y="134" width="2" height="8.9" fill="#4d6bc0"/>
<rect x="1061.65" y="191" width="2" height="4.2" fill="#4d6bc0"/>
<rect x="1064.68" y="134" width="2" height="8.9" fill="#4d6bc0"/>
<rect x="1064.68" y="191" width="2" height="4.2" fill="#4d6bc0"/>
<rect x="1067.71" y="134" width="2" height="8.9" fill="#4d6bc0"/>
<rect x="1067.71" y="191" width="2" height="4.2" fill="#4d6bc0"/>
<rect x="1070.74" y="134" width="2" height="8.9" fill="#4d6bc0"/>
<rect x="1070.74" y="191" width="2" height="4.2" fill="#4d6bc0"/>
<rect x="1073.77" y="134" width="2" height="8.9" fill="#4d6bc0"/>
<rect x="1073.77" y="191" width="2" height="4.2" fill="#4d6bc0"/>
<rect x="1076.80" y="134" width="2" height="8.9" fill="#4d6bc0"/>
<rect x="1076.80" y="191" width="2" height="4.2" fill="#4d6bc0"/>
<rect x="1079.83" y="134" width="2" height="8.9" fill="#4d6bc0"/>
<rect x="1079.83" y="191" width="2" height="4.2" fill="#4d6bc0"/>
<rect x="1082.86" y="134" width="2" height="8.9" fill="#4d6bc0"/>
<rect x="1082.86" y="191" width="2" height="4.2" fill="#4d6bc0"/>
<rect x="1085.89" y="134" width="2" height="8.9" fill="#4d6bc0"/>
<rect x="1085.89" y="191" width="2" height="4.2" fill="#4d6bc0"/>
<rect x="1088.92" y="134" width="2" height="8.9" fill="#4d6bc0"/>
<rect x="1088.92" y="191" width="2" height="4.2" fill="#4d6bc0"/>
<rect x="1091.95" y="134" width="2" height="8.9" fill="#4d6bc0"/>
<rect x="1091.95" y="191" width="2" height="4.2" fill="#4d6bc0"/>
<rect x="1094.98" y="134" width="2" height="8.9" fill="#4d6bc0"/>
<rect x="1094.98" y="191" width="2" height="4.2" fill="#4d6bc0"/>
<rect x="1098.01" y="134" width="2" height="8.9" fill="#4d6bc0"/>
<rect x="1098.01" y="191" width="2" height="4.2" fill="#4d6bc0"/>
<rect x="1101.04" y="134" width="2" height="8.9" fill="#4d6bc0"/>
<rect x="1101.04" y="191" width="2" height="4.2" fill="#4d6bc0"/>
<rect x="1104.07" y="134" width="2" height="8.9" fill="#4d6bc0"/>
<rect x="1104.07" y="191" width="2" height="4.2" fill="#4d6bc0"/>
<rect x="1107.10" y="134" width="2" height="8.9" fill="#4d6bc0"/>
<rect x="1107.10" y="191" width="2" height="4.2" fill="#4d6bc0"/>
<rect x="1110.13" y="134" width="2" height="8.9" fill="#4d6bc0"/>
<rect x="1110.13" y="191" width="2" height="4.2" fill="#4d6bc0"/>
<rect x="1113.16" y="134" width="2" height="8.9" fill="#4d6bc0"/>
<rect x="1113.16" y="191" width="2" height="4.2" fill="#4d6bc0"/>
<rect x="1116.19" y="134" width="2" height="8.9" fill="#4d6bc0"/>
<rect x="1116.19" y="191" width="2" height="4.2" fill="#4d6bc0"/>
<rect x="1119.22" y="134" width="2" height="8.9" fill="#4d6bc0"/>
<rect x="1119.22" y="191" width="2" height="4.2" fill="#4d6bc0"/>
<rect x="1122.25" y="134" width="2" height="8.9" fill="#4675c6"/>
<rect x="1122.25" y="191" width="2" height="4.2" fill="#4675c6"/>
<rect x="1125.28" y="134" width="2" height="8.9" fill="#4675c6"/>
<rect x="1125.28" y="191" width="2" height="4.2" fill="#4675c6"/>
<rect x="1128.31" y="134" width="2" height="8.9" fill="#4675c6"/>
<rect x="1128.31" y="191" width="2" height="4.2" fill="#4675c6"/>
<rect x="1131.34" y="134" width="2" height="8.9" fill="#4675c6"/>
<rect x="1131.34" y="191" width="2" height="4.2" fill="#4675c6"/>
<rect x="1134.37" y="134" width="2" height="8.9" fill="#4675c6"/>
<rect x="1134.37" y="191" width="2" height="4.2" fill="#4675c6"/>
<rect x="1137.40" y="134" width="2" height="8.9" fill="#4675c6"/>
<rect x="1137.40" y="191" width="2" height="4.2" fill="#4675c6"/>
<rect x="1140.43" y="134" width="2" height="8.9" fill="#4c6dc1"/>
<rect x="1140.43" y="191" width="2" height="4.2" fill="#4c6dc1"/>
<rect x="1143.46" y="134" width="2" height="8.9" fill="#4c6dc1"/>
<rect x="1143.46" y="191" width="2" height="4.2" fill="#4c6dc1"/>
<rect x="1146.49" y="134" width="2" height="8.9" fill="#4c6dc1"/>
<rect x="1146.49" y="191" width="2" height="4.2" fill="#4c6dc1"/>
<rect x="1149.52" y="134" width="2" height="8.9" fill="#4c6dc1"/>
<rect x="1149.52" y="191" width="2" height="4.2" fill="#4c6dc1"/>
<rect x="1152.55" y="134" width="2" height="8.9" fill="#4c6dc1"/>
<rect x="1152.55" y="191" width="2" height="4.2" fill="#4c6dc1"/>
<rect x="1155.58" y="134" width="2" height="8.9" fill="#4c6dc1"/>
<rect x="1155.58" y="191" width="2" height="4.2" fill="#4c6dc1"/>
<rect x="1158.61" y="134" width="2" height="8.9" fill="#4c6dc1"/>
<rect x="1158.61" y="191" width="2" height="4.2" fill="#4c6dc1"/>
<rect x="1161.64" y="134" width="2" height="8.9" fill="#4c6dc1"/>
<rect x="1161.64" y="191" width="2" height="4.2" fill="#4c6dc1"/>
<rect x="1164.67" y="134" width="2" height="8.9" fill="#4c6dc1"/>
<rect x="1164.67" y="191" width="2" height="4.2" fill="#4c6dc1"/>
<rect x="1167.70" y="134" width="2" height="8.9" fill="#4c6dc1"/>
<rect x="1167.70" y="191" width="2" height="4.2" fill="#4c6dc1"/>
<rect x="1170.73" y="134" width="2" height="8.9" fill="#4c6dc1"/>
<rect x="1170.73" y="191" width="2" height="4.2" fill="#4c6dc1"/>
<rect x="1173.76" y="134" width="2" height="8.9" fill="#4c6dc1"/>
<rect x="1173.76" y="191" width="2" height="4.2" fill="#4c6dc1"/>
<rect x="1176.79" y="134" width="2" height="8.9" fill="#4c6dc1"/>
<rect x="1176.79" y="191" width="2" height="4.2" fill="#4c6dc1"/>
<rect x="1179.82" y="134" width="2" height="8.9" fill="#4c6dc1"/>
<rect x="1179.82" y="191" width="2" height="4.2" fill="#4c6dc1"/>
<rect x="1182.85" y="134" width="2" height="8.9" fill="#4c6dc1"/>
<rect x="1182.85" y="191" width="2" height="4.2" fill="#4c6dc1"/>
<rect x="1185.88" y="134" width="2" height="8.9" fill="#4c6dc1"/>
<rect x="1185.88" y="191" width="2" height="4.2" fill="#4c6dc1"/>
<rect x="1188.91" y="134" width="2" height="8.9" fill="#4c6dc1"/>
<rect x="1188.91" y="191" width="2" height="4.2" fill="#4c6dc1"/>
<rect x="1191.94" y="134" width="2" height="8.9" fill="#4c6dc1"/>
<rect x="1191.94" y="191" width="2" height="4.2" fill="#4c6dc1"/>
<rect x="1194.97" y="134" width="2" height="8.9" fill="#4c6dc1"/>
<rect x="1194.97" y="191" width="2" height="4.2" fill="#4c6dc1"/>
<rect x="1198.00" y="134" width="2" height="8.9" fill="#4c6dc1"/>
<rect x="1198.00" y="191" width="2" height="4.2" fill="#4c6dc1"/>
<rect x="1201.03" y="134" width="2" height="8.9" fill="#4c6dc1"/>
<rect x="1201.03" y="191" width="2" height="4.2" fill="#4c6dc1"/>
<rect x="1204.06" y="134" width="2" height="8.9" fill="#4c6dc1"/>
<rect x="1204.06" y="191" width="2" height="4.2" fill="#4c6dc1"/>
<rect x="1207.09" y="134" width="2" height="8.9" fill="#4c6dc1"/>
<rect x="1207.09" y="191" width="2" height="4.2" fill="#4c6dc1"/>
<rect x="1210.12" y="134" width="2" height="8.9" fill="#4c6dc1"/>
<rect x="1210.12" y="191" width="2" height="4.2" fill="#4c6dc1"/>
<rect x="1213.15" y="134" width="2" height="8.9" fill="#4c6dc1"/>
<rect x="1213.15" y="191" width="2" height="4.2" fill="#4c6dc1"/>
<rect x="1216.18" y="134" width="2" height="8.9" fill="#4c6dc1"/>
<rect x="1216.18" y="191" width="2" height="4.2" fill="#4c6dc1"/>
<rect x="1219.21" y="134" width="2" height="8.9" fill="#4c6dc1"/>
<rect x="1219.21" y="191" width="2" height="4.2" fill="#4c6dc1"/>
<rect x="1222.24" y="134" width="2" height="8.9" fill="#4c6dc1"/>
<rect x="1222.24" y="191" width="2" height="4.2" fill="#4c6dc1"/>
<rect x="1225.27" y="134" width="2" height="8.9" fill="#4c6dc1"/>
<rect x="1225.27" y="191" width="2" height="4.2" fill="#4c6dc1"/>
<rect x="1228.30" y="134" width="2" height="8.9" fill="#4c6dc1"/>
<rect x="1228.30" y="191" width="2" height="4.2" fill="#4c6dc1"/>
<rect x="1231.33" y="134" width="2" height="8.9" fill="#4c6dc1"/>
<rect x="1231.33" y="191" width="2" height="4.2" fill="#4c6dc1"/>
<rect x="1234.36" y="134" width="2" height="8.9" fill="#4c6dc1"/>
<rect x="1234.36" y="191" width="2" height="4.2" fill="#4c6dc1"/>
<rect x="1237.39" y="134" width="2" height="8.9" fill="#4c6dc1"/>
<rect x="1237.39" y="191" width="2" height="4.2" fill="#4c6dc1"/>
<rect x="1240.42" y="134" width="2" height="8.9" fill="#4c6dc1"/>
<rect x="1240.42" y="191" width="2" height="4.2" fill="#4c6dc1"/>
<rect x="1243.45" y="134" width="2" height="8.9" fill="#4c6dc1"/>
<rect x="1243.45" y="191" width="2" height="4.2" fill="#4c6dc1"/>
<rect x="1246.48" y="134" width="2" height="8.9" fill="#4c6dc1"/>
<rect x="1246.48" y="191" width="2" height="4.2" fill="#4c6dc1"/>
<rect x="1249.51" y="134" width="2" height="8.9" fill="#4c6dc1"/>
<rect x="1249.51" y="191" width="2" height="4.2" fill="#4c6dc1"/>
<rect x="1252.54" y="134" width="2" height="8.9" fill="#4c6dc1"/>
<rect x="1252.54" y="191" width="2" height="4.2" fill="#4c6dc1"/>
<rect x="1255.57" y="134" width="2" height="8.9" fill="#4c6dc1"/>
<rect x="1255.57" y="191" width="2" height="4.2" fill="#4c6dc1"/>
<rect x="1258.60" y="134" width="2" height="8.9" fill="#4c6dc1"/>
<rect x="1258.60" y="191" width="2" height="4.2" fill="#4c6dc1"/>
<rect x="1261.63" y="134" width="2" height="8.9" fill="#4c6dc1"/>
<rect x="1261.63" y="191" width="2" height="4.2" fill="#4c6dc1"/>
<rect x="1264.66" y="134" width="2" height="8.9" fill="#4c6dc1"/>
<rect x="1264.66" y="191" width="2" height="4.2" fill="#4c6dc1"/>
<rect x="1267.69" y="134" width="2" height="8.9" fill="#4c6dc1"/>
<rect x="1267.69" y="191" width="2" height="4.2" fill="#4c6dc1"/>
<rect x="1270.72" y="134" width="2" height="8.9" fill="#4c6dc1"/>
<rect x="1270.72" y="191" width="2" height="4.2" fill="#4c6dc1"/>
<rect x="1273.75" y="134" width="2" height="8.9" fill="#4c6dc1"/>
<rect x="1273.75" y="191" width="2" height="4.2" fill="#4c6dc1"/>
<rect x="1276.78" y="134" width="2" height="8.9" fill="#4c6dc1"/>
<rect x="1276.78" y="191" width="2" height="4.2" fill="#4c6dc1"/>
<rect x="1279.81" y="134" width="2" height="8.9" fill="#4c6dc1"/>
<rect x="1279.81" y="191" width="2" height="4.2" fill="#4c6dc1"/>
<rect x="1282.84" y="134" width="2" height="8.9" fill="#4c6dc1"/>
<rect x="1282.84" y="191" width="2" height="4.2" fill="#4c6dc1"/>
<rect x="1285.87" y="134" width="2" height="8.9" fill="#4c6dc1"/>
<rect x="1285.87" y="191" width="2" height="4.2" fill="#4c6dc1"/>
<rect x="1288.90" y="134" width="2" height="8.9" fill="#4c6dc1"/>
<rect x="1288.90" y="191" width="2" height="4.2" fill="#4c6dc1"/>
<rect x="1291.93" y="134" width="2" height="8.9" fill="#4c6dc1"/>
<rect x="1291.93" y="191" width="2" height="4.2" fill="#4c6dc1"/>
<rect x="1294.96" y="134" width="2" height="8.9" fill="#4c6dc1"/>
<rect x="1294.96" y="191" width="2" height="4.2" fill="#4c6dc1"/>
<rect x="1297.99" y="134" width="2" height="8.9" fill="#4c6dc1"/>
<rect x="1297.99" y="191" width="2" height="4.2" fill="#4c6dc1"/>
<rect x="1301.02" y="134" width="2" height="8.9" fill="#4c6dc1"/>
<rect x="1301.02" y="191" width="2" height="4.2" fill="#4c6dc1"/>
<rect x="1304.05" y="134" width="2" height="8.9" fill="#4c6dc1"/>
<rect x="1304.05" y="191" width="2" height="4.2" fill="#4c6dc1"/>
<rect x="1307.08" y="134" width="2" height="8.9" fill="#4c6dc1"/>
<rect x="1307.08" y="191" width="2" height="4.2" fill="#4c6dc1"/>
<rect x="1310.11" y="134" width="2" height="8.9" fill="#4c6dc1"/>
<rect x="1310.11" y="191" width="2" height="4.2" fill="#4c6dc1"/>
<rect x="1313.14" y="134" width="2" height="8.9" fill="#4c6dc1"/>
<rect x="1313.14" y="191" width="2" height="4.2" fill="#4c6dc1"/>
<rect x="1316.17" y="134" width="2" height="8.9" fill="#4c6dc1"/>
<rect x="1316.17" y="191" width="2" height="4.2" fill="#4c6dc1"/>
<rect x="1319.20" y="134" width="2" height="8.9" fill="#4c6dc1"/>
<rect x="1319.20" y="191" width="2" height="4.2" fill="#4c6dc1"/>
<rect x="1322.23" y="134" width="2" height="8.9" fill="#4c6dc1"/>
<rect x="1322.23" y="191" width="2" height="4.2" fill="#4c6dc1"/>
<rect x="1325.26" y="134" width="2" height="8.9" fill="#4c6dc1"/>
<rect x="1325.26" y="191" width="2" height="4.2" fill="#4c6dc1"/>
<rect x="1328.29" y="134" width="2" height="8.9" fill="#4c6dc1"/>
<rect x="1328.29" y="191" width="2" height="4.2" fill="#4c6dc1"/>
<rect x="1331.32" y="134" width="2" height="8.9" fill="#4c6dc1"/>
<rect x="1331.32" y="191" width="2" height="4.2" fill="#4c6dc1"/>
<rect x="1334.35" y="134" width="2" height="8.9" fill="#4c6dc1"/>
<rect x="1334.35" y="191" width="2" height="4.2" fill="#4c6dc1"/>
<rect x="1337.38" y="134" width="2" height="8.9" fill="#4c6dc1"/>
<rect x="1337.38" y="191" width="2" height="4.2" fill="#4c6dc1"/>
<rect x="1340.41" y="134" width="2" height="8.9" fill="#4c6dc1"/>
<rect x="1340.41" y="191" width="2" height="4.2" fill="#4c6dc1"/>
<rect x="1343.44" y="134" width="2" height="8.9" fill="#4c6dc1"/>
<rect x="1343.44" y="191" width="2" height="4.2" fill="#4c6dc1"/>
<rect x="1346.47" y="134" width="2" height="8.9" fill="#4c6dc1"/>
<rect x="1346.47" y="191" width="2" height="4.2" fill="#4c6dc1"/>
<rect x="1349.50" y="134" width="2" height="8.9" fill="#5b56b3"/>
<rect x="1349.50" y="191" width="2" height="4.2" fill="#5b56b3"/>
<rect x="1352.53" y="134" width="2" height="8.9" fill="#5b56b3"/>
<rect x="1352.53" y="191" width="2" height="4.2" fill="#5b56b3"/>
<rect x="1355.56" y="134" width="2" height="8.9" fill="#5b56b3"/>
<rect x="1355.56" y="191" width="2" height="4.2" fill="#5b56b3"/>
<rect x="1358.59" y="134" width="2" height="8.9" fill="#5b56b3"/>
<rect x="1358.59" y="191" width="2" height="4.2" fill="#5b56b3"/>
<rect x="1361.62" y="134" width="2" height="8.9" fill="#5b56b3"/>
<rect x="1361.62" y="191" width="2" height="4.2" fill="#5b56b3"/>
<rect x="1364.65" y="134" width="2" height="8.9" fill="#5b56b3"/>
<rect x="1364.65" y="191" width="2" height="4.2" fill="#5b56b3"/>
<rect x="1367.68" y="134" width="2" height="8.9" fill="#5b56b3"/>
<rect x="1367.68" y="191" width="2" height="4.2" fill="#5b56b3"/>
<rect x="1370.71" y="134" width="2" height="8.9" fill="#5b56b3"/>
<rect x="1370.71" y="191" width="2" height="4.2" fill="#5b56b3"/>
<rect x="1373.74" y="134" width="2" height="8.9" fill="#5b56b3"/>
<rect x="1373.74" y="191" width="2" height="4.2" fill="#5b56b3"/>
<rect x="1376.77" y="134" width="2" height="8.9" fill="#5b56b3"/>
<rect x="1376.77" y="191" width="2" height="4.2" fill="#5b56b3"/>
<rect x="1379.80" y="134" width="2" height="8.9" fill="#5b56b3"/>
<rect x="1379.80" y="191" width="2" height="4.2" fill="#5b56b3"/>
<rect x="1382.83" y="134" width="2" height="8.9" fill="#5b56b3"/>
<rect x="1382.83" y="191" width="2" height="4.2" fill="#5b56b3"/>
<rect x="1385.86" y="134" width="2" height="8.9" fill="#5b56b3"/>
<rect x="1385.86" y="191" width="2" height="4.2" fill="#5b56b3"/>
<rect x="1388.89" y="134" width="2" height="8.9" fill="#5b56b3"/>
<rect x="1388.89" y="191" width="2" height="4.2" fill="#5b56b3"/>
<rect x="1391.92" y="134" width="2" height="8.9" fill="#5b56b3"/>
<rect x="1391.92" y="191" width="2" height="4.2" fill="#5b56b3"/>
<rect x="1394.95" y="134" width="2" height="8.9" fill="#5b56b3"/>
<rect x="1394.95" y="191" width="2" height="4.2" fill="#5b56b3"/>
<rect x="1397.98" y="134" width="2" height="8.9" fill="#5b56b3"/>
<rect x="1397.98" y="191" width="2" height="4.2" fill="#5b56b3"/>
<rect x="1401.01" y="134" width="2" height="8.9" fill="#5b56b3"/>
<rect x="1401.01" y="191" width="2" height="4.2" fill="#5b56b3"/>
<rect x="1404.04" y="134" width="2" height="8.9" fill="#5b56b3"/>
<rect x="1404.04" y="191" width="2" height="4.2" fill="#5b56b3"/>
<rect x="1407.07" y="134" width="2" height="8.9" fill="#5b56b3"/>
<rect x="1407.07" y="191" width="2" height="4.2" fill="#5b56b3"/>
<rect x="1410.10" y="134" width="2" height="8.9" fill="#5b56b3"/>
<rect x="1410.10" y="191" width="2" height="4.2" fill="#5b56b3"/>
<rect x="1413.13" y="134" width="2" height="8.9" fill="#5b56b3"/>
<rect x="1413.13" y="191" width="2" height="4.2" fill="#5b56b3"/>
<rect x="1416.16" y="134" width="2" height="8.9" fill="#4c6dc1"/>
<rect x="1416.16" y="191" width="2" height="4.2" fill="#4c6dc1"/>
<rect x="1419.19" y="134" width="2" height="8.9" fill="#4c6dc1"/>
<rect x="1419.19" y="191" width="2" height="4.2" fill="#4c6dc1"/>
<rect x="1422.22" y="134" width="2" height="8.9" fill="#4c6dc1"/>
<rect x="1422.22" y="191" width="2" height="4.2" fill="#4c6dc1"/>
<rect x="1425.25" y="134" width="2" height="8.9" fill="#4c6dc1"/>
<rect x="1425.25" y="191" width="2" height="4.2" fill="#4c6dc1"/>
<rect x="1428.28" y="134" width="2" height="8.9" fill="#4c6dc1"/>
<rect x="1428.28" y="191" width="2" height="4.2" fill="#4c6dc1"/>
<rect x="1431.31" y="134" width="2" height="8.9" fill="#4c6dc1"/>
<rect x="1431.31" y="191" width="2" height="4.2" fill="#4c6dc1"/>
<rect x="1434.34" y="134" width="2" height="8.9" fill="#4c6dc1"/>
<rect x="1434.34" y="191" width="2" height="4.2" fill="#4c6dc1"/>
<rect x="1437.37" y="134" width="2" height="8.9" fill="#4c6dc1"/>
<rect x="1437.37" y="191" width="2" height="4.2" fill="#4c6dc1"/>
<rect x="1440.40" y="134" width="2" height="8.9" fill="#4c6dc1"/>
<rect x="1440.40" y="191" width="2" height="4.2" fill="#4c6dc1"/>
<rect x="1443.43" y="134" width="2" height="8.9" fill="#4c6dc1"/>
<rect x="1443.43" y="191" width="2" height="4.2" fill="#4c6dc1"/>
<rect x="1446.46" y="134" width="2" height="8.9" fill="#4c6dc1"/>
<rect x="1446.46" y="191" width="2" height="4.2" fill="#4c6dc1"/>
<rect x="1449.49" y="134" width="2" height="8.9" fill="#4c6dc1"/>
<rect x="1449.49" y="191" width="2" height="4.2" fill="#4c6dc1"/>
<rect x="1452.52" y="134" width="2" height="8.9" fill="#4c6dc1"/>
<rect x="1452.52" y="191" width="2" height="4.2" fill="#4c6dc1"/>
<rect x="1455.55" y="134" width="2" height="8.9" fill="#4c6dc1"/>
<rect x="1455.55" y="191" width="2" height="4.2" fill="#4c6dc1"/>
<rect x="1458.58" y="134" width="2" height="8.9" fill="#4c6dc1"/>
<rect x="1458.58" y="191" width="2" height="4.2" fill="#4c6dc1"/>
<rect x="1461.61" y="134" width="2" height="8.9" fill="#4c6dc1"/>
<rect x="1461.61" y="191" width="2" height="4.2" fill="#4c6dc1"/>
<rect x="1464.64" y="134" width="2" height="8.9" fill="#5a58b5"/>
<rect x="1464.64" y="191" width="2" height="4.2" fill="#5a58b5"/>
<rect x="1467.67" y="134" width="2" height="8.9" fill="#5a58b5"/>
<rect x="1467.67" y="191" width="2" height="4.2" fill="#5a58b5"/>
<rect x="1470.70" y="134" width="2" height="8.9" fill="#5a58b5"/>
<rect x="1470.70" y="191" width="2" height="4.2" fill="#5a58b5"/>
<rect x="1473.73" y="134" width="2" height="8.9" fill="#5a58b5"/>
<rect x="1473.73" y="191" width="2" height="4.2" fill="#5a58b5"/>
<rect x="1476.76" y="134" width="2" height="8.9" fill="#5a58b5"/>
<rect x="1476.76" y="191" width="2" height="4.2" fill="#5a58b5"/>
<rect x="1479.79" y="134" width="2" height="8.9" fill="#5a58b5"/>
<rect x="1479.79" y="191" width="2" height="4.2" fill="#5a58b5"/>
<rect x="1482.82" y="134" width="2" height="8.9" fill="#5a58b5"/>
<rect x="1482.82" y="191" width="2" height="4.2" fill="#5a58b5"/>
<rect x="1485.85" y="134" width="2" height="8.9" fill="#5a58b5"/>
<rect x="1485.85" y="191" width="2" height="4.2" fill="#5a58b5"/>
<rect x="1488.88" y="134" width="2" height="8.9" fill="#5a58b5"/>
<rect x="1488.88" y="191" width="2" height="4.2" fill="#5a58b5"/>
<rect x="1491.91" y="134" width="2" height="8.9" fill="#4b6fc2"/>
<rect x="1491.91" y="191" width="2" height="4.2" fill="#4b6fc2"/>
<rect x="1494.94" y="134" width="2" height="8.9" fill="#4b6fc2"/>
<rect x="1494.94" y="191" width="2" height="4.2" fill="#4b6fc2"/>
<rect x="1497.97" y="134" width="2" height="8.9" fill="#4b6fc2"/>
<rect x="1497.97" y="191" width="2" height="4.2" fill="#4b6fc2"/>
<rect x="1501.00" y="134" width="2" height="8.9" fill="#4b6fc2"/>
<rect x="1501.00" y="191" width="2" height="4.2" fill="#4b6fc2"/>
<rect x="1504.03" y="134" width="2" height="8.9" fill="#4b6fc2"/>
<rect x="1504.03" y="191" width="2" height="4.2" fill="#4b6fc2"/>
<rect x="1507.06" y="134" width="2" height="8.9" fill="#4b6fc2"/>
<rect x="1507.06" y="191" width="2" height="4.2" fill="#4b6fc2"/>
<rect x="1510.09" y="134" width="2" height="8.9" fill="#4b6fc2"/>
<rect x="1510.09" y="191" width="2" height="4.2" fill="#4b6fc2"/>
<rect x="1513.12" y="134" width="2" height="8.9" fill="#4b6fc2"/>
<rect x="1513.12" y="191" width="2" height="4.2" fill="#4b6fc2"/>
<rect x="1516.15" y="134" width="2" height="8.9" fill="#4b6fc2"/>
<rect x="1516.15" y="191" width="2" height="4.2" fill="#4b6fc2"/>
<rect x="1519.18" y="134" width="2" height="8.9" fill="#4b6fc2"/>
<rect x="1519.18" y="191" width="2" height="4.2" fill="#4b6fc2"/>
<rect x="1522.21" y="134" width="2" height="8.9" fill="#4b6fc2"/>
<rect x="1522.21" y="191" width="2" height="4.2" fill="#4b6fc2"/>
<rect x="1525.24" y="134" width="2" height="8.9" fill="#4b6fc2"/>
<rect x="1525.24" y="191" width="2" height="4.2" fill="#4b6fc2"/>
<rect x="1528.27" y="134" width="2" height="8.9" fill="#4b6fc2"/>
<rect x="1528.27" y="191" width="2" height="4.2" fill="#4b6fc2"/>
<rect x="1531.30" y="134" width="2" height="8.9" fill="#4b6fc2"/>
<rect x="1531.30" y="191" width="2" height="4.2" fill="#4b6fc2"/>
<rect x="1534.33" y="134" width="2" height="8.9" fill="#4b6fc2"/>
<rect x="1534.33" y="191" width="2" height="4.2" fill="#4b6fc2"/>
<rect x="1537.36" y="134" width="2" height="8.9" fill="#4b6fc2"/>
<rect x="1537.36" y="191" width="2" height="4.2" fill="#4b6fc2"/>
<rect x="1540.39" y="134" width="2" height="8.9" fill="#4b6fc2"/>
<rect x="1540.39" y="191" width="2" height="4.2" fill="#4b6fc2"/>
<rect x="1543.42" y="134" width="2" height="8.9" fill="#4b6fc2"/>
<rect x="1543.42" y="191" width="2" height="4.2" fill="#4b6fc2"/>
<rect x="1546.45" y="134" width="2" height="8.9" fill="#4b6fc2"/>
<rect x="1546.45" y="191" width="2" height="4.2" fill="#4b6fc2"/>
<rect x="1549.48" y="134" width="2" height="8.9" fill="#4b6fc2"/>
<rect x="1549.48" y="191" width="2" height="4.2" fill="#4b6fc2"/>
<rect x="1552.51" y="134" width="2" height="8.9" fill="#4b6fc2"/>
<rect x="1552.51" y="191" width="2" height="4.2" fill="#4b6fc2"/>
<rect x="1555.54" y="134" width="2" height="8.9" fill="#5460ba"/>
<rect x="1555.54" y="191" width="2" height="4.2" fill="#5460ba"/>
<rect x="1558.57" y="134" width="2" height="8.9" fill="#5460ba"/>
<rect x="1558.57" y="191" width="2" height="4.2" fill="#5460ba"/>
<rect x="1561.60" y="134" width="2" height="8.9" fill="#5460ba"/>
<rect x="1561.60" y="191" width="2" height="4.2" fill="#5460ba"/>
<rect x="1564.63" y="134" width="2" height="8.9" fill="#5460ba"/>
<rect x="1564.63" y="191" width="2" height="4.2" fill="#5460ba"/>
<rect x="1567.66" y="134" width="2" height="8.9" fill="#5460ba"/>
<rect x="1567.66" y="191" width="2" height="4.2" fill="#5460ba"/>
<rect x="1570.69" y="134" width="2" height="8.9" fill="#5460ba"/>
<rect x="1570.69" y="191" width="2" height="4.2" fill="#5460ba"/>
<rect x="1573.72" y="134" width="2" height="8.9" fill="#5460ba"/>
<rect x="1573.72" y="191" width="2" height="4.2" fill="#5460ba"/>
<rect x="1576.75" y="134" width="2" height="8.9" fill="#5460ba"/>
<rect x="1576.75" y="191" width="2" height="4.2" fill="#5460ba"/>
<rect x="1579.78" y="134" width="2" height="8.9" fill="#5460ba"/>
<rect x="1579.78" y="191" width="2" height="4.2" fill="#5460ba"/>
<rect x="1582.81" y="134" width="2" height="8.9" fill="#5460ba"/>
<rect x="1582.81" y="191" width="2" height="4.2" fill="#5460ba"/>
<rect x="1585.84" y="134" width="2" height="8.9" fill="#5460ba"/>
<rect x="1585.84" y="191" width="2" height="4.2" fill="#5460ba"/>
<rect x="940.50" y="143.9" width="2" height="3.9" fill="#5e4fb0"/>
<rect x="940.50" y="158" width="2" height="4" fill="#5e4fb0"/>
<rect x="943.53" y="143.9" width="2" height="3.9" fill="#5e4fb0"/>
<rect x="943.53" y="158" width="2" height="4" fill="#5e4fb0"/>
<rect x="946.56" y="143.9" width="2" height="3.9" fill="#5e4fb0"/>
<rect x="946.56" y="158" width="2" height="4" fill="#5e4fb0"/>
<rect x="949.59" y="143.9" width="2" height="3.9" fill="#5e4fb0"/>
<rect x="949.59" y="158" width="2" height="4" fill="#5e4fb0"/>
<rect x="1061.70" y="143.9" width="2" height="3.9" fill="#5e4fb0"/>
<rect x="1061.70" y="158" width="2" height="4" fill="#5e4fb0"/>
<rect x="1064.73" y="143.9" width="2" height="3.9" fill="#5e4fb0"/>
<rect x="1064.73" y="158" width="2" height="4" fill="#5e4fb0"/>
<rect x="1067.76" y="143.9" width="2" height="3.9" fill="#5e4fb0"/>
<rect x="1067.76" y="158" width="2" height="4" fill="#5e4fb0"/>
<rect x="1070.79" y="143.9" width="2" height="3.9" fill="#5e4fb0"/>
<rect x="1070.79" y="158" width="2" height="4" fill="#5e4fb0"/>
<rect x="1086.00" y="143.9" width="2" height="3.9" fill="#5e4fb0"/>
<rect x="1086.00" y="158" width="2" height="4" fill="#5e4fb0"/>
<rect x="1089.03" y="143.9" width="2" height="3.9" fill="#5e4fb0"/>
<rect x="1089.03" y="158" width="2" height="4" fill="#5e4fb0"/>
<rect x="1092.06" y="143.9" width="2" height="3.9" fill="#5e4fb0"/>
<rect x="1092.06" y="158" width="2" height="4" fill="#5e4fb0"/>
<rect x="1095.09" y="143.9" width="2" height="3.9" fill="#5e4fb0"/>
<rect x="1095.09" y="158" width="2" height="4" fill="#5e4fb0"/>
<rect x="1195.00" y="143.9" width="2" height="3.9" fill="#5e4fb0"/>
<rect x="1195.00" y="158" width="2" height="4" fill="#5e4fb0"/>
<rect x="1198.03" y="143.9" width="2" height="3.9" fill="#5e4fb0"/>
<rect x="1198.03" y="158" width="2" height="4" fill="#5e4fb0"/>
<rect x="1201.06" y="143.9" width="2" height="3.9" fill="#5e4fb0"/>
<rect x="1201.06" y="158" width="2" height="4" fill="#5e4fb0"/>
<rect x="1204.09" y="143.9" width="2" height="3.9" fill="#5e4fb0"/>
<rect x="1204.09" y="158" width="2" height="4" fill="#5e4fb0"/>
<rect x="1267.90" y="143.9" width="2" height="3.9" fill="#5e4fb0"/>
<rect x="1267.90" y="158" width="2" height="4" fill="#5e4fb0"/>
<rect x="1270.93" y="143.9" width="2" height="3.9" fill="#5e4fb0"/>
<rect x="1270.93" y="158" width="2" height="4" fill="#5e4fb0"/>
<rect x="1273.96" y="143.9" width="2" height="3.9" fill="#5e4fb0"/>
<rect x="1273.96" y="158" width="2" height="4" fill="#5e4fb0"/>
<rect x="1276.99" y="143.9" width="2" height="3.9" fill="#5e4fb0"/>
<rect x="1276.99" y="158" width="2" height="4" fill="#5e4fb0"/>
<rect x="1304.50" y="143.9" width="2" height="3.9" fill="#5e4fb0"/>
<rect x="1304.50" y="158" width="2" height="4" fill="#5e4fb0"/>
<rect x="1307.53" y="143.9" width="2" height="3.9" fill="#5e4fb0"/>
<rect x="1307.53" y="158" width="2" height="4" fill="#5e4fb0"/>
<rect x="1310.56" y="143.9" width="2" height="3.9" fill="#5e4fb0"/>
<rect x="1310.56" y="158" width="2" height="4" fill="#5e4fb0"/>
<rect x="1313.59" y="143.9" width="2" height="3.9" fill="#5e4fb0"/>
<rect x="1313.59" y="158" width="2" height="4" fill="#5e4fb0"/>
<rect x="1328.70" y="143.9" width="2" height="3.9" fill="#5e4fb0"/>
<rect x="1328.70" y="158" width="2" height="4" fill="#5e4fb0"/>
<rect x="1331.73" y="143.9" width="2" height="3.9" fill="#5e4fb0"/>
<rect x="1331.73" y="158" width="2" height="4" fill="#5e4fb0"/>
<rect x="1334.76" y="143.9" width="2" height="3.9" fill="#5e4fb0"/>
<rect x="1334.76" y="158" width="2" height="4" fill="#5e4fb0"/>
<rect x="1337.79" y="143.9" width="2" height="3.9" fill="#5e4fb0"/>
<rect x="1337.79" y="158" width="2" height="4" fill="#5e4fb0"/>
<rect x="1340.82" y="143.9" width="2" height="3.9" fill="#5e4fb0"/>
<rect x="1340.82" y="158" width="2" height="4" fill="#5e4fb0"/>
<rect x="1343.85" y="143.9" width="2" height="3.9" fill="#5e4fb0"/>
<rect x="1343.85" y="158" width="2" height="4" fill="#5e4fb0"/>
<rect x="1346.88" y="143.9" width="2" height="3.9" fill="#5e4fb0"/>
<rect x="1346.88" y="158" width="2" height="4" fill="#5e4fb0"/>
<rect x="1349.91" y="143.9" width="2" height="3.9" fill="#5e4fb0"/>
<rect x="1349.91" y="158" width="2" height="4" fill="#5e4fb0"/>
<rect x="1486.00" y="143.9" width="2" height="3.9" fill="#5e4fb0"/>
<rect x="1486.00" y="158" width="2" height="4" fill="#5e4fb0"/>
<rect x="1489.03" y="143.9" width="2" height="3.9" fill="#5e4fb0"/>
<rect x="1489.03" y="158" width="2" height="4" fill="#5e4fb0"/>
<rect x="1492.06" y="143.9" width="2" height="3.9" fill="#5e4fb0"/>
<rect x="1492.06" y="158" width="2" height="4" fill="#5e4fb0"/>
<rect x="1495.09" y="143.9" width="2" height="3.9" fill="#5e4fb0"/>
<rect x="1495.09" y="158" width="2" height="4" fill="#5e4fb0"/>
<text x="857" y="141.4" font-size="11" fill="#ccccdc" text-anchor="end" font-weight="400" >1 KiB</text>
<text x="857" y="152.0" font-size="11" fill="#ccccdc" text-anchor="end" font-weight="400" >256 B</text>
<text x="857" y="160.9" font-size="11" fill="#ccccdc" text-anchor="end" font-weight="400" >64 B</text>
<text x="857" y="171.0" font-size="11" fill="#ccccdc" text-anchor="end" font-weight="400" >16 B</text>
<text x="857" y="179.9" font-size="11" fill="#ccccdc" text-anchor="end" font-weight="400" >4 B</text>
<text x="857" y="189.70000000000002" font-size="11" fill="#ccccdc" text-anchor="end" font-weight="400" >1 B</text>
<text x="857" y="198.60000000000002" font-size="11" fill="#ccccdc" text-anchor="end" font-weight="400" >0 B</text>
<clipPath id="clipR"><rect x="808" y="0" width="790" height="814"/></clipPath>
<g clip-path="url(#clipR)">
<text x="924.4" y="213" font-size="12" fill="#ccccdc" text-anchor="middle" font-weight="400" >20:30</text>
<text x="985.1" y="213" font-size="12" fill="#ccccdc" text-anchor="middle" font-weight="400" >20:35</text>
<text x="1045.8" y="213" font-size="12" fill="#ccccdc" text-anchor="middle" font-weight="400" >20:40</text>
<text x="1106.5" y="213" font-size="12" fill="#ccccdc" text-anchor="middle" font-weight="400" >20:45</text>
<text x="1167.2" y="213" font-size="12" fill="#ccccdc" text-anchor="middle" font-weight="400" >20:50</text>
<text x="1227.9" y="213" font-size="12" fill="#ccccdc" text-anchor="middle" font-weight="400" >20:55</text>
<text x="1288.6" y="213" font-size="12" fill="#ccccdc" text-anchor="middle" font-weight="400" >21:00</text>
<text x="1349.3" y="213" font-size="12" fill="#ccccdc" text-anchor="middle" font-weight="400" >21:05</text>
<text x="1410.0" y="213" font-size="12" fill="#ccccdc" text-anchor="middle" font-weight="400" >21:10</text>
<text x="1470.7" y="213" font-size="12" fill="#ccccdc" text-anchor="middle" font-weight="400" >21:15</text>
<text x="1531.4" y="213" font-size="12" fill="#ccccdc" text-anchor="middle" font-weight="400" >21:20</text>
<text x="1592.1" y="213" font-size="12" fill="#ccccdc" text-anchor="middle" font-weight="400" >21:25</text>
</g>
<rect x="837" y="224.1" width="269" height="7.8" rx="2" fill="url(#spec)"/>
<text x="837" y="244" font-size="10.6" fill="#8e8e99" text-anchor="start" font-weight="400" >0.00417 req/s</text>
<text x="1106" y="244" font-size="10.6" fill="#8e8e99" text-anchor="end" font-weight="400" >3.91 req/s</text>
<text x="6.8" y="292" font-size="13.4" fill="#ccccdc" text-anchor="start" font-weight="400" stroke="#ccccdc" stroke-width="0.3">Request Latency</text>
<line x1="56" y1="316.1" x2="785.5" y2="316.1" stroke="rgba(204,204,220,0.10)"/>
<line x1="56" y1="334.2" x2="785.5" y2="334.2" stroke="rgba(204,204,220,0.10)"/>
<line x1="56" y1="352.2" x2="785.5" y2="352.2" stroke="rgba(204,204,220,0.10)"/>
<line x1="56" y1="370.2" x2="785.5" y2="370.2" stroke="rgba(204,204,220,0.10)"/>
<line x1="56" y1="388.3" x2="785.5" y2="388.3" stroke="rgba(204,204,220,0.10)"/>
<line x1="56" y1="406.4" x2="785.5" y2="406.4" stroke="rgba(204,204,220,0.10)"/>
<line x1="56" y1="424.4" x2="785.5" y2="424.4" stroke="rgba(204,204,220,0.10)"/>
<line x1="56" y1="442.5" x2="785.5" y2="442.5" stroke="rgba(204,204,220,0.10)"/>
<line x1="56" y1="460.5" x2="785.5" y2="460.5" stroke="rgba(204,204,220,0.10)"/>
<line x1="115.2" y1="316" x2="115.2" y2="460.5" stroke="rgba(204,204,220,0.10)"/>
<line x1="176.0" y1="316" x2="176.0" y2="460.5" stroke="rgba(204,204,220,0.10)"/>
<line x1="236.8" y1="316" x2="236.8" y2="460.5" stroke="rgba(204,204,220,0.10)"/>
<line x1="297.7" y1="316" x2="297.7" y2="460.5" stroke="rgba(204,204,220,0.10)"/>
<line x1="358.5" y1="316" x2="358.5" y2="460.5" stroke="rgba(204,204,220,0.10)"/>
<line x1="419.3" y1="316" x2="419.3" y2="460.5" stroke="rgba(204,204,220,0.10)"/>
<line x1="480.1" y1="316" x2="480.1" y2="460.5" stroke="rgba(204,204,220,0.10)"/>
<line x1="540.9" y1="316" x2="540.9" y2="460.5" stroke="rgba(204,204,220,0.10)"/>
<line x1="601.8" y1="316" x2="601.8" y2="460.5" stroke="rgba(204,204,220,0.10)"/>
<line x1="662.6" y1="316" x2="662.6" y2="460.5" stroke="rgba(204,204,220,0.10)"/>
<line x1="723.4" y1="316" x2="723.4" y2="460.5" stroke="rgba(204,204,220,0.10)"/>
<line x1="784.2" y1="316" x2="784.2" y2="460.5" stroke="rgba(204,204,220,0.10)"/>
<text x="51" y="319.3" font-size="12" fill="#ccccdc" text-anchor="end" font-weight="400" >4 s</text>
<text x="51" y="355.4" font-size="12" fill="#ccccdc" text-anchor="end" font-weight="400" >1 s</text>
<text x="51" y="391.5" font-size="12" fill="#ccccdc" text-anchor="end" font-weight="400" >250 ms</text>
<text x="51" y="427.59999999999997" font-size="12" fill="#ccccdc" text-anchor="end" font-weight="400" >62.5 ms</text>
<text x="51" y="463.7" font-size="12" fill="#ccccdc" text-anchor="end" font-weight="400" >15.6 ms</text>
<g clip-path="url(#clipL)">
<text x="115.2" y="477.4" font-size="12" fill="#ccccdc" text-anchor="middle" font-weight="400" >20:30</text>
<text x="176.0" y="477.4" font-size="12" fill="#ccccdc" text-anchor="middle" font-weight="400" >20:35</text>
<text x="236.8" y="477.4" font-size="12" fill="#ccccdc" text-anchor="middle" font-weight="400" >20:40</text>
<text x="297.7" y="477.4" font-size="12" fill="#ccccdc" text-anchor="middle" font-weight="400" >20:45</text>
<text x="358.5" y="477.4" font-size="12" fill="#ccccdc" text-anchor="middle" font-weight="400" >20:50</text>
<text x="419.3" y="477.4" font-size="12" fill="#ccccdc" text-anchor="middle" font-weight="400" >20:55</text>
<text x="480.1" y="477.4" font-size="12" fill="#ccccdc" text-anchor="middle" font-weight="400" >21:00</text>
<text x="540.9" y="477.4" font-size="12" fill="#ccccdc" text-anchor="middle" font-weight="400" >21:05</text>
<text x="601.8" y="477.4" font-size="12" fill="#ccccdc" text-anchor="middle" font-weight="400" >21:10</text>
<text x="662.6" y="477.4" font-size="12" fill="#ccccdc" text-anchor="middle" font-weight="400" >21:15</text>
<text x="723.4" y="477.4" font-size="12" fill="#ccccdc" text-anchor="middle" font-weight="400" >21:20</text>
<text x="784.2" y="477.4" font-size="12" fill="#ccccdc" text-anchor="middle" font-weight="400" >21:25</text>
</g>
<polygon points="56.1,460.5 56.1,375.9 92.2,375.9 97.3,379.0 102.5,379.0 107.7,375.9 129.0,375.9 134.1,374.5 139.3,374.5 144.5,375.9 165.1,375.9 170.2,374.5 190.9,374.5 196.0,373.5 213.2,373.5 218.4,374.9 251.1,374.9 256.2,373.5 261.4,374.2 266.6,376.3 285.5,376.3 290.6,378.0 295.8,378.0 302.7,375.9 311.3,375.9 314.7,374.9 337.1,374.9 343.9,373.5 359.4,372.8 371.5,372.8 376.6,374.5 400.0,375.9 413.8,374.6 420.6,375.9 427.5,374.9 458.5,374.9 465.4,373.5 475.7,372.8 492.9,372.8 499.8,373.5 510.1,374.9 544.5,374.9 547.9,375.9 565.1,375.9 572.0,379.0 589.2,379.0 596.1,376.3 603.0,376.3 608.1,373.2 615.0,373.2 620.2,373.9 640.8,373.9 646.0,372.8 661.4,373.9 666.6,372.2 675.2,372.2 682.1,374.9 689.0,374.9 699.3,373.9 704.4,325.0 711.3,325.0 716.5,321.2 723.4,322.3 730.2,319.2 736.4,319.2 742.3,372.8 759.5,372.8 766.4,374.9 773.2,374.9 778.4,373.9 778.4,460.5" fill="#fade2a" fill-opacity="0.1"/><polyline points="56.1,375.9 92.2,375.9 97.3,379.0 102.5,379.0 107.7,375.9 129.0,375.9 134.1,374.5 139.3,374.5 144.5,375.9 165.1,375.9 170.2,374.5 190.9,374.5 196.0,373.5 213.2,373.5 218.4,374.9 251.1,374.9 256.2,373.5 261.4,374.2 266.6,376.3 285.5,376.3 290.6,378.0 295.8,378.0 302.7,375.9 311.3,375.9 314.7,374.9 337.1,374.9 343.9,373.5 359.4,372.8 371.5,372.8 376.6,374.5 400.0,375.9 413.8,374.6 420.6,375.9 427.5,374.9 458.5,374.9 465.4,373.5 475.7,372.8 492.9,372.8 499.8,373.5 510.1,374.9 544.5,374.9 547.9,375.9 565.1,375.9 572.0,379.0 589.2,379.0 596.1,376.3 603.0,376.3 608.1,373.2 615.0,373.2 620.2,373.9 640.8,373.9 646.0,372.8 661.4,373.9 666.6,372.2 675.2,372.2 682.1,374.9 689.0,374.9 699.3,373.9 704.4,325.0 711.3,325.0 716.5,321.2 723.4,322.3 730.2,319.2 736.4,319.2 742.3,372.8 759.5,372.8 766.4,374.9 773.2,374.9 778.4,373.9" fill="none" stroke="#fade2a" stroke-width="1" stroke-linejoin="round"/>
<polygon points="56.1,460.5 56.1,439.9 92.2,439.9 97.3,438.9 103.2,438.9 108.3,439.9 149.6,439.9 156.5,437.8 161.7,437.8 168.5,438.9 178.8,438.9 182.3,437.8 202.9,437.8 208.1,438.9 213.2,438.9 218.4,437.8 251.1,437.8 256.2,436.8 263.1,436.8 268.3,437.8 275.2,437.8 280.3,438.9 295.8,438.9 302.7,437.8 309.5,437.8 314.7,438.9 335.3,438.9 340.5,437.8 347.4,437.8 352.5,438.9 357.7,438.9 364.6,436.8 371.5,436.8 378.3,437.8 383.5,437.8 388.7,439.9 400.0,439.9 406.9,439.9 413.8,437.9 456.8,437.9 461.9,438.9 523.8,438.9 529.0,439.9 534.2,438.9 541.0,439.9 565.1,439.9 572.0,438.9 589.2,438.9 596.1,436.8 603.0,436.8 609.8,438.9 615.0,438.9 620.2,437.9 640.8,437.9 647.7,438.9 654.6,436.8 663.2,436.8 670.0,448.9 675.2,448.9 681.4,439.9 689.0,439.9 694.1,438.9 699.3,438.9 706.2,442.7 713.0,442.7 721.6,441.6 730.2,448.2 735.4,448.9 742.3,439.9 749.2,439.9 754.3,436.8 761.2,436.8 766.4,437.9 778.4,437.9 778.4,460.5" fill="#73bf69" fill-opacity="0.1"/><polyline points="56.1,439.9 92.2,439.9 97.3,438.9 103.2,438.9 108.3,439.9 149.6,439.9 156.5,437.8 161.7,437.8 168.5,438.9 178.8,438.9 182.3,437.8 202.9,437.8 208.1,438.9 213.2,438.9 218.4,437.8 251.1,437.8 256.2,436.8 263.1,436.8 268.3,437.8 275.2,437.8 280.3,438.9 295.8,438.9 302.7,437.8 309.5,437.8 314.7,438.9 335.3,438.9 340.5,437.8 347.4,437.8 352.5,438.9 357.7,438.9 364.6,436.8 371.5,436.8 378.3,437.8 383.5,437.8 388.7,439.9 400.0,439.9 406.9,439.9 413.8,437.9 456.8,437.9 461.9,438.9 523.8,438.9 529.0,439.9 534.2,438.9 541.0,439.9 565.1,439.9 572.0,438.9 589.2,438.9 596.1,436.8 603.0,436.8 609.8,438.9 615.0,438.9 620.2,437.9 640.8,437.9 647.7,438.9 654.6,436.8 663.2,436.8 670.0,448.9 675.2,448.9 681.4,439.9 689.0,439.9 694.1,438.9 699.3,438.9 706.2,442.7 713.0,442.7 721.6,441.6 730.2,448.2 735.4,448.9 742.3,439.9 749.2,439.9 754.3,436.8 761.2,436.8 766.4,437.9 778.4,437.9" fill="none" stroke="#73bf69" stroke-width="1" stroke-linejoin="round"/>
<line x1="56" y1="352.2" x2="785" y2="352.2" stroke="#e2475b" stroke-width="2" stroke-dasharray="10,8"/>
<rect x="10" y="494" width="13.5" height="4" rx="2" fill="#73bf69"/>
<text x="29.6" y="499.6" font-size="11.63" fill="#ccccdc" text-anchor="start" font-weight="400" >histogram_quantile(0.50, sum(rate(django_http_requests_latency_seconds_by_view_method_bucket{app=&quot;django&quot;}[5m])) by (le))</text>
<rect x="10" y="515" width="13.5" height="4" rx="2" fill="#fade2a"/>
<text x="29.6" y="520.4" font-size="11.8" fill="#ccccdc" text-anchor="start" font-weight="400" >95 quantile</text>
<line x1="791.5" y1="480" x2="791.5" y2="528" stroke="rgba(204,204,220,0.08)"/>
<text x="815" y="292" font-size="13.4" fill="#ccccdc" text-anchor="start" font-weight="400" stroke="#ccccdc" stroke-width="0.3">Response Status</text>
<line x1="876.4" y1="341.5" x2="1392.2" y2="341.5" stroke="rgba(204,204,220,0.10)"/>
<text x="871.5" y="344.3" font-size="12" fill="#ccccdc" text-anchor="end" font-weight="400" >6.00 req/s</text>
<line x1="876.4" y1="369.6" x2="1392.2" y2="369.6" stroke="rgba(204,204,220,0.10)"/>
<text x="871.5" y="372.38" font-size="12" fill="#ccccdc" text-anchor="end" font-weight="400" >5.00 req/s</text>
<line x1="876.4" y1="397.7" x2="1392.2" y2="397.7" stroke="rgba(204,204,220,0.10)"/>
<text x="871.5" y="400.46" font-size="12" fill="#ccccdc" text-anchor="end" font-weight="400" >4.00 req/s</text>
<line x1="876.4" y1="425.7" x2="1392.2" y2="425.7" stroke="rgba(204,204,220,0.10)"/>
<text x="871.5" y="428.54" font-size="12" fill="#ccccdc" text-anchor="end" font-weight="400" >3.00 req/s</text>
<line x1="876.4" y1="453.8" x2="1392.2" y2="453.8" stroke="rgba(204,204,220,0.10)"/>
<text x="871.5" y="456.62" font-size="12" fill="#ccccdc" text-anchor="end" font-weight="400" >2.00 req/s</text>
<line x1="876.4" y1="481.9" x2="1392.2" y2="481.9" stroke="rgba(204,204,220,0.10)"/>
<text x="871.5" y="484.7" font-size="12" fill="#ccccdc" text-anchor="end" font-weight="400" >1.00 req/s</text>
<line x1="876.4" y1="510.0" x2="1392.2" y2="510.0" stroke="rgba(204,204,220,0.10)"/>
<text x="871.5" y="512.78" font-size="12" fill="#ccccdc" text-anchor="end" font-weight="400" >0.00 req/s</text>
<line x1="918.7" y1="315.7" x2="918.7" y2="510" stroke="rgba(204,204,220,0.10)"/>
<text x="918.7" y="527.4" font-size="12" fill="#ccccdc" text-anchor="middle" font-weight="400" >20:30</text>
<line x1="1004.7" y1="315.7" x2="1004.7" y2="510" stroke="rgba(204,204,220,0.10)"/>
<text x="1004.7" y="527.4" font-size="12" fill="#ccccdc" text-anchor="middle" font-weight="400" >20:40</text>
<line x1="1090.7" y1="315.7" x2="1090.7" y2="510" stroke="rgba(204,204,220,0.10)"/>
<text x="1090.7" y="527.4" font-size="12" fill="#ccccdc" text-anchor="middle" font-weight="400" >20:50</text>
<line x1="1176.7" y1="315.7" x2="1176.7" y2="510" stroke="rgba(204,204,220,0.10)"/>
<text x="1176.7" y="527.4" font-size="12" fill="#ccccdc" text-anchor="middle" font-weight="400" >21:00</text>
<line x1="1262.7" y1="315.7" x2="1262.7" y2="510" stroke="rgba(204,204,220,0.10)"/>
<text x="1262.7" y="527.4" font-size="12" fill="#ccccdc" text-anchor="middle" font-weight="400" >21:10</text>
<line x1="1348.7" y1="315.7" x2="1348.7" y2="510" stroke="rgba(204,204,220,0.10)"/>
<text x="1348.7" y="527.4" font-size="12" fill="#ccccdc" text-anchor="middle" font-weight="400" >21:20</text>
<polygon points="876.1,511.4 876.1,427.4 901.2,427.4 905.6,481.5 909.3,481.5 914.2,427.4 927.3,427.4 931.4,372.3 935.1,372.3 940.5,343.6 944.2,343.6 948.2,394.5 952.3,394.5 957.2,340.6 961.4,340.6 965.8,392.3 970.3,392.3 974.4,397.4 978.1,397.4 983.0,340.6 987.5,340.6 991.7,424.4 1013.3,424.4 1017.5,454.4 1021.1,454.4 1026.5,424.4 1030.5,424.4 1034.7,372.3 1043.3,372.3 1046.9,366.2 1051.4,394.5 1056.3,394.5 1060.5,339.4 1064.6,339.4 1069.1,393.2 1072.8,393.2 1077.7,421.3 1081.8,421.3 1086.3,423.2 1090.4,423.2 1094.9,483.4 1099.3,483.4 1103.5,423.2 1107.2,423.2 1112.1,371.6 1116.5,371.6 1120.7,340.6 1124.9,340.6 1129.3,369.2 1133.5,363.7 1137.7,423.2 1150.7,423.2 1155.6,421.3 1159.3,421.3 1163.7,368.4 1167.4,368.4 1172.3,335.5 1176.5,335.5 1180.7,390.5 1185.1,390.5 1190.0,368.4 1193.2,368.4 1198.2,392.3 1202.3,392.3 1206.5,370.6 1219.5,370.6 1223.7,425.4 1236.2,425.4 1241.7,480.5 1253.9,480.5 1258.9,478.5 1262.5,478.5 1266.7,422.2 1270.4,422.2 1275.3,420.3 1288.3,420.3 1292.0,422.2 1296.2,422.2 1301.9,509.2 1304.8,509.2 1309.2,485.4 1314.2,485.4 1318.6,455.2 1322.0,455.2 1327.7,422.2 1331.4,422.2 1335.5,336.5 1339.5,336.5 1344.1,367.4 1348.6,361.8 1352.7,391.3 1357.2,391.3 1361.3,422.2 1365.3,422.2 1370.7,483.4 1374.4,483.4 1378.5,421.3 1382.5,421.3 1387.4,396.9 1387.4,511.4" fill="#73bf69" fill-opacity="0.1"/><polyline points="876.1,427.4 901.2,427.4 905.6,481.5 909.3,481.5 914.2,427.4 927.3,427.4 931.4,372.3 935.1,372.3 940.5,343.6 944.2,343.6 948.2,394.5 952.3,394.5 957.2,340.6 961.4,340.6 965.8,392.3 970.3,392.3 974.4,397.4 978.1,397.4 983.0,340.6 987.5,340.6 991.7,424.4 1013.3,424.4 1017.5,454.4 1021.1,454.4 1026.5,424.4 1030.5,424.4 1034.7,372.3 1043.3,372.3 1046.9,366.2 1051.4,394.5 1056.3,394.5 1060.5,339.4 1064.6,339.4 1069.1,393.2 1072.8,393.2 1077.7,421.3 1081.8,421.3 1086.3,423.2 1090.4,423.2 1094.9,483.4 1099.3,483.4 1103.5,423.2 1107.2,423.2 1112.1,371.6 1116.5,371.6 1120.7,340.6 1124.9,340.6 1129.3,369.2 1133.5,363.7 1137.7,423.2 1150.7,423.2 1155.6,421.3 1159.3,421.3 1163.7,368.4 1167.4,368.4 1172.3,335.5 1176.5,335.5 1180.7,390.5 1185.1,390.5 1190.0,368.4 1193.2,368.4 1198.2,392.3 1202.3,392.3 1206.5,370.6 1219.5,370.6 1223.7,425.4 1236.2,425.4 1241.7,480.5 1253.9,480.5 1258.9,478.5 1262.5,478.5 1266.7,422.2 1270.4,422.2 1275.3,420.3 1288.3,420.3 1292.0,422.2 1296.2,422.2 1301.9,509.2 1304.8,509.2 1309.2,485.4 1314.2,485.4 1318.6,455.2 1322.0,455.2 1327.7,422.2 1331.4,422.2 1335.5,336.5 1339.5,336.5 1344.1,367.4 1348.6,361.8 1352.7,391.3 1357.2,391.3 1361.3,422.2 1365.3,422.2 1370.7,483.4 1374.4,483.4 1378.5,421.3 1382.5,421.3 1387.4,396.9" fill="none" stroke="#73bf69" stroke-width="1" stroke-linejoin="round"/>
<polygon points="876.1,511.4 876.1,493.5 901.2,493.5 905.6,504.3 909.3,504.3 914.2,493.5 927.3,493.5 931.4,481.5 935.1,481.5 940.5,475.3 944.2,475.3 948.2,484.4 952.3,484.4 957.2,473.6 961.4,473.6 965.8,482.2 970.3,482.2 974.4,481.5 978.1,481.5 983.0,473.6 987.5,473.6 991.7,490.3 1013.3,490.3 1017.5,497.4 1021.1,497.4 1026.5,490.3 1030.5,490.3 1034.7,481.5 1043.3,482.7 1046.9,482.7 1051.4,484.4 1056.3,484.4 1060.5,472.4 1064.6,472.4 1069.1,484.4 1072.8,484.4 1077.7,488.6 1081.8,488.6 1086.3,490.3 1090.4,490.3 1094.9,501.6 1099.3,501.6 1103.5,490.3 1107.2,490.3 1112.1,480.5 1116.5,480.5 1120.7,474.3 1124.9,474.3 1129.3,480.5 1133.5,480.5 1137.7,490.1 1150.7,490.1 1155.6,489.1 1159.3,489.1 1163.7,479.3 1167.4,479.3 1172.3,470.4 1176.5,470.4 1180.7,482.2 1185.1,482.2 1190.0,478.5 1193.2,478.5 1198.2,484.2 1202.3,484.2 1206.5,480.5 1219.5,480.5 1223.7,492.5 1236.2,492.5 1241.7,504.3 1253.9,504.3 1258.9,502.4 1262.5,502.4 1266.7,490.1 1270.4,490.1 1275.3,488.3 1288.3,488.3 1292.0,490.1 1296.2,490.1 1301.9,509.2 1304.8,509.2 1309.2,503.6 1314.2,503.6 1318.6,499.4 1322.0,499.4 1327.7,490.1 1331.4,490.1 1335.5,472.4 1339.5,472.4 1344.1,480.5 1348.6,480.5 1352.7,484.2 1357.2,484.2 1361.3,490.1 1365.3,490.1 1370.7,501.4 1374.4,501.4 1378.5,490.1 1382.5,490.1 1387.4,483.4 1387.4,511.4" fill="#ff780a" fill-opacity="0.12"/><polyline points="876.1,493.5 901.2,493.5 905.6,504.3 909.3,504.3 914.2,493.5 927.3,493.5 931.4,481.5 935.1,481.5 940.5,475.3 944.2,475.3 948.2,484.4 952.3,484.4 957.2,473.6 961.4,473.6 965.8,482.2 970.3,482.2 974.4,481.5 978.1,481.5 983.0,473.6 987.5,473.6 991.7,490.3 1013.3,490.3 1017.5,497.4 1021.1,497.4 1026.5,490.3 1030.5,490.3 1034.7,481.5 1043.3,482.7 1046.9,482.7 1051.4,484.4 1056.3,484.4 1060.5,472.4 1064.6,472.4 1069.1,484.4 1072.8,484.4 1077.7,488.6 1081.8,488.6 1086.3,490.3 1090.4,490.3 1094.9,501.6 1099.3,501.6 1103.5,490.3 1107.2,490.3 1112.1,480.5 1116.5,480.5 1120.7,474.3 1124.9,474.3 1129.3,480.5 1133.5,480.5 1137.7,490.1 1150.7,490.1 1155.6,489.1 1159.3,489.1 1163.7,479.3 1167.4,479.3 1172.3,470.4 1176.5,470.4 1180.7,482.2 1185.1,482.2 1190.0,478.5 1193.2,478.5 1198.2,484.2 1202.3,484.2 1206.5,480.5 1219.5,480.5 1223.7,492.5 1236.2,492.5 1241.7,504.3 1253.9,504.3 1258.9,502.4 1262.5,502.4 1266.7,490.1 1270.4,490.1 1275.3,488.3 1288.3,488.3 1292.0,490.1 1296.2,490.1 1301.9,509.2 1304.8,509.2 1309.2,503.6 1314.2,503.6 1318.6,499.4 1322.0,499.4 1327.7,490.1 1331.4,490.1 1335.5,472.4 1339.5,472.4 1344.1,480.5 1348.6,480.5 1352.7,484.2 1357.2,484.2 1361.3,490.1 1365.3,490.1 1370.7,501.4 1374.4,501.4 1378.5,490.1 1382.5,490.1 1387.4,483.4" fill="none" stroke="#ff780a" stroke-width="1" stroke-linejoin="round"/>
<polygon points="876.1,511.4 876.1,508.5 901.2,508.5 905.6,510.0 909.3,510.0 914.2,508.5 927.3,508.5 931.4,505.5 944.2,505.5 948.2,506.8 952.3,506.8 957.2,504.3 987.5,504.3 991.7,506.8 1013.3,506.8 1017.5,507.8 1021.1,507.8 1026.5,506.8 1030.5,506.8 1034.7,505.5 1043.3,506.3 1051.4,506.8 1056.3,506.8 1060.5,504.3 1064.6,504.3 1069.1,506.8 1077.7,505.5 1090.4,506.8 1094.9,508.7 1099.3,508.7 1103.5,506.8 1112.1,505.5 1124.9,505.5 1129.3,505.5 1133.5,504.3 1137.7,506.3 1159.3,505.5 1163.7,504.3 1167.4,504.3 1172.3,502.6 1176.5,502.6 1180.7,504.3 1193.2,504.3 1198.2,506.8 1202.3,506.8 1206.5,505.5 1219.5,505.5 1223.7,508.5 1236.2,508.5 1241.7,510.0 1258.9,509.7 1262.5,509.2 1266.7,506.8 1275.3,505.5 1288.3,505.5 1296.2,506.8 1301.9,509.2 1309.2,510.0 1314.2,510.0 1318.6,508.5 1327.7,506.8 1335.5,504.3 1344.1,505.5 1348.6,504.3 1352.7,506.8 1365.3,506.8 1370.7,508.5 1374.4,508.5 1378.5,506.3 1387.4,505.1 1387.4,511.4" fill="#fade2a" fill-opacity="0.12"/><polyline points="876.1,508.5 901.2,508.5 905.6,510.0 909.3,510.0 914.2,508.5 927.3,508.5 931.4,505.5 944.2,505.5 948.2,506.8 952.3,506.8 957.2,504.3 987.5,504.3 991.7,506.8 1013.3,506.8 1017.5,507.8 1021.1,507.8 1026.5,506.8 1030.5,506.8 1034.7,505.5 1043.3,506.3 1051.4,506.8 1056.3,506.8 1060.5,504.3 1064.6,504.3 1069.1,506.8 1077.7,505.5 1090.4,506.8 1094.9,508.7 1099.3,508.7 1103.5,506.8 1112.1,505.5 1124.9,505.5 1129.3,505.5 1133.5,504.3 1137.7,506.3 1159.3,505.5 1163.7,504.3 1167.4,504.3 1172.3,502.6 1176.5,502.6 1180.7,504.3 1193.2,504.3 1198.2,506.8 1202.3,506.8 1206.5,505.5 1219.5,505.5 1223.7,508.5 1236.2,508.5 1241.7,510.0 1258.9,509.7 1262.5,509.2 1266.7,506.8 1275.3,505.5 1288.3,505.5 1296.2,506.8 1301.9,509.2 1309.2,510.0 1314.2,510.0 1318.6,508.5 1327.7,506.8 1335.5,504.3 1344.1,505.5 1348.6,504.3 1352.7,506.8 1365.3,506.8 1370.7,508.5 1374.4,508.5 1378.5,506.3 1387.4,505.1" fill="none" stroke="#fade2a" stroke-width="1" stroke-linejoin="round"/>
<polyline points="876.4,511.2 1387.4,511.2" stroke="#5a7fb8" fill="none" stroke-width="1"/>
<polyline points="876.4,510.2 1387.4,510.2" stroke="#d9475a" fill="none" stroke-width="1"/>
<text x="1426.6" y="323.4" font-size="12" fill="#6e9fff" text-anchor="start" font-weight="400" stroke="#6e9fff" stroke-width="0.25">Name</text>
<text x="1520.5" y="323.4" font-size="12" fill="#6e9fff" text-anchor="end" font-weight="400" stroke="#6e9fff" stroke-width="0.25">Mean</text>
<text x="1580.7" y="323.4" font-size="12" fill="#6e9fff" text-anchor="end" font-weight="400" stroke="#6e9fff" stroke-width="0.25">Max</text>
<line x1="1400" y1="329.5" x2="1600" y2="329.5" stroke="#2c2f35"/>
<rect x="1407" y="338.2" width="12" height="4" rx="2" fill="#73bf69"/>
<text x="1426.6" y="344.4" font-size="12" fill="#ccccdc" text-anchor="start" font-weight="400" >200</text>
<text x="1524.6" y="344.4" font-size="12" fill="#ccccdc" text-anchor="end" font-weight="400" >3.58 req/s</text>
<text x="1592" y="344.4" font-size="12" fill="#ccccdc" text-anchor="end" font-weight="400" >6.21 req/s</text>
<line x1="1400" y1="351.4" x2="1600" y2="351.4" stroke="#2c2f35"/>
<rect x="1407" y="359.7" width="12" height="4" rx="2" fill="#fade2a"/>
<text x="1426.6" y="365.9" font-size="12" fill="#ccccdc" text-anchor="start" font-weight="400" >302</text>
<text x="1524.6" y="365.9" font-size="12" fill="#ccccdc" text-anchor="end" font-weight="400" >0.15 req/s</text>
<text x="1592" y="365.9" font-size="12" fill="#ccccdc" text-anchor="end" font-weight="400" >0.30 req/s</text>
<line x1="1400" y1="372.9" x2="1600" y2="372.9" stroke="#2c2f35"/>
<rect x="1407" y="381.2" width="12" height="4" rx="2" fill="#8ab8ff"/>
<text x="1426.6" y="387.4" font-size="12" fill="#ccccdc" text-anchor="start" font-weight="400" >403</text>
<text x="1524.6" y="387.4" font-size="12" fill="#ccccdc" text-anchor="end" font-weight="400" >0.00 req/s</text>
<text x="1592" y="387.4" font-size="12" fill="#ccccdc" text-anchor="end" font-weight="400" >0.00 req/s</text>
<line x1="1400" y1="394.4" x2="1600" y2="394.4" stroke="#2c2f35"/>
<rect x="1407" y="402.7" width="12" height="4" rx="2" fill="#ff780a"/>
<text x="1426.6" y="408.9" font-size="12" fill="#ccccdc" text-anchor="start" font-weight="400" >404</text>
<text x="1524.6" y="408.9" font-size="12" fill="#ccccdc" text-anchor="end" font-weight="400" >0.81 req/s</text>
<text x="1592" y="408.9" font-size="12" fill="#ccccdc" text-anchor="end" font-weight="400" >1.43 req/s</text>
<line x1="1400" y1="415.9" x2="1600" y2="415.9" stroke="#2c2f35"/>
<rect x="1407" y="424.2" width="12" height="4" rx="2" fill="#f2495c"/>
<text x="1426.6" y="430.4" font-size="12" fill="#ccccdc" text-anchor="start" font-weight="400" >405</text>
<text x="1524.6" y="430.4" font-size="12" fill="#ccccdc" text-anchor="end" font-weight="400" >0.01 req/s</text>
<text x="1592" y="430.4" font-size="12" fill="#ccccdc" text-anchor="end" font-weight="400" >0.02 req/s</text>
<line x1="1400" y1="437.4" x2="1600" y2="437.4" stroke="#2c2f35"/>
<text x="7" y="563.8" font-size="13.5" fill="#ccccdc" text-anchor="start" font-weight="400" stroke="#ccccdc" stroke-width="0.3">Top 20 Views by Response Time (&gt; 1s)</text>
<defs><linearGradient id="bar" x1="0" x2="1" y1="0" y2="0">
<stop offset="0" stop-color="#73bf69"/><stop offset="0.16" stop-color="#73bf69"/><stop offset="0.45" stop-color="#eab839"/>
<stop offset="0.72" stop-color="#ef8c48"/><stop offset="1" stop-color="#f24a5d"/></linearGradient>
<clipPath id="clipBars"><rect x="0" y="570" width="800" height="231.5"/></clipPath></defs>
<g clip-path="url(#clipBars)">
<rect x="206" y="581.00" width="451" height="14" rx="2" fill="url(#bar)"/>
<text x="197" y="592.3" font-size="11.6" fill="#ccccdc" text-anchor="end" font-weight="400" >GET office:coursedate_list</text>
<text x="745.8" y="594.3" font-size="15.6" fill="#f2495c" text-anchor="start" font-weight="400" letter-spacing="0.5">100%</text>
<rect x="206" y="604.25" width="451" height="14" rx="2" fill="url(#bar)"/>
<text x="197" y="615.55" font-size="11.6" fill="#ccccdc" text-anchor="end" font-weight="400" >POST admin:sites_site_change</text>
<text x="745.8" y="617.55" font-size="15.6" fill="#f2495c" text-anchor="start" font-weight="400" letter-spacing="0.5">100%</text>
<rect x="206" y="627.50" width="451" height="14" rx="2" fill="url(#bar)"/>
<text x="197" y="638.8" font-size="11.6" fill="#ccccdc" text-anchor="end" font-weight="400" >GET admin:login</text>
<text x="745.8" y="640.8" font-size="15.6" fill="#f2495c" text-anchor="start" font-weight="400" letter-spacing="0.5">100%</text>
<rect x="206" y="650.75" width="451" height="14" rx="2" fill="url(#bar)"/>
<text x="197" y="662.05" font-size="11.6" fill="#ccccdc" text-anchor="end" font-weight="400" >POST &lt;unnamed view&gt;</text>
<text x="745.8" y="664.05" font-size="15.6" fill="#f2495c" text-anchor="start" font-weight="400" letter-spacing="0.5">100%</text>
<rect x="206" y="674.00" width="451" height="14" rx="2" fill="url(#bar)"/>
<text x="197" y="685.3" font-size="11.6" fill="#ccccdc" text-anchor="end" font-weight="400" >GET pages:privacy</text>
<text x="745.8" y="687.3" font-size="15.6" fill="#f2495c" text-anchor="start" font-weight="400" letter-spacing="0.5">100%</text>
<rect x="206" y="697.25" width="451" height="14" rx="2" fill="url(#bar)"/>
<text x="197" y="708.55" font-size="11.6" fill="#ccccdc" text-anchor="end" font-weight="400" >GET trainer:trainings</text>
<text x="745.8" y="710.55" font-size="15.6" fill="#f2495c" text-anchor="start" font-weight="400" letter-spacing="0.5">100%</text>
<rect x="206" y="720.50" width="451" height="14" rx="2" fill="url(#bar)"/>
<text x="197" y="731.8" font-size="11.6" fill="#ccccdc" text-anchor="end" font-weight="400" >GET trainer:trainings_partial</text>
<text x="745.8" y="733.8" font-size="15.6" fill="#f2495c" text-anchor="start" font-weight="400" letter-spacing="0.5">100%</text>
<rect x="206" y="743.75" width="451" height="14" rx="2" fill="url(#bar)"/>
<text x="197" y="755.05" font-size="11.6" fill="#ccccdc" text-anchor="end" font-weight="400" >GET pages:faqs-partial</text>
<text x="745.8" y="757.05" font-size="15.6" fill="#f2495c" text-anchor="start" font-weight="400" letter-spacing="0.5">100%</text>
<rect x="206" y="767.00" width="451" height="14" rx="2" fill="url(#bar)"/>
<text x="197" y="778.3" font-size="11.6" fill="#ccccdc" text-anchor="end" font-weight="400" >POST pages:index</text>
<text x="745.8" y="780.3" font-size="15.6" fill="#f2495c" text-anchor="start" font-weight="400" letter-spacing="0.5">100%</text>
<rect x="206" y="790.25" width="451" height="14" rx="2" fill="url(#bar)"/>
<text x="197" y="801.55" font-size="11.6" fill="#ccccdc" text-anchor="end" font-weight="400" >GET pages:agb</text>
<text x="745.8" y="803.55" font-size="15.6" fill="#f2495c" text-anchor="start" font-weight="400" letter-spacing="0.5">100%</text>
</g>
<rect x="780.1" y="581" width="11.7" height="220" fill="#323334"/>
<rect x="783" y="583.8" width="6" height="88.5" rx="3" fill="#a6a6a8"/>
<text x="815" y="564" font-size="13.4" fill="#ccccdc" text-anchor="start" font-weight="400" stroke="#ccccdc" stroke-width="0.3">Top Requests</text>
<line x1="876.7" y1="591.4" x2="1121.5" y2="591.4" stroke="rgba(204,204,220,0.10)"/>
<text x="871.5" y="594.6" font-size="12" fill="#ccccdc" text-anchor="end" font-weight="400" >0.70 req/s</text>
<line x1="876.7" y1="618.8" x2="1121.5" y2="618.8" stroke="rgba(204,204,220,0.10)"/>
<text x="871.5" y="622.0" font-size="12" fill="#ccccdc" text-anchor="end" font-weight="400" >0.60 req/s</text>
<line x1="876.7" y1="646.2" x2="1121.5" y2="646.2" stroke="rgba(204,204,220,0.10)"/>
<text x="871.5" y="649.4" font-size="12" fill="#ccccdc" text-anchor="end" font-weight="400" >0.50 req/s</text>
<line x1="876.7" y1="673.6" x2="1121.5" y2="673.6" stroke="rgba(204,204,220,0.10)"/>
<text x="871.5" y="676.8" font-size="12" fill="#ccccdc" text-anchor="end" font-weight="400" >0.40 req/s</text>
<line x1="876.7" y1="701.0" x2="1121.5" y2="701.0" stroke="rgba(204,204,220,0.10)"/>
<text x="871.5" y="704.2" font-size="12" fill="#ccccdc" text-anchor="end" font-weight="400" >0.30 req/s</text>
<line x1="876.7" y1="728.4" x2="1121.5" y2="728.4" stroke="rgba(204,204,220,0.10)"/>
<text x="871.5" y="731.6" font-size="12" fill="#ccccdc" text-anchor="end" font-weight="400" >0.20 req/s</text>
<line x1="876.7" y1="755.8" x2="1121.5" y2="755.8" stroke="rgba(204,204,220,0.10)"/>
<text x="871.5" y="759.0" font-size="12" fill="#ccccdc" text-anchor="end" font-weight="400" >0.10 req/s</text>
<line x1="876.7" y1="783.2" x2="1121.5" y2="783.2" stroke="rgba(204,204,220,0.10)"/>
<text x="871.5" y="786.4" font-size="12" fill="#ccccdc" text-anchor="end" font-weight="400" >0.00 req/s</text>
<line x1="896.6" y1="586" x2="896.6" y2="783.2" stroke="rgba(204,204,220,0.10)"/>
<text x="896.6" y="799.2" font-size="12" fill="#ccccdc" text-anchor="middle" font-weight="400" >20:30</text>
<line x1="957.9" y1="586" x2="957.9" y2="783.2" stroke="rgba(204,204,220,0.10)"/>
<text x="957.9" y="799.2" font-size="12" fill="#ccccdc" text-anchor="middle" font-weight="400" >20:45</text>
<line x1="1019.1" y1="586" x2="1019.1" y2="783.2" stroke="rgba(204,204,220,0.10)"/>
<text x="1019.1" y="799.2" font-size="12" fill="#ccccdc" text-anchor="middle" font-weight="400" >21:00</text>
<line x1="1080.3" y1="586" x2="1080.3" y2="783.2" stroke="rgba(204,204,220,0.10)"/>
<text x="1080.3" y="799.2" font-size="12" fill="#ccccdc" text-anchor="middle" font-weight="400" >21:15</text>
<polygon points="876.5,783.2 876.5,707.4 888.2,707.4 891.2,768.1 894.1,707.4 900.0,707.4 902.5,647.7 905.0,647.7 907.4,632.3 909.9,647.7 912.3,681.4 914.8,620.7 916.7,620.7 919.7,669.1 921.7,669.1 924.1,647.7 926.1,647.7 928.5,620.7 930.5,620.7 933.0,696.1 941.6,696.1 944.7,709.1 947.7,696.1 952.1,644.5 954.6,666.1 957.5,666.1 960.5,681.4 964.4,619.0 966.4,619.0 968.8,686.3 972.3,686.3 975.2,695.6 978.2,695.6 981.1,733.7 984.5,695.6 988.0,642.8 990.4,642.8 993.9,626.8 995.0,629.3 997.5,655.1 999.9,695.7 1006.1,695.7 1011.0,658.8 1013.4,634.2 1015.9,624.4 1018.3,607.2 1020.8,634.2 1022.5,668.6 1025.7,633.0 1027.4,636.7 1030.6,677.2 1033.8,642.8 1039.2,642.8 1041.7,704.3 1047.1,704.3 1050.3,765.7 1055.2,765.7 1058.9,744.8 1062.6,695.7 1066.3,685.8 1073.2,685.8 1076.1,695.7 1079.8,774.3 1083.5,747.3 1087.2,720.3 1090.8,688.3 1094.5,615.8 1097.7,617.0 1100.7,656.4 1104.4,680.9 1108.0,695.7 1112.5,737.5 1115.4,693.2 1117.9,693.2 1119.8,656.4 1119.8,783.2" fill="#f2495c" fill-opacity="0.1"/><polyline points="876.5,707.4 888.2,707.4 891.2,768.1 894.1,707.4 900.0,707.4 902.5,647.7 905.0,647.7 907.4,632.3 909.9,647.7 912.3,681.4 914.8,620.7 916.7,620.7 919.7,669.1 921.7,669.1 924.1,647.7 926.1,647.7 928.5,620.7 930.5,620.7 933.0,696.1 941.6,696.1 944.7,709.1 947.7,696.1 952.1,644.5 954.6,666.1 957.5,666.1 960.5,681.4 964.4,619.0 966.4,619.0 968.8,686.3 972.3,686.3 975.2,695.6 978.2,695.6 981.1,733.7 984.5,695.6 988.0,642.8 990.4,642.8 993.9,626.8 995.0,629.3 997.5,655.1 999.9,695.7 1006.1,695.7 1011.0,658.8 1013.4,634.2 1015.9,624.4 1018.3,607.2 1020.8,634.2 1022.5,668.6 1025.7,633.0 1027.4,636.7 1030.6,677.2 1033.8,642.8 1039.2,642.8 1041.7,704.3 1047.1,704.3 1050.3,765.7 1055.2,765.7 1058.9,744.8 1062.6,695.7 1066.3,685.8 1073.2,685.8 1076.1,695.7 1079.8,774.3 1083.5,747.3 1087.2,720.3 1090.8,688.3 1094.5,615.8 1097.7,617.0 1100.7,656.4 1104.4,680.9 1108.0,695.7 1112.5,737.5 1115.4,693.2 1117.9,693.2 1119.8,656.4" fill="none" stroke="#f2495c" stroke-width="1" stroke-linejoin="round"/>
<polygon points="876.5,783.2 876.5,746.2 888.2,746.2 891.2,773.0 894.1,746.2 900.0,746.2 902.5,711.6 908.4,710.4 912.3,707.9 914.8,676.0 919.7,676.0 923.1,668.6 925.6,667.4 928.0,676.0 930.5,676.5 933.0,711.6 940.3,714.0 945.2,711.6 952.6,711.6 956.3,722.6 960.0,717.7 964.4,676.0 967.3,690.7 971.0,677.2 974.2,688.3 977.2,698.1 981.1,737.4 984.5,712.8 991.9,709.9 995.0,687.1 999.9,711.7 1006.1,711.7 1009.7,677.2 1014.7,676.0 1018.3,641.6 1022.0,676.0 1026.9,677.2 1030.6,711.7 1039.2,711.7 1042.9,746.1 1047.1,746.1 1050.3,766.9 1055.2,766.9 1058.9,747.3 1062.6,711.7 1066.3,677.2 1073.2,677.2 1076.1,711.7 1079.8,774.3 1083.5,752.2 1087.2,737.5 1090.8,711.7 1094.5,676.0 1098.2,688.3 1100.7,690.8 1104.4,710.4 1112.5,737.5 1115.4,712.9 1119.8,700.6 1119.8,783.2" fill="#8ab8ff" fill-opacity="0.1"/><polyline points="876.5,746.2 888.2,746.2 891.2,773.0 894.1,746.2 900.0,746.2 902.5,711.6 908.4,710.4 912.3,707.9 914.8,676.0 919.7,676.0 923.1,668.6 925.6,667.4 928.0,676.0 930.5,676.5 933.0,711.6 940.3,714.0 945.2,711.6 952.6,711.6 956.3,722.6 960.0,717.7 964.4,676.0 967.3,690.7 971.0,677.2 974.2,688.3 977.2,698.1 981.1,737.4 984.5,712.8 991.9,709.9 995.0,687.1 999.9,711.7 1006.1,711.7 1009.7,677.2 1014.7,676.0 1018.3,641.6 1022.0,676.0 1026.9,677.2 1030.6,711.7 1039.2,711.7 1042.9,746.1 1047.1,746.1 1050.3,766.9 1055.2,766.9 1058.9,747.3 1062.6,711.7 1066.3,677.2 1073.2,677.2 1076.1,711.7 1079.8,774.3 1083.5,752.2 1087.2,737.5 1090.8,711.7 1094.5,676.0 1098.2,688.3 1100.7,690.8 1104.4,710.4 1112.5,737.5 1115.4,712.9 1119.8,700.6" fill="none" stroke="#8ab8ff" stroke-width="1" stroke-linejoin="round"/>
<polygon points="876.5,783.2 876.5,775.5 888.2,775.5 891.2,776.7 894.1,771.8 900.0,771.8 902.5,728.8 908.4,722.6 910.8,727.6 914.8,705.9 917.2,717.7 923.1,715.3 926.1,706.7 929.0,717.7 933.0,737.4 940.3,738.6 945.2,742.3 947.7,730.0 952.6,728.8 957.5,717.7 964.9,705.5 967.3,717.7 972.3,727.6 975.7,725.1 981.1,753.4 984.5,730.0 991.9,725.1 995.0,727.6 999.9,737.5 1007.3,737.5 1011.0,725.2 1015.9,715.3 1018.3,693.2 1022.0,715.3 1026.9,717.8 1030.6,728.9 1039.2,728.9 1042.9,749.7 1047.1,749.7 1050.3,773.1 1055.2,773.1 1058.9,749.7 1062.6,737.5 1066.3,725.2 1073.2,725.2 1076.1,737.5 1079.8,776.8 1083.5,757.1 1088.4,737.5 1092.1,717.8 1095.8,706.7 1099.4,715.3 1104.4,727.6 1112.5,762.0 1117.9,737.5 1119.8,727.6 1119.8,783.2" fill="#73bf69" fill-opacity="0.1"/><polyline points="876.5,775.5 888.2,775.5 891.2,776.7 894.1,771.8 900.0,771.8 902.5,728.8 908.4,722.6 910.8,727.6 914.8,705.9 917.2,717.7 923.1,715.3 926.1,706.7 929.0,717.7 933.0,737.4 940.3,738.6 945.2,742.3 947.7,730.0 952.6,728.8 957.5,717.7 964.9,705.5 967.3,717.7 972.3,727.6 975.7,725.1 981.1,753.4 984.5,730.0 991.9,725.1 995.0,727.6 999.9,737.5 1007.3,737.5 1011.0,725.2 1015.9,715.3 1018.3,693.2 1022.0,715.3 1026.9,717.8 1030.6,728.9 1039.2,728.9 1042.9,749.7 1047.1,749.7 1050.3,773.1 1055.2,773.1 1058.9,749.7 1062.6,737.5 1066.3,725.2 1073.2,725.2 1076.1,737.5 1079.8,776.8 1083.5,757.1 1088.4,737.5 1092.1,717.8 1095.8,706.7 1099.4,715.3 1104.4,727.6 1112.5,762.0 1117.9,737.5 1119.8,727.6" fill="none" stroke="#73bf69" stroke-width="1" stroke-linejoin="round"/>
<polygon points="876.5,783.2 876.5,751.6 888.2,751.6 891.2,771.8 894.1,751.6 900.0,751.6 902.5,732.5 908.4,715.3 913.3,725.1 918.2,715.3 923.1,723.9 928.0,720.2 933.0,732.5 940.3,731.2 944.0,747.2 947.7,730.0 952.6,737.4 957.5,717.7 962.4,727.6 967.3,717.7 972.3,737.4 977.2,732.5 981.1,747.2 984.5,732.5 991.9,720.2 995.0,717.8 999.9,730.1 1007.3,732.5 1013.4,744.8 1018.3,739.9 1022.0,747.3 1026.9,742.4 1031.9,737.5 1039.2,737.5 1042.9,752.2 1050.3,776.8 1058.9,757.1 1066.3,731.3 1073.2,731.3 1079.8,776.8 1090.8,747.3 1095.8,725.2 1104.4,747.3 1112.5,757.1 1117.9,737.5 1119.8,725.2 1119.8,783.2" fill="#5794f2" fill-opacity="0.1"/><polyline points="876.5,751.6 888.2,751.6 891.2,771.8 894.1,751.6 900.0,751.6 902.5,732.5 908.4,715.3 913.3,725.1 918.2,715.3 923.1,723.9 928.0,720.2 933.0,732.5 940.3,731.2 944.0,747.2 947.7,730.0 952.6,737.4 957.5,717.7 962.4,727.6 967.3,717.7 972.3,737.4 977.2,732.5 981.1,747.2 984.5,732.5 991.9,720.2 995.0,717.8 999.9,730.1 1007.3,732.5 1013.4,744.8 1018.3,739.9 1022.0,747.3 1026.9,742.4 1031.9,737.5 1039.2,737.5 1042.9,752.2 1050.3,776.8 1058.9,757.1 1066.3,731.3 1073.2,731.3 1079.8,776.8 1090.8,747.3 1095.8,725.2 1104.4,747.3 1112.5,757.1 1117.9,737.5 1119.8,725.2" fill="none" stroke="#5794f2" stroke-width="1" stroke-linejoin="round"/>
<polygon points="876.5,783.2 876.5,761.5 888.2,761.5 891.2,774.2 894.1,761.5 900.0,761.5 902.5,739.8 908.4,737.4 913.3,739.8 918.2,737.4 923.1,730.0 928.0,737.4 933.0,742.3 940.3,742.3 945.2,747.2 952.6,737.4 957.5,747.2 962.4,737.4 967.3,747.2 972.3,737.4 977.2,747.2 981.1,757.0 984.5,742.3 991.9,742.3 995.0,730.1 999.9,739.9 1007.3,741.1 1014.7,742.4 1022.0,747.3 1031.9,739.9 1039.2,742.4 1044.2,759.6 1050.3,778.0 1058.9,762.0 1066.3,749.7 1073.2,757.1 1079.8,778.0 1090.8,757.1 1095.8,749.7 1104.4,757.1 1112.5,766.9 1119.8,757.1 1119.8,783.2" fill="#d4691f" fill-opacity="0.1"/><polyline points="876.5,761.5 888.2,761.5 891.2,774.2 894.1,761.5 900.0,761.5 902.5,739.8 908.4,737.4 913.3,739.8 918.2,737.4 923.1,730.0 928.0,737.4 933.0,742.3 940.3,742.3 945.2,747.2 952.6,737.4 957.5,747.2 962.4,737.4 967.3,747.2 972.3,737.4 977.2,747.2 981.1,757.0 984.5,742.3 991.9,742.3 995.0,730.1 999.9,739.9 1007.3,741.1 1014.7,742.4 1022.0,747.3 1031.9,739.9 1039.2,742.4 1044.2,759.6 1050.3,778.0 1058.9,762.0 1066.3,749.7 1073.2,757.1 1079.8,778.0 1090.8,757.1 1095.8,749.7 1104.4,757.1 1112.5,766.9 1119.8,757.1" fill="none" stroke="#d4691f" stroke-width="1" stroke-linejoin="round"/>
<polygon points="876.5,783.2 876.5,764.4 891.2,776.7 900.0,764.4 902.5,747.2 913.3,737.4 923.1,739.8 933.0,747.2 947.7,752.1 962.4,749.7 972.3,752.1 981.1,761.9 991.9,749.7 995.0,742.4 999.9,752.2 1007.3,752.2 1014.7,742.4 1018.3,722.7 1022.0,739.9 1029.4,749.7 1039.2,742.4 1044.2,754.7 1050.3,779.2 1061.4,747.3 1066.3,739.9 1073.2,742.4 1079.8,779.2 1088.4,757.1 1095.8,737.5 1104.4,752.2 1112.5,762.0 1119.8,744.8 1119.8,783.2" fill="#8e2f7e" fill-opacity="0.1"/><polyline points="876.5,764.4 891.2,776.7 900.0,764.4 902.5,747.2 913.3,737.4 923.1,739.8 933.0,747.2 947.7,752.1 962.4,749.7 972.3,752.1 981.1,761.9 991.9,749.7 995.0,742.4 999.9,752.2 1007.3,752.2 1014.7,742.4 1018.3,722.7 1022.0,739.9 1029.4,749.7 1039.2,742.4 1044.2,754.7 1050.3,779.2 1061.4,747.3 1066.3,739.9 1073.2,742.4 1079.8,779.2 1088.4,757.1 1095.8,737.5 1104.4,752.2 1112.5,762.0 1119.8,744.8" fill="none" stroke="#8e2f7e" stroke-width="1" stroke-linejoin="round"/>
<polygon points="876.5,783.2 876.5,763.2 891.2,776.7 900.0,763.2 902.5,752.1 908.4,747.2 913.3,752.1 918.2,744.8 923.1,752.1 928.0,747.2 933.0,759.5 942.8,761.9 952.6,757.0 962.4,759.5 972.3,757.0 981.1,761.9 991.9,752.1 995.0,747.3 1002.4,759.6 1009.7,762.0 1018.3,742.4 1026.9,749.7 1036.8,749.7 1042.9,759.6 1050.3,779.2 1058.9,762.0 1066.3,757.1 1073.2,759.6 1079.8,779.2 1090.8,759.6 1095.8,747.3 1104.4,757.1 1112.5,766.9 1119.8,747.3 1119.8,783.2" fill="#1f60a8" fill-opacity="0.1"/><polyline points="876.5,763.2 891.2,776.7 900.0,763.2 902.5,752.1 908.4,747.2 913.3,752.1 918.2,744.8 923.1,752.1 928.0,747.2 933.0,759.5 942.8,761.9 952.6,757.0 962.4,759.5 972.3,757.0 981.1,761.9 991.9,752.1 995.0,747.3 1002.4,759.6 1009.7,762.0 1018.3,742.4 1026.9,749.7 1036.8,749.7 1042.9,759.6 1050.3,779.2 1058.9,762.0 1066.3,757.1 1073.2,759.6 1079.8,779.2 1090.8,759.6 1095.8,747.3 1104.4,757.1 1112.5,766.9 1119.8,747.3" fill="none" stroke="#1f60a8" stroke-width="1" stroke-linejoin="round"/>
<polygon points="876.5,783.2 876.5,769.3 888.2,769.3 891.2,777.9 894.1,769.3 900.0,769.3 905.0,764.4 908.4,757.0 910.8,761.9 914.8,754.6 918.2,761.9 923.1,759.5 926.1,754.6 929.0,761.9 933.0,766.9 940.3,769.3 945.2,771.8 947.7,766.9 952.6,761.9 957.5,766.9 964.9,759.5 969.8,766.9 974.7,766.9 981.1,773.0 987.0,761.9 994.4,757.0 995.0,759.6 1002.4,766.9 1009.7,762.0 1014.7,757.1 1018.3,753.4 1022.0,762.0 1029.4,762.0 1039.2,762.0 1044.2,771.9 1050.3,779.2 1058.9,771.9 1066.3,766.9 1073.6,769.4 1079.8,779.2 1088.4,766.9 1095.8,754.7 1103.1,764.5 1112.5,771.9 1119.8,759.6 1119.8,783.2" fill="#fade2a" fill-opacity="0.1"/><polyline points="876.5,769.3 888.2,769.3 891.2,777.9 894.1,769.3 900.0,769.3 905.0,764.4 908.4,757.0 910.8,761.9 914.8,754.6 918.2,761.9 923.1,759.5 926.1,754.6 929.0,761.9 933.0,766.9 940.3,769.3 945.2,771.8 947.7,766.9 952.6,761.9 957.5,766.9 964.9,759.5 969.8,766.9 974.7,766.9 981.1,773.0 987.0,761.9 994.4,757.0 995.0,759.6 1002.4,766.9 1009.7,762.0 1014.7,757.1 1018.3,753.4 1022.0,762.0 1029.4,762.0 1039.2,762.0 1044.2,771.9 1050.3,779.2 1058.9,771.9 1066.3,766.9 1073.6,769.4 1079.8,779.2 1088.4,766.9 1095.8,754.7 1103.1,764.5 1112.5,771.9 1119.8,759.6" fill="none" stroke="#fade2a" stroke-width="1" stroke-linejoin="round"/>
<polygon points="876.5,783.2 876.5,770.5 891.2,779.1 901.0,771.8 913.3,761.9 923.1,759.5 933.0,766.9 947.7,769.3 962.4,766.9 972.3,766.9 981.1,774.2 991.9,766.9 995.0,766.9 1007.3,766.9 1018.3,757.1 1029.4,759.6 1039.2,762.0 1050.3,779.2 1066.3,762.0 1073.2,764.5 1079.8,781.7 1095.8,762.0 1112.5,771.9 1119.8,766.9 1119.8,783.2" fill="#b877d9" fill-opacity="0.1"/><polyline points="876.5,770.5 891.2,779.1 901.0,771.8 913.3,761.9 923.1,759.5 933.0,766.9 947.7,769.3 962.4,766.9 972.3,766.9 981.1,774.2 991.9,766.9 995.0,766.9 1007.3,766.9 1018.3,757.1 1029.4,759.6 1039.2,762.0 1050.3,779.2 1066.3,762.0 1073.2,764.5 1079.8,781.7 1095.8,762.0 1112.5,771.9 1119.8,766.9" fill="none" stroke="#b877d9" stroke-width="1" stroke-linejoin="round"/>
<text x="1156.3" y="595.3" font-size="12" fill="#6e9fff" text-anchor="start" font-weight="400" stroke="#6e9fff" stroke-width="0.25">Name</text>
<text x="1556" y="595.3" font-size="12" fill="#6e9fff" text-anchor="end" font-weight="400" stroke="#6e9fff" stroke-width="0.25">Mean</text>
<path d="M1558.5,590.5 l2.5,2.5 l2.5,-2.5" stroke="#6e9fff" fill="none" stroke-width="1"/>
<rect x="1597" y="586" width="1.6" height="9" fill="#6e9fff"/>
<line x1="1129.3" y1="602.3" x2="1600" y2="602.3" stroke="#2c2f35"/>
<clipPath id="clipTR"><rect x="1129" y="580" width="471" height="230"/></clipPath>
<g clip-path="url(#clipTR)">
<rect x="1136" y="610.2" width="13" height="4" rx="2" fill="#f2495c"/>
<text x="1156.3" y="616.4000000000001" font-size="12" fill="#ccccdc" text-anchor="start" font-weight="400" >{method=&quot;GET&quot;, view=&quot;blog:post-detail&quot;}</text>
<text x="1563" y="616.4000000000001" font-size="12" fill="#ccccdc" text-anchor="end" font-weight="400" >0.36 req/s</text>
<text x="1599.8" y="616.4000000000001" font-size="12" fill="#ccccdc" text-anchor="end" font-weight="400" >0.64</text>
<line x1="1129.3" y1="623.0" x2="1600" y2="623.0" stroke="#2c2f35"/>
<rect x="1136" y="631.7" width="13" height="4" rx="2" fill="#8ab8ff"/>
<text x="1156.3" y="637.9000000000001" font-size="12" fill="#ccccdc" text-anchor="start" font-weight="400" >{method=&quot;GET&quot;, view=&quot;admin:jsi18n&quot;}</text>
<text x="1563" y="637.9000000000001" font-size="12" fill="#ccccdc" text-anchor="end" font-weight="400" >0.26 req/s</text>
<text x="1599.8" y="637.9000000000001" font-size="12" fill="#ccccdc" text-anchor="end" font-weight="400" >0.52</text>
<line x1="1129.3" y1="644.5" x2="1600" y2="644.5" stroke="#2c2f35"/>
<rect x="1136" y="653.2" width="13" height="4" rx="2" fill="#73bf69"/>
<text x="1156.3" y="659.4000000000001" font-size="12" fill="#ccccdc" text-anchor="start" font-weight="400" >{method=&quot;GET&quot;, view=&quot;admin:blog_post_change&quot;}</text>
<text x="1563" y="659.4000000000001" font-size="12" fill="#ccccdc" text-anchor="end" font-weight="400" >0.17 req/s</text>
<text x="1599.8" y="659.4000000000001" font-size="12" fill="#ccccdc" text-anchor="end" font-weight="400" >0.33</text>
<line x1="1129.3" y1="666.0" x2="1600" y2="666.0" stroke="#2c2f35"/>
<rect x="1136" y="674.7" width="13" height="4" rx="2" fill="#5794f2"/>
<text x="1156.3" y="680.9000000000001" font-size="12" fill="#ccccdc" text-anchor="start" font-weight="400" >{method=&quot;GET&quot;, view=&quot;blog:posts&quot;}</text>
<text x="1563" y="680.9000000000001" font-size="12" fill="#ccccdc" text-anchor="end" font-weight="400" >0.15 req/s</text>
<text x="1599.8" y="680.9000000000001" font-size="12" fill="#ccccdc" text-anchor="end" font-weight="400" >0.28</text>
<line x1="1129.3" y1="687.5" x2="1600" y2="687.5" stroke="#2c2f35"/>
<rect x="1136" y="696.2" width="13" height="4" rx="2" fill="#c8611c"/>
<text x="1156.3" y="702.4000000000001" font-size="12" fill="#ccccdc" text-anchor="start" font-weight="400" >{method=&quot;GET&quot;, view=&quot;pages:index&quot;}</text>
<text x="1563" y="702.4000000000001" font-size="12" fill="#ccccdc" text-anchor="end" font-weight="400" >0.12 req/s</text>
<text x="1599.8" y="702.4000000000001" font-size="12" fill="#ccccdc" text-anchor="end" font-weight="400" >0.20</text>
<line x1="1129.3" y1="709.0" x2="1600" y2="709.0" stroke="#2c2f35"/>
<rect x="1136" y="717.7" width="13" height="4" rx="2" fill="#6d1f62"/>
<text x="1156.3" y="723.9000000000001" font-size="12" fill="#ccccdc" text-anchor="start" font-weight="400" >{method=&quot;POST&quot;, view=&quot;admin:blog_post_change&quot;}</text>
<text x="1563" y="723.9000000000001" font-size="12" fill="#ccccdc" text-anchor="end" font-weight="400" >0.11 req/s</text>
<text x="1599.8" y="723.9000000000001" font-size="12" fill="#ccccdc" text-anchor="end" font-weight="400" >0.22</text>
<line x1="1129.3" y1="730.5" x2="1600" y2="730.5" stroke="#2c2f35"/>
<rect x="1136" y="739.2" width="13" height="4" rx="2" fill="#0a437c"/>
<text x="1156.3" y="745.4000000000001" font-size="12" fill="#ccccdc" text-anchor="start" font-weight="400" >{method=&quot;GET&quot;, view=&quot;pages:robots&quot;}</text>
<text x="1563" y="745.4000000000001" font-size="12" fill="#ccccdc" text-anchor="end" font-weight="400" >0.09 req/s</text>
<text x="1599.8" y="745.4000000000001" font-size="12" fill="#ccccdc" text-anchor="end" font-weight="400" >0.21</text>
<line x1="1129.3" y1="752.0" x2="1600" y2="752.0" stroke="#2c2f35"/>
<rect x="1136" y="760.7" width="13" height="4" rx="2" fill="#fade2a"/>
<text x="1156.3" y="766.9000000000001" font-size="12" fill="#ccccdc" text-anchor="start" font-weight="400" >{method=&quot;GET&quot;, view=&quot;pages:course_detail&quot;}</text>
<text x="1563" y="766.9000000000001" font-size="12" fill="#ccccdc" text-anchor="end" font-weight="400" >0.06 req/s</text>
<text x="1599.8" y="766.9000000000001" font-size="12" fill="#ccccdc" text-anchor="end" font-weight="400" >0.11</text>
<line x1="1129.3" y1="773.5" x2="1600" y2="773.5" stroke="#2c2f35"/>
<rect x="1136" y="782.2" width="13" height="4" rx="2" fill="#806eb7"/>
<text x="1156.3" y="788.4000000000001" font-size="12" fill="#ccccdc" text-anchor="start" font-weight="400" >{method=&quot;GET&quot;, view=&quot;django.contrib.sitemaps.views.sitemap&quot;}</text>
<text x="1563" y="788.4000000000001" font-size="12" fill="#ccccdc" text-anchor="end" font-weight="400" >0.06 req/s</text>
<text x="1599.8" y="788.4000000000001" font-size="12" fill="#ccccdc" text-anchor="end" font-weight="400" >0.10</text>
<line x1="1129.3" y1="795.0" x2="1600" y2="795.0" stroke="#2c2f35"/>
</g>
<rect x="0" y="0" width="1623" height="138.5" fill="#111217"/>
<rect x="0" y="0" width="1623" height="81" fill="#181b1f"/>
<rect x="0" y="0" width="1623" height="1" fill="#2e3035"/>
<rect x="798" y="0" width="10" height="10.5" fill="#111217"/>
<rect x="798" y="0" width="1" height="10" fill="#2b2e33"/><rect x="807" y="0" width="1" height="10" fill="#2b2e33"/>
<rect x="1607" y="0" width="16" height="10" fill="#111217"/><rect x="1607" y="0" width="1" height="10" fill="#2b2e33"/>
<rect x="0" y="45" width="1623" height="1" fill="#2c2f35"/>
<rect x="0" y="81" width="1623" height="1" fill="#2c2f35"/>
<rect x="439.5" y="13.5" width="467" height="28" rx="2" fill="#111217" stroke="#2f3237"/>
<circle cx="452.3" cy="26.2" r="5.2" fill="none" stroke="#a0a1aa" stroke-width="1.3"/><line x1="456" y1="30" x2="459.2" y2="33.2" stroke="#a0a1aa" stroke-width="1.3"/>
<text x="465" y="32" font-size="13.4" fill="#8e8e99" text-anchor="start" font-weight="400" >Search or jump to...</text>
<rect x="852.5" y="23" width="12" height="8" rx="1.5" fill="none" stroke="#a0a1aa" stroke-width="1"/>
<rect x="854.3" y="24.9" width="1.2" height="1" fill="#a0a1aa"/><rect x="856.4" y="24.9" width="1.2" height="1" fill="#a0a1aa"/><rect x="858.5" y="24.9" width="1.2" height="1" fill="#a0a1aa"/><rect x="860.6" y="24.9" width="1.2" height="1" fill="#a0a1aa"/><rect x="854.4" y="27.3" width="0.9" height="1.8" fill="#a0a1aa"/><rect x="861.8" y="27.3" width="0.9" height="1.8" fill="#a0a1aa"/><rect x="856.3" y="27.9" width="4.6" height="1.2" fill="#a0a1aa"/>
<text x="870" y="31.3" font-size="12" fill="#8e8e99" text-anchor="start" font-weight="400" >ctrl+k</text>
<path d="M1478,21 v11 M1472.5,26.5 h11" stroke="#ccccdc" stroke-width="1.3" fill="none"/>
<path d="M1490.5,25.3 l3,3 l3,-3" stroke="#ccccdc" stroke-width="1.1" fill="none"/>
<rect x="1512" y="16" width="1" height="21.5" fill="#2c2f35"/>
<circle cx="1533.3" cy="26.6" r="6.6" fill="none" stroke="#ccccdc" stroke-width="1.2"/>
<text x="1533.3" y="30" font-size="9" fill="#ccccdc" text-anchor="middle" font-weight="700">?</text>
<circle cx="1564.5" cy="31.6" r="1.3" fill="none" stroke="#ccccdc" stroke-width="1.1"/>
<path d="M1563.5,26.5 a6,6 0 0 1 6,6 M1563.5,23 a9.5,9.5 0 0 1 9.5,9.5 M1564,21" stroke="#ccccdc" stroke-width="1.2" fill="none"/>
<path d="M1565,20.2 a11.5,11.5 0 0 1 9.5,10.5" stroke="#ccccdc" stroke-width="1.1" fill="none"/>
<circle cx="1602.6" cy="26.8" r="10.5" fill="#4d432e"/>
<path d="M1594,26.9 h4 v-4.8 h2.2 v-2.1 h4.7 v2.1 h2.2 v4.8 h3.9 v7.1 h-17 z" fill="#f4b9a2" stroke="#2e2a1c" stroke-width="0.5"/>
<rect x="1600.7" y="23" width="3.7" height="1.5" fill="#3a3222"/><rect x="1600.5" y="27.1" width="4.2" height="3.8" fill="#3a3222"/><rect x="1602.3" y="27.1" width="0.6" height="3.8" fill="#f4b9a2"/>
<path d="M1430.3,56.2 l1.9,4 4.3,0.6 -3.1,3 0.8,4.3 -3.9,-2.1 -3.9,2.1 0.8,-4.3 -3.1,-3 4.3,-0.6 z" fill="none" stroke="#a0a1aa" stroke-width="1.2" stroke-linejoin="round"/>
<rect x="1461" y="52" width="1" height="22" fill="#2c2f35"/>
<rect x="1473.5" y="52.5" width="44" height="21" rx="2" fill="#181b1f" stroke="#6e9fff" stroke-width="1"/>
<text x="1495.5" y="66.8" font-size="11.5" fill="#6e9fff" text-anchor="middle" font-weight="400" stroke="#6e9fff" stroke-width="0.2">Share</text>
<rect x="1532" y="52" width="35" height="22" rx="2" fill="#3d71d9"/>
<text x="1549.5" y="66.8" font-size="11.6" fill="#ffffff" text-anchor="middle" font-weight="400" stroke="#ffffff" stroke-width="0.2">Edit</text>
<rect x="1577" y="52" width="1" height="22" fill="#2c2f35"/>
<path d="M1596.2,65.6 l4.8,-4.8 l4.8,4.8" stroke="#a0a1aa" stroke-width="1.3" fill="none"/>
<rect x="-0.5" y="96.5" width="183" height="28" rx="2" fill="#111217" stroke="#33363b"/><rect x="0" y="97" width="73.5" height="27" fill="#1d2025"/><rect x="73.5" y="97" width="1" height="27" fill="#35383d"/><text x="7.199999999999999" y="113.8" font-size="12" fill="#ccccdc" text-anchor="start" font-weight="400" >datasource</text><text x="82.0" y="114.8" font-size="13.5" fill="#ccccdc" text-anchor="start" font-weight="400" >prometheus</text><path d="M165.5,109.8 l3,3 l3,-3" stroke="#a0a1aa" stroke-width="1.1" fill="none"/>
<rect x="191.5" y="96.5" width="125.60000000000002" height="28" rx="2" fill="#111217" stroke="#33363b"/><rect x="192" y="97" width="73.39999999999998" height="27" fill="#1d2025"/><rect x="265.4" y="97" width="1" height="27" fill="#35383d"/><text x="199.2" y="113.8" font-size="12" fill="#ccccdc" text-anchor="start" font-weight="400" >application</text><text x="273.9" y="114.8" font-size="13.3" fill="#ccccdc" text-anchor="start" font-weight="400" >All</text><path d="M300.1,109.8 l3,3 l3,-3" stroke="#a0a1aa" stroke-width="1.1" fill="none"/>
<rect x="326.5" y="96.5" width="131.7" height="28" rx="2" fill="#111217" stroke="#33363b"/><rect x="327" y="97" width="82.60000000000002" height="27" fill="#1d2025"/><rect x="409.6" y="97" width="1" height="27" fill="#35383d"/><text x="334.2" y="113.8" font-size="12" fill="#ccccdc" text-anchor="start" font-weight="400" >threshold</text><text x="418.1" y="114.8" font-size="13.3" fill="#ccccdc" text-anchor="start" font-weight="400" >1s</text><path d="M441.2,109.8 l3,3 l3,-3" stroke="#a0a1aa" stroke-width="1.1" fill="none"/>
<circle cx="394.3" cy="110.2" r="5.3" fill="none" stroke="#a0a1aa" stroke-width="1.1"/><rect x="393.7" y="108.3" width="1.2" height="4.5" fill="#a0a1aa"/><rect x="393.7" y="106.3" width="1.2" height="1.2" fill="#a0a1aa"/>
<rect x="1298.5" y="96.5" width="159" height="28" rx="2" fill="#22252b" stroke="#2a2d32"/>
<rect x="1426" y="97" width="1" height="27" fill="#2f3237"/>
<circle cx="1314" cy="110.5" r="6.4" fill="none" stroke="#ccccdc" stroke-width="1.2"/><path d="M1314,106.5 v4 h-2.5" stroke="#ccccdc" stroke-width="1.2" fill="none"/>
<text x="1329.6" y="114.4" font-size="13" fill="#ccccdc" text-anchor="start" font-weight="400" >Last 1 hour</text>
<path d="M1408.5,109 l3,3 l3,-3" stroke="#ccccdc" stroke-width="1.1" fill="none"/>
<circle cx="1441.2" cy="110" r="5.5" fill="none" stroke="#ccccdc" stroke-width="1.2"/><path d="M1438.5,110 h5.4 M1445.2,114.2 l3,3" stroke="#ccccdc" stroke-width="1.2" fill="none"/>
<rect x="1465.5" y="96.5" width="143" height="28" rx="2" fill="#22252b" stroke="#2a2d32"/>
<rect x="1551.2" y="97" width="1" height="27" fill="#2f3237"/>
<path d="M1476.5,110.5 a5.5,5.5 0 0 1 9.8,-3.4 M1487.2,110.5 a5.5,5.5 0 0 1 -9.8,3.4 M1486.5,104 v3.3 h-3.3 M1477.2,117 v-3.3 h3.3" stroke="#ccccdc" stroke-width="1.2" fill="none"/>
<text x="1497.2" y="114.4" font-size="13.4" fill="#ccccdc" text-anchor="start" font-weight="400" >Refresh</text>
<text x="1560.4" y="114.4" font-size="13.6" fill="#ccccdc" text-anchor="start" font-weight="400" >30s</text>
<path d="M1590,109 l3,3 l3,-3" stroke="#ccccdc" stroke-width="1.1" fill="none"/>
</svg></body></html>
